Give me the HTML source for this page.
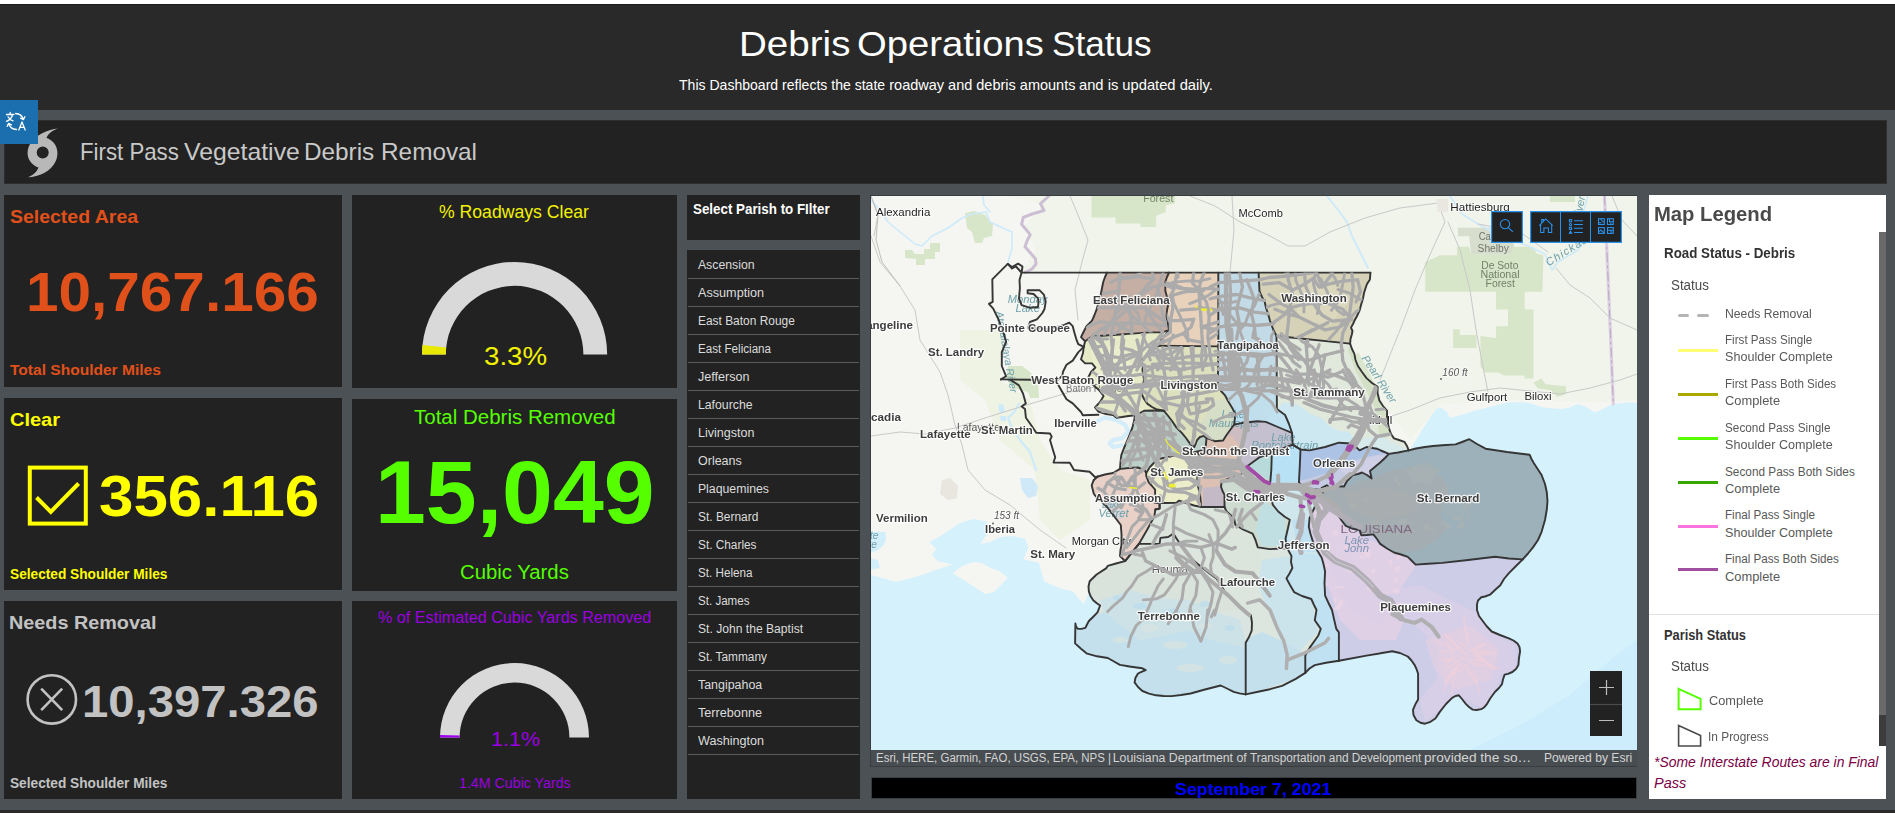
<!DOCTYPE html>
<html lang="en"><head><meta charset="utf-8"><title>Debris Operations Status</title><style>
html,body{margin:0;padding:0}
body{width:1895px;height:813px;overflow:hidden;background:#4c5156;position:relative;font-family:"Liberation Sans",sans-serif}
.b{position:absolute;display:block;box-sizing:border-box}
.t{position:absolute;white-space:nowrap;line-height:normal;transform-origin:0 0;display:block}
.med{-webkit-text-stroke:0}
</style></head><body>
<div class="b" style="left:0px;top:0px;width:1895px;height:4px;background:#ffffff;"></div>
<div class="b" style="left:0px;top:4px;width:1895px;height:106px;background:#292929;"></div>
<div class="b" style="left:0px;top:4px;width:1895px;height:1px;background:#1c1c1c;"></div>
<div class="b" style="left:0px;top:810px;width:1895px;height:3px;background:#2a2a2a;"></div>
<span class="t " style="left:738.72px;top:24.40px;font-size:35px;color:#ffffff;transform:scaleX(1.1017);">Debris</span>
<span class="t " style="left:857.38px;top:24.40px;font-size:35px;color:#ffffff;transform:scaleX(1.0918);">Operations</span>
<span class="t " style="left:1051.72px;top:24.40px;font-size:35px;color:#ffffff;transform:scaleX(1.0049);">Status</span>
<span class="t " style="left:679.42px;top:76.50px;font-size:14.5px;color:#ffffff;transform:scaleX(0.9688);">This Dashboard reflects the state</span>
<span class="t " style="left:889.26px;top:76.50px;font-size:14.5px;color:#ffffff;">roadway and debris amounts</span>
<span class="t " style="left:1079.01px;top:76.50px;font-size:14.5px;color:#ffffff;transform:scaleX(1.0149);">and is updated daily.</span>
<div class="b" style="left:4px;top:120px;width:1883px;height:64px;background:#222222;box-shadow:inset 0 0 0 1px #2e2e2e;"></div>
<span class="t " style="left:79.92px;top:138.40px;font-size:24px;color:#c9c9c9;transform:scaleX(0.9267);">First Pass</span>
<span class="t " style="left:184.38px;top:138.40px;font-size:24px;color:#c9c9c9;transform:scaleX(1.0333);">Vegetative</span>
<span class="t " style="left:303.85px;top:138.40px;font-size:24px;color:#c9c9c9;transform:scaleX(1.0134);">Debris Removal</span>
<svg class="b" style="left:24px;top:126px" width="40" height="54" viewBox="24 126 40 54"><path d="M58.2 128.6 C48 129.5 35 135 29.5 145 C26.5 151 27 158 31.5 163 C34 165.8 36.5 167 38.5 167.6 C37 172 33 175.5 27.8 177.2 C39 177 51 171.5 55.8 161 C58.5 155 58 147.5 53.5 142.5 C51 139.8 48.5 138.5 46.5 138 C48 134 52 130.5 58.2 128.6 Z M42.7 146.5 A6 6 0 1 0 42.7 158.5 A6 6 0 1 0 42.7 146.5 Z" fill="#b8b8b8" fill-rule="evenodd"/></svg>
<div class="b" style="left:0px;top:100px;width:38px;height:44px;background:#1b6fae;"></div>
<svg class="b" style="left:4px;top:109px" width="24" height="24" viewBox="0 0 24 24" fill="none" stroke="#ffffff" stroke-width="1.3" stroke-linecap="round" stroke-linejoin="round"><path d="M2.5 5.5h7.5M6.2 3.5v2M8.6 5.5C8 8.5 5.5 11 2.5 12.3M4 7.8c1 1.8 3 3.3 5 4"/><path d="M11.5 4.5c4 .2 6.8 2.2 7.8 6M20.8 7.7l-1.4 2.9-2.8-1.5"/><path d="M12.5 20.5c-4-.2-6.8-2.2-7.8-6M3.2 17.3l1.4-2.9 2.8 1.5"/><path d="M14.8 21l3.2-8 3.2 8M16 18.3h4"/></svg>
<div class="b" style="left:4px;top:195px;width:338px;height:192px;background:#222222;"></div>
<div class="b" style="left:4px;top:398px;width:338px;height:192px;background:#222222;"></div>
<div class="b" style="left:4px;top:601px;width:338px;height:198px;background:#222222;"></div>
<span class="t " style="left:10.22px;top:206.10px;font-size:19px;color:#e0501a;font-weight:bold;transform:scaleX(1.0245);">Selected Area</span>
<span class="t med" style="left:26.49px;top:260.40px;font-size:55px;color:#e0501a;font-weight:bold;transform:scaleX(1.0635);">10,767.166</span>
<span class="t " style="left:10.44px;top:362.40px;font-size:14.5px;color:#e0501a;font-weight:bold;transform:scaleX(1.0722);">Total Shoulder Miles</span>
<span class="t " style="left:9.80px;top:409.00px;font-size:19px;color:#ffff00;font-weight:bold;transform:scaleX(1.0526);">Clear</span>
<svg class="b" style="left:26px;top:464px" width="64" height="64" viewBox="26 464 64 64" fill="none" stroke="#ffff00" stroke-width="4"><rect x="29.8" y="467.6" width="56" height="56"/><path d="M36.5 497.5L50.8 511.8L78.6 483.5"/></svg>
<span class="t med" style="left:98.66px;top:463.80px;font-size:56.5px;color:#ffff00;font-weight:bold;transform:scaleX(1.0948);">356.116</span>
<span class="t " style="left:10.19px;top:566.30px;font-size:14.5px;color:#ffff00;font-weight:bold;transform:scaleX(0.9439);">Selected Shoulder Miles</span>
<span class="t " style="left:9.31px;top:611.90px;font-size:19px;color:#c2c2c2;font-weight:bold;transform:scaleX(1.0418);">Needs Removal</span>
<svg class="b" style="left:24px;top:672px" width="56" height="56" viewBox="24 672 56 56" fill="none" stroke="#c2c2c2" stroke-width="2.6"><circle cx="51.8" cy="699.4" r="24.2"/><path d="M41.2 688.6L62.2 710.2M62.2 688.6L41.2 710.2"/></svg>
<span class="t med" style="left:82.26px;top:676.90px;font-size:44px;color:#c2c2c2;font-weight:bold;transform:scaleX(1.0743);">10,397.326</span>
<span class="t " style="left:10.19px;top:775.30px;font-size:14.5px;color:#c2c2c2;font-weight:bold;transform:scaleX(0.9433);">Selected Shoulder Miles</span>
<div class="b" style="left:352px;top:195px;width:325px;height:193px;background:#222222;"></div>
<div class="b" style="left:352px;top:399px;width:325px;height:192px;background:#222222;"></div>
<div class="b" style="left:352px;top:601px;width:325px;height:198px;background:#222222;"></div>
<span class="t " style="left:439.38px;top:201.70px;font-size:17.5px;color:#f2f200;transform:scaleX(1.0070);">% Roadways Clear</span>
<svg class="b" style="left:419.9px;top:260.0px" width="189.2" height="96.6" viewBox="419.9 260.0 189.2 96.6"><path d="M421.90 354.60A92.6 92.6 0 0 1 607.10 354.60L583.30 354.60A68.8 68.8 0 0 0 445.70 354.60Z" fill="#d9d9d9"/><path d="M421.90 354.60A92.6 92.6 0 0 1 422.40 345.02L446.07 347.48A68.8 68.8 0 0 0 445.70 354.60Z" fill="#e8e800"/></svg>
<span class="t " style="left:483.93px;top:341.20px;font-size:26.5px;color:#f2f200;transform:scaleX(1.0450);">3.3%</span>
<span class="t " style="left:413.89px;top:405.80px;font-size:20px;color:#55ff00;transform:scaleX(1.0246);">Total Debris Removed</span>
<span class="t med" style="left:374.72px;top:441.80px;font-size:88.5px;color:#55ff00;font-weight:bold;transform:scaleX(1.0328);">15,049</span>
<span class="t " style="left:459.88px;top:560.80px;font-size:20px;color:#55ff00;transform:scaleX(1.0161);">Cubic Yards</span>
<span class="t " style="left:377.63px;top:608.70px;font-size:16px;color:#9a00e0;transform:scaleX(1.0100);">% of Estimated Cubic Yards Removed</span>
<svg class="b" style="left:438.0px;top:660.9px" width="153.0" height="78.5" viewBox="438.0 660.9 153.0 78.5"><path d="M440.00 737.40A74.5 74.5 0 0 1 589.00 737.40L569.40 737.40A54.9 54.9 0 0 0 459.60 737.40Z" fill="#d9d9d9"/><path d="M440.00 737.40A74.5 74.5 0 0 1 440.04 734.83L459.63 735.50A54.9 54.9 0 0 0 459.60 737.40Z" fill="#a000f0"/></svg>
<span class="t " style="left:490.79px;top:726.50px;font-size:21px;color:#9a00e0;transform:scaleX(1.0248);">1.1%</span>
<span class="t " style="left:458.63px;top:774.60px;font-size:14px;color:#9a00e0;transform:scaleX(1.0154);">1.4M Cubic Yards</span>
<div class="b" style="left:687px;top:195px;width:173px;height:45px;background:#222222;"></div>
<span class="t " style="left:692.60px;top:201.00px;font-size:14px;color:#ffffff;font-weight:bold;transform:scaleX(0.9543);">Select Parish to FIlter</span>
<div class="b" style="left:687px;top:250px;width:173px;height:549px;background:#222222;"></div>
<span class="t " style="left:697.90px;top:258.00px;font-size:12.3px;color:#dcdcdc;">Ascension</span>
<div class="b" style="left:688px;top:278px;width:171px;height:1px;background:#5c5c5c;"></div>
<span class="t " style="left:697.90px;top:286.00px;font-size:12.3px;color:#dcdcdc;transform:scaleX(1.0279);">Assumption</span>
<div class="b" style="left:688px;top:306px;width:171px;height:1px;background:#5c5c5c;"></div>
<span class="t " style="left:697.90px;top:314.00px;font-size:12.3px;color:#dcdcdc;transform:scaleX(0.9696);">East Baton Rouge</span>
<div class="b" style="left:688px;top:334px;width:171px;height:1px;background:#5c5c5c;"></div>
<span class="t " style="left:697.90px;top:342.00px;font-size:12.3px;color:#dcdcdc;transform:scaleX(0.9456);">East Feliciana</span>
<div class="b" style="left:688px;top:362px;width:171px;height:1px;background:#5c5c5c;"></div>
<span class="t " style="left:697.90px;top:370.00px;font-size:12.3px;color:#dcdcdc;transform:scaleX(1.0215);">Jefferson</span>
<div class="b" style="left:688px;top:390px;width:171px;height:1px;background:#5c5c5c;"></div>
<span class="t " style="left:697.90px;top:398.00px;font-size:12.3px;color:#dcdcdc;">Lafourche</span>
<div class="b" style="left:688px;top:418px;width:171px;height:1px;background:#5c5c5c;"></div>
<span class="t " style="left:697.90px;top:426.00px;font-size:12.3px;color:#dcdcdc;transform:scaleX(1.0199);">Livingston</span>
<div class="b" style="left:688px;top:446px;width:171px;height:1px;background:#5c5c5c;"></div>
<span class="t " style="left:697.90px;top:454.00px;font-size:12.3px;color:#dcdcdc;transform:scaleX(1.0160);">Orleans</span>
<div class="b" style="left:688px;top:474px;width:171px;height:1px;background:#5c5c5c;"></div>
<span class="t " style="left:697.90px;top:482.00px;font-size:12.3px;color:#dcdcdc;">Plaquemines</span>
<div class="b" style="left:688px;top:502px;width:171px;height:1px;background:#5c5c5c;"></div>
<span class="t " style="left:697.90px;top:510.00px;font-size:12.3px;color:#dcdcdc;transform:scaleX(0.9701);">St. Bernard</span>
<div class="b" style="left:688px;top:530px;width:171px;height:1px;background:#5c5c5c;"></div>
<span class="t " style="left:697.90px;top:538.00px;font-size:12.3px;color:#dcdcdc;transform:scaleX(0.9620);">St. Charles</span>
<div class="b" style="left:688px;top:558px;width:171px;height:1px;background:#5c5c5c;"></div>
<span class="t " style="left:697.90px;top:566.00px;font-size:12.3px;color:#dcdcdc;transform:scaleX(0.9495);">St. Helena</span>
<div class="b" style="left:688px;top:586px;width:171px;height:1px;background:#5c5c5c;"></div>
<span class="t " style="left:697.90px;top:594.00px;font-size:12.3px;color:#dcdcdc;transform:scaleX(0.9421);">St. James</span>
<div class="b" style="left:688px;top:614px;width:171px;height:1px;background:#5c5c5c;"></div>
<span class="t " style="left:697.90px;top:622.00px;font-size:12.3px;color:#dcdcdc;transform:scaleX(0.9852);">St. John the Baptist</span>
<div class="b" style="left:688px;top:642px;width:171px;height:1px;background:#5c5c5c;"></div>
<span class="t " style="left:697.90px;top:650.00px;font-size:12.3px;color:#dcdcdc;transform:scaleX(0.9633);">St. Tammany</span>
<div class="b" style="left:688px;top:670px;width:171px;height:1px;background:#5c5c5c;"></div>
<span class="t " style="left:697.90px;top:678.00px;font-size:12.3px;color:#dcdcdc;transform:scaleX(1.0102);">Tangipahoa</span>
<div class="b" style="left:688px;top:698px;width:171px;height:1px;background:#5c5c5c;"></div>
<span class="t " style="left:697.90px;top:706.00px;font-size:12.3px;color:#dcdcdc;transform:scaleX(1.0284);">Terrebonne</span>
<div class="b" style="left:688px;top:726px;width:171px;height:1px;background:#5c5c5c;"></div>
<span class="t " style="left:697.90px;top:734.00px;font-size:12.3px;color:#dcdcdc;transform:scaleX(1.0255);">Washington</span>
<div class="b" style="left:688px;top:754px;width:171px;height:1px;background:#5c5c5c;"></div>
<div class="b" style="left:870px;top:195px;width:767px;height:572px;background:#3a3d40;"></div>
<div class="b" style="left:871px;top:196px;width:766px;height:554px;background:#d5f1fc;overflow:hidden"><svg width="766" height="554" viewBox="871 196 766 554" style="display:block;will-change:transform;transform:rotate(0.003deg);font-family:'Liberation Sans',sans-serif"><polygon points="871.0,196.0 1637.0,196.0 1637.0,403.0 1629.5,402.2 1612.3,403.9 1603.0,409.0 1595.0,412.5 1586.0,407.0 1577.8,403.9 1568.0,408.0 1560.6,409.1 1543.4,407.4 1526.1,402.2 1508.9,402.2 1490.0,407.0 1474.5,410.8 1461.0,415.0 1450.3,417.7 1446.0,411.0 1440.0,407.4 1435.4,409.1 1430.0,418.0 1422.0,430.0 1413.0,445.0 1409.0,451.0 1300.0,560.0 1200.0,600.0 1089.0,592.0 1084.0,604.0 1080.0,600.0 1073.4,591.7 1059.6,588.2 1044.1,581.3 1041.0,570.0 1038.9,562.4 1023.3,559.4 1028.5,547.4 1025.0,538.7 1012.0,536.0 1000.9,537.0 990.0,542.0 980.2,543.9 985.0,537.0 988.9,531.8 987.1,521.5 973.4,518.9 959.6,523.2 948.0,531.0 938.9,537.0 929.4,542.2 936.3,549.1 932.0,554.2 937.2,561.1 952.7,564.6 938.9,568.9 921.7,574.9 908.0,579.0 895.8,581.8 882.0,578.0 871.0,575.0" fill="#f5f6f2" stroke="none" stroke-width="0" stroke-linejoin="round" />
<polygon points="1010.0,196.0 1637.0,196.0 1637.0,400.0 1600.0,402.0 1500.0,400.0 1440.0,405.0 1410.0,440.0 1380.0,400.0 1350.0,340.0 1370.0,272.0 1022.0,272.0 1035.0,250.0 1025.0,225.0 1045.0,205.0" fill="#f0f4ea" stroke="none" stroke-width="0" stroke-linejoin="round" />
<polygon points="960.0,330.0 1005.0,330.0 1000.0,380.0 1030.0,400.0 1040.0,440.0 1060.0,470.0 1090.0,480.0 1090.0,520.0 1060.0,540.0 1040.0,520.0 1035.0,470.0 1000.0,440.0 985.0,400.0 960.0,380.0" fill="#eef3e4" stroke="none" stroke-width="0" stroke-linejoin="round" />
<polygon points="1637.0,640.0 1637.0,750.0 1470.0,750.0 1520.0,725.0 1570.0,695.0 1610.0,660.0" fill="#cdedfc" stroke="none" stroke-width="0" stroke-linejoin="round" />
<polygon points="952.7,573.2 962.0,566.0 973.4,562.0 982.0,563.0 990.6,568.0 999.0,571.0 1007.8,577.5 1001.0,585.0 994.0,592.1 985.4,593.9 976.0,588.0 966.5,581.8" fill="#f5f6f2" stroke="none" stroke-width="0" stroke-linejoin="round" />
<polygon points="870.0,531.8 885.5,531.8 886.0,540.0 883.0,546.0 876.9,550.8 870.0,552.5" fill="#d3eefb" stroke="none" stroke-width="0" stroke-linejoin="round" />
<polygon points="870.0,558.0 878.0,560.0 880.0,568.0 870.0,570.0" fill="#d3eefb" stroke="none" stroke-width="0" stroke-linejoin="round" />
<polygon points="1091.5,196.0 1175.0,196.0 1175.0,203.6 1165.6,205.3 1165.6,212.2 1156.1,215.7 1156.1,226.9 1140.6,226.9 1140.6,223.4 1115.6,223.4 1115.6,217.4 1091.5,217.4" fill="#d7e5c8" stroke="none" stroke-width="0" stroke-linejoin="round" />
<polygon points="1425.3,262.0 1440.0,255.3 1457.0,255.3 1457.0,246.7 1469.0,246.7 1471.0,254.4 1510.6,254.4 1510.6,246.7 1533.0,246.7 1536.5,253.6 1543.4,255.3 1542.4,291.8 1524.7,291.8 1524.7,309.5 1533.5,309.5 1533.5,378.4 1524.7,378.4 1524.7,375.5 1504.0,375.5 1498.1,372.5 1485.3,372.5 1480.4,366.6 1480.4,336.1 1496.1,338.1 1496.1,326.3 1508.0,326.3 1508.0,309.5 1496.1,309.5 1496.1,291.8 1425.3,291.8" fill="#d7e5c8" stroke="none" stroke-width="0" stroke-linejoin="round" />
<polygon points="1458.0,227.7 1512.0,227.7 1514.0,246.7 1510.6,254.4 1471.0,254.4 1469.3,236.3 1458.0,236.3" fill="#d7decd" stroke="none" stroke-width="0" stroke-linejoin="round" />
<polygon points="1453.2,329.2 1459.7,329.2 1459.7,335.1 1476.5,335.1 1476.5,347.9 1453.2,347.9" fill="#d7e5c8" stroke="none" stroke-width="0" stroke-linejoin="round" />
<polygon points="1533.5,382.4 1541.4,378.4 1545.4,384.3 1566.0,386.3 1566.0,394.2 1557.2,397.1 1551.3,390.2 1537.5,388.3" fill="#d7e5c8" stroke="none" stroke-width="0" stroke-linejoin="round" />
<polygon points="1550.0,196.0 1575.0,196.0 1575.0,202.0 1550.0,202.0" fill="#d7e5c8" stroke="none" stroke-width="0" stroke-linejoin="round" />
<polygon points="965.0,213.0 974.0,211.0 985.0,215.0 993.0,224.0 992.0,236.0 984.0,238.0 982.0,243.0 975.0,243.0 972.0,232.0 967.0,228.0" fill="#d7e5c8" stroke="none" stroke-width="0" stroke-linejoin="round" />
<polygon points="905.0,250.0 912.0,250.0 915.0,254.0 924.0,254.0 924.0,249.0 930.0,249.0 930.0,243.0 940.0,243.0 940.0,252.0 935.0,252.0 935.0,259.0 925.0,259.0 925.0,265.0 916.0,265.0 916.0,259.0 905.0,258.0" fill="#d7e5c8" stroke="none" stroke-width="0" stroke-linejoin="round" />
<polygon points="1008.0,366.0 1022.0,366.0 1030.0,372.0 1038.0,382.0 1039.0,398.0 1030.0,398.0 1028.0,392.0 1012.0,388.0 1006.0,378.0" fill="#d7e5c8" stroke="none" stroke-width="0" stroke-linejoin="round" />
<polygon points="1358.0,352.0 1366.0,366.0 1376.0,386.0 1380.0,406.0 1372.0,404.0 1362.0,386.0 1352.0,362.0" fill="#dbe6cf" stroke="none" stroke-width="0" stroke-linejoin="round" />
<polyline points="871.0,200.0 880.0,210.0 888.0,222.0 900.0,232.0 915.0,244.0 922.0,246.0 932.0,236.0 948.0,228.0 962.0,218.0 972.0,214.0 986.0,212.0 990.0,222.0 1003.0,228.0 1012.0,232.0 1012.0,248.0 1008.0,262.0" fill="none" stroke="#cdeafa" stroke-width="1.6" stroke-linejoin="round" stroke-linecap="round" />
<polyline points="983.0,196.0 984.0,205.0 990.0,212.0" fill="none" stroke="#cdeafa" stroke-width="1.6" stroke-linejoin="round" stroke-linecap="round" />
<polyline points="1327.0,196.0 1338.0,210.0 1347.0,222.0 1352.0,236.0 1360.0,252.0 1368.0,268.0" fill="none" stroke="#cdeafa" stroke-width="1.8" stroke-linejoin="round" stroke-linecap="round" />
<polyline points="1450.0,196.0 1462.0,214.0 1478.0,224.0 1500.0,236.0 1528.0,246.0 1545.0,254.0 1552.0,270.0 1558.0,262.0 1578.0,250.0 1586.0,236.0 1582.0,216.0 1588.0,196.0" fill="none" stroke="#cdeafa" stroke-width="1.6" stroke-linejoin="round" stroke-linecap="round" />
<polyline points="1097.6,421.1 1104.5,417.7 1114.8,419.4 1125.1,424.6 1128.6,431.5 1121.7,438.4 1113.1,440.1 1109.6,443.5 1113.1,447.0 1121.7,445.2" fill="none" stroke="#d4edfa" stroke-width="4.2" stroke-linejoin="round" stroke-linecap="round" />
<polyline points="1019.0,404.0 1014.0,412.0 1008.0,418.0 1012.0,428.0 1020.0,440.0 1030.0,452.0 1036.0,470.0" fill="none" stroke="#cdeafa" stroke-width="2.2" stroke-linejoin="round" stroke-linecap="round" />
<polygon points="998.0,405.0 1003.0,404.0 1005.0,412.0 1000.0,414.0" fill="#cdeafa" stroke="none" stroke-width="0" stroke-linejoin="round" />
<polygon points="1000.0,416.0 1006.0,416.0 1006.0,421.0 1001.0,421.0" fill="#cdeafa" stroke="none" stroke-width="0" stroke-linejoin="round" />
<polygon points="1020.0,478.0 1032.0,478.0 1038.0,486.0 1036.0,496.0 1028.0,498.0 1022.0,490.0" fill="#cfe9f8" stroke="none" stroke-width="0" stroke-linejoin="round" />
<polyline points="1049.0,196.0 1040.5,203.6 1044.0,210.5 1032.0,214.0 1023.3,217.4 1021.6,224.3 1030.2,234.6 1027.0,241.0 1025.0,246.7 1035.4,258.7 1036.0,264.0 1032.0,269.0 1025.0,272.5" fill="none" stroke="#cdbfd3" stroke-width="3" stroke-linejoin="round" stroke-linecap="round" />
<polyline points="1604.5,196.0 1610.5,334.5 1613.3,404.0" fill="none" stroke="#ddd0e3" stroke-width="3.2" stroke-linejoin="round" stroke-linecap="round" />
<polyline points="1604.5,196.0 1610.5,334.5 1613.3,404.0" fill="none" stroke="#b3a0bc" stroke-width="0.9" stroke-linejoin="round" stroke-linecap="round" stroke-dasharray="9 4 2 4"/>
<polyline points="871.0,236.0 880.0,262.0 900.0,286.0 915.0,310.0 920.0,340.0 940.0,372.0 948.0,395.0 955.0,425.0 962.0,445.0 968.0,470.0 985.0,490.0 1010.0,505.0 1040.0,530.0 1066.0,548.0" fill="none" stroke="#c9c9c9" stroke-width="1" stroke-linejoin="round" stroke-linecap="round" />
<polyline points="871.0,436.0 900.0,432.0 925.0,434.0 955.0,428.0 985.0,418.0 1020.0,407.0 1070.0,392.0 1100.0,386.0" fill="none" stroke="#c9c9c9" stroke-width="1" stroke-linejoin="round" stroke-linecap="round" />
<polyline points="871.0,196.0 878.0,215.0 874.0,236.0" fill="none" stroke="#c9c9c9" stroke-width="1" stroke-linejoin="round" stroke-linecap="round" />
<polyline points="1070.0,196.0 1078.0,215.0 1088.0,240.0 1082.0,262.0 1075.0,290.0 1078.0,320.0" fill="none" stroke="#c9c9c9" stroke-width="1" stroke-linejoin="round" stroke-linecap="round" />
<polyline points="1232.0,196.0 1234.0,230.0 1230.0,272.0" fill="none" stroke="#c9c9c9" stroke-width="1" stroke-linejoin="round" stroke-linecap="round" />
<polyline points="1190.0,196.0 1215.0,206.0 1240.0,222.0 1270.0,236.0" fill="none" stroke="#c9c9c9" stroke-width="1" stroke-linejoin="round" stroke-linecap="round" />
<polyline points="1270.0,236.0 1288.0,246.0 1305.0,246.0 1330.0,232.0 1365.0,218.0 1400.0,208.0 1438.0,203.0" fill="none" stroke="#c9c9c9" stroke-width="1" stroke-linejoin="round" stroke-linecap="round" />
<polyline points="1438.0,203.0 1445.0,222.0 1432.0,250.0 1415.0,290.0 1402.0,325.0 1392.0,350.0 1380.0,380.0" fill="none" stroke="#c9c9c9" stroke-width="1" stroke-linejoin="round" stroke-linecap="round" />
<polyline points="1448.0,222.0 1460.0,250.0 1470.0,290.0 1476.0,330.0 1484.0,372.0 1488.0,392.0" fill="none" stroke="#c9c9c9" stroke-width="1" stroke-linejoin="round" stroke-linecap="round" />
<polyline points="1380.0,420.0 1410.0,410.0 1440.0,398.0 1470.0,392.0 1500.0,388.0 1520.0,390.0 1560.0,394.0 1590.0,388.0 1620.0,380.0 1637.0,374.0" fill="none" stroke="#c9c9c9" stroke-width="1" stroke-linejoin="round" stroke-linecap="round" />
<polyline points="1556.0,268.0 1570.0,285.0 1590.0,298.0 1610.0,318.0 1637.0,330.0" fill="none" stroke="#c9c9c9" stroke-width="1" stroke-linejoin="round" stroke-linecap="round" />
<polyline points="1612.0,196.0 1622.0,220.0 1637.0,236.0" fill="none" stroke="#c9c9c9" stroke-width="1" stroke-linejoin="round" stroke-linecap="round" />
<polyline points="1478.0,224.0 1520.0,232.0 1548.0,252.0" fill="none" stroke="#c9c9c9" stroke-width="1" stroke-linejoin="round" stroke-linecap="round" />
<polyline points="871.0,196.0 878.0,215.0 876.0,240.0 882.0,262.0 900.0,286.0" fill="none" stroke="#bdbdbd" stroke-width="1" stroke-linejoin="round" stroke-linecap="round" />
<polygon points="942.0,480.0 950.0,478.0 958.0,486.0 957.0,498.0 948.0,500.0 940.0,494.0" fill="#e8e6df" stroke="none" stroke-width="0" stroke-linejoin="round" />
<polygon points="1436.0,199.0 1448.0,199.0 1448.0,212.0 1438.0,212.0" fill="#e9e7df" stroke="none" stroke-width="0" stroke-linejoin="round" />
<polygon points="1107.0,272.6 1169.0,272.6 1167.0,277.0 1165.3,281.8 1165.3,290.8 1167.0,297.0 1168.5,303.8 1167.0,310.0 1166.6,316.7 1168.0,324.0 1169.1,330.2 1162.7,332.2 1149.9,332.4 1120.0,334.5 1092.0,336.5 1085.1,341.3 1081.0,337.2 1083.5,332.0 1086.5,326.2 1092.0,320.7 1094.5,315.0 1096.8,308.9 1098.5,302.0 1100.7,294.7 1102.0,288.0 1103.3,281.8 1105.0,277.0 1107.0,272.6" fill="#c5aea4" stroke="#c5aea4" stroke-width="0.6" stroke-linejoin="round" />
<polygon points="1169.0,272.6 1218.3,272.6 1218.3,346.4 1158.8,345.7 1160.0,342.0 1162.7,337.4 1166.0,334.0 1169.1,330.2 1168.0,324.0 1166.6,316.7 1167.0,310.0 1168.5,303.8 1167.0,297.0 1165.3,290.8 1165.3,281.8 1167.0,277.0 1169.0,272.6" fill="#e9d2bc" stroke="#e9d2bc" stroke-width="0.6" stroke-linejoin="round" />
<polygon points="1218.3,272.6 1258.6,272.6 1259.5,291.5 1262.0,297.0 1264.7,301.8 1266.0,308.0 1268.1,313.9 1270.0,320.8 1273.4,330.0 1276.5,336.0 1276.9,409.1 1285.1,415.0 1289.0,424.0 1292.0,432.9 1279.0,427.5 1265.8,421.9 1257.5,421.2 1245.0,422.5 1234.1,424.6 1235.4,414.2 1231.9,407.4 1228.0,401.0 1225.0,395.3 1221.0,391.0 1217.8,386.7 1218.3,346.4 1218.3,272.6" fill="#c3dbe7" stroke="#c3dbe7" stroke-width="0.6" stroke-linejoin="round" />
<polygon points="1258.6,272.6 1370.4,272.6 1369.9,279.4 1367.0,284.0 1365.6,288.0 1364.0,293.0 1363.0,298.4 1361.0,305.0 1359.6,310.4 1357.0,316.0 1354.4,320.8 1353.0,324.0 1351.0,327.6 1352.5,331.0 1351.8,334.5 1350.5,339.0 1350.1,343.6 1276.5,336.0 1273.4,330.0 1270.0,320.8 1268.1,313.9 1266.0,308.0 1264.7,301.8 1262.0,297.0 1259.5,291.5 1258.6,272.6" fill="#d6d2b7" stroke="#d6d2b7" stroke-width="0.6" stroke-linejoin="round" />
<polygon points="1276.5,336.0 1350.1,343.6 1352.0,349.0 1354.4,353.9 1355.5,360.0 1357.9,366.0 1362.0,372.0 1366.5,378.1 1372.0,383.0 1377.7,386.7 1377.5,393.0 1379.4,400.5 1383.0,406.0 1387.1,410.8 1387.0,419.0 1388.9,428.0 1391.0,434.0 1394.0,438.4 1399.0,440.0 1404.4,441.8 1407.0,446.0 1408.7,450.4 1398.0,452.5 1388.9,453.9 1382.0,451.0 1376.8,448.7 1366.5,447.0 1359.6,450.4 1355.0,446.0 1351.0,443.5 1338.9,442.7 1325.1,447.0 1309.6,450.4 1300.5,449.5 1292.7,444.6 1292.0,432.9 1289.0,424.0 1285.1,415.0 1276.9,409.1 1276.5,336.0" fill="#e1e8dc" stroke="#e1e8dc" stroke-width="0.6" stroke-linejoin="round" />
<polygon points="1083.7,346.9 1085.1,341.3 1092.0,336.5 1120.0,334.5 1149.9,332.4 1162.7,332.2 1169.1,330.2 1166.0,334.0 1162.7,337.4 1160.0,342.0 1158.8,345.7 1154.0,349.0 1147.2,355.4 1143.0,358.5 1140.7,360.6 1143.3,365.8 1142.4,369.5 1144.1,379.8 1142.5,387.0 1141.5,393.6 1144.0,399.0 1147.5,403.9 1152.0,407.0 1156.1,409.1 1163.9,410.8 1154.0,410.5 1144.1,410.8 1140.0,413.0 1135.1,415.2 1128.6,416.0 1122.0,417.0 1116.5,417.7 1113.1,415.1 1106.0,414.0 1098.4,411.7 1095.0,407.4 1100.1,402.0 1103.6,396.0 1099.0,390.0 1092.0,384.0 1088.0,378.0 1091.0,372.0 1095.4,367.5 1092.0,363.4 1085.1,363.4 1081.0,359.3 1083.0,353.0 1083.7,346.9" fill="#e6eac6" stroke="#e6eac6" stroke-width="0.6" stroke-linejoin="round" />
<polygon points="1158.8,345.7 1218.3,346.4 1217.8,386.7 1221.0,391.0 1225.0,395.3 1228.0,401.0 1231.9,407.4 1235.4,414.2 1234.1,424.6 1230.0,430.2 1226.5,435.0 1223.1,440.5 1214.8,441.2 1207.9,438.4 1204.0,435.8 1200.0,437.0 1197.1,440.0 1196.0,443.0 1194.4,446.9 1190.3,444.1 1186.0,438.0 1182.0,433.1 1176.5,427.6 1172.0,421.0 1168.2,416.0 1163.9,410.8 1156.1,409.1 1152.0,407.0 1147.5,403.9 1144.0,399.0 1141.5,393.6 1142.5,387.0 1144.1,379.8 1142.4,369.5 1143.3,365.8 1140.7,360.6 1143.0,358.5 1147.2,355.4 1154.0,349.0 1158.8,345.7" fill="#dde1be" stroke="#dde1be" stroke-width="0.6" stroke-linejoin="round" />
<polygon points="1135.1,415.2 1140.0,413.0 1144.1,410.8 1154.0,410.5 1163.9,410.8 1168.2,416.0 1172.0,421.0 1176.5,427.6 1182.0,433.1 1186.0,438.0 1190.3,444.1 1194.4,446.9 1196.0,443.0 1197.1,440.0 1200.0,437.0 1204.0,435.8 1206.5,438.4 1206.0,444.0 1205.2,449.5 1197.1,451.7 1187.0,453.5 1176.5,455.1 1166.0,457.5 1157.2,459.3 1150.0,467.0 1146.2,473.0 1144.8,470.3 1137.9,467.5 1129.0,468.0 1120.0,468.9 1120.5,462.0 1121.3,455.1 1124.0,448.0 1126.9,441.3 1129.5,435.0 1132.4,427.6 1134.0,421.0 1135.1,415.2" fill="#bdd0c8" stroke="#bdd0c8" stroke-width="0.6" stroke-linejoin="round" />
<polygon points="1146.2,473.0 1150.0,467.0 1157.2,459.3 1166.0,457.5 1176.5,455.1 1187.0,453.5 1197.1,451.7 1202.7,460.6 1198.5,466.2 1197.5,474.0 1197.1,482.7 1199.9,493.7 1201.3,507.0 1194.0,505.5 1187.5,503.4 1183.0,502.0 1179.2,500.6 1176.5,502.7 1166.0,503.0 1155.1,502.7 1155.1,489.6 1152.0,486.0 1148.9,482.7 1146.2,475.8 1146.2,473.0" fill="#eceec9" stroke="#eceec9" stroke-width="0.6" stroke-linejoin="round" />
<polygon points="1093.8,479.9 1097.9,476.5 1105.0,474.5 1113.1,473.0 1120.0,468.9 1129.0,468.0 1137.9,467.5 1144.8,470.3 1146.2,473.0 1146.2,475.8 1148.9,482.7 1152.0,486.0 1155.1,489.6 1155.1,502.7 1159.6,503.4 1159.6,508.6 1155.3,509.5 1154.4,516.3 1147.0,530.0 1138.9,543.9 1132.0,552.5 1125.1,561.1 1120.0,556.0 1120.5,550.0 1121.7,543.9 1121.5,534.0 1120.8,525.0 1117.0,520.0 1113.0,514.6 1107.0,507.0 1101.0,501.0 1097.0,498.0 1093.8,493.7 1091.7,485.4 1093.8,479.9" fill="#e9d1c7" stroke="#e9d1c7" stroke-width="0.6" stroke-linejoin="round" />
<polygon points="1204.0,435.8 1207.9,438.4 1214.8,441.2 1223.1,440.5 1226.5,435.0 1230.0,430.2 1234.1,424.6 1245.0,422.5 1257.5,421.2 1265.8,421.9 1279.0,427.5 1292.0,432.9 1292.7,444.6 1276.0,451.0 1258.9,457.7 1246.5,466.7 1241.7,473.6 1231.3,477.7 1221.7,481.2 1221.0,486.7 1222.5,491.0 1224.5,494.9 1224.5,507.0 1201.3,507.0 1199.9,493.7 1197.1,482.7 1197.5,474.0 1198.5,466.2 1202.7,460.6 1197.1,451.7 1205.2,449.5 1206.0,444.0 1206.5,438.4 1204.0,435.8" fill="#cdbdc2" stroke="#cdbdc2" stroke-width="0.6" stroke-linejoin="round" />
<polygon points="1276.0,451.0 1271.8,453.2 1271.3,470.0 1269.9,486.7 1271.0,496.0 1272.7,504.6 1278.2,511.5 1285.1,517.0 1289.8,519.8 1288.0,528.0 1285.5,538.7 1287.2,548.2 1269.8,549.1 1257.8,547.4 1255.5,540.0 1252.6,533.6 1243.0,529.5 1235.4,525.0 1234.1,518.4 1230.5,515.0 1226.5,511.5 1224.5,507.0 1224.5,494.9 1222.5,491.0 1221.0,486.7 1221.7,481.2 1231.3,477.7 1241.7,473.6 1246.5,466.7 1258.9,457.7" fill="#c9d9d0" stroke="#c9d9d0" stroke-width="0.6" stroke-linejoin="round" />
<polygon points="1276.0,451.0 1292.7,444.6 1300.5,449.5 1299.8,466.0 1298.9,482.5 1302.0,486.0 1310.0,489.0 1321.7,490.0 1318.0,500.0 1309.6,518.1 1308.8,526.7 1310.5,534.0 1313.1,542.2 1317.0,550.0 1321.7,557.7 1305.0,556.0 1287.2,548.2 1285.5,538.7 1288.0,528.0 1289.8,519.8 1285.1,517.0 1278.2,511.5 1272.7,504.6 1271.0,496.0 1269.9,486.7 1271.3,470.0 1271.8,453.2" fill="#c0e3f5" stroke="#c0e3f5" stroke-width="0.6" stroke-linejoin="round" />
<polygon points="1287.2,548.2 1305.0,556.0 1321.7,557.7 1323.5,564.0 1325.1,571.5 1324.5,583.0 1325.1,595.6 1328.5,603.0 1332.0,610.0 1334.0,619.0 1336.3,628.9 1338.9,632.4 1338.9,660.8 1326.0,662.8 1314.8,665.1 1309.5,668.5 1305.3,672.9 1305.3,655.6 1309.6,647.9 1318.2,635.8 1320.8,628.9 1314.8,620.3 1316.5,610.0 1314.0,605.0 1311.3,599.0 1302.0,596.0 1294.1,592.1 1290.0,585.0 1286.4,578.4 1289.5,573.5 1292.4,568.0 1291.0,562.0 1291.5,556.0 1287.2,548.2" fill="#bfe1f2" stroke="#bfe1f2" stroke-width="0.6" stroke-linejoin="round" />
<polygon points="1300.5,449.5 1309.6,450.4 1325.1,447.0 1338.9,442.7 1351.0,443.5 1355.0,446.0 1359.6,450.4 1366.5,447.0 1376.8,448.7 1382.0,451.0 1388.9,453.9 1385.0,458.0 1380.2,462.5 1370.0,471.0 1371.6,478.4 1367.0,475.0 1362.0,472.5 1358.0,474.0 1352.7,475.0 1347.0,481.0 1344.0,486.5 1337.2,486.2 1331.0,488.5 1326.8,485.3 1321.7,487.9 1321.7,490.0 1310.0,489.0 1302.0,486.0 1298.9,482.5 1299.8,466.0 1300.5,449.5" fill="#b9c6e6" stroke="#b9c6e6" stroke-width="0.6" stroke-linejoin="round" />
<polygon points="1408.7,450.4 1416.0,448.5 1425.0,447.0 1433.0,446.0 1442.3,445.2 1455.5,444.4 1462.0,442.0 1469.3,439.2 1477.0,444.0 1485.6,448.7 1507.0,452.0 1529.6,454.7 1531.5,459.0 1533.9,463.3 1541.6,475.0 1545.0,484.0 1546.8,492.2 1547.5,501.0 1546.8,509.5 1545.0,520.0 1541.6,531.8 1538.0,540.0 1533.0,547.4 1528.0,553.5 1522.7,559.4 1508.9,558.5 1495.1,556.8 1468.0,560.0 1442.3,562.9 1428.0,563.7 1415.6,564.6 1411.5,560.5 1407.8,556.8 1401.0,554.5 1394.0,552.5 1387.0,548.5 1380.2,543.9 1377.0,539.0 1373.4,534.4 1367.0,535.0 1361.3,535.3 1359.6,530.1 1352.0,528.5 1345.8,525.8 1342.0,521.0 1338.9,516.3 1336.0,512.0 1333.7,507.7 1326.8,505.1 1324.0,498.0 1321.7,490.0 1321.7,487.9 1326.8,485.3 1331.0,488.5 1337.2,486.2 1344.0,486.5 1347.0,481.0 1352.7,475.0 1358.0,474.0 1362.0,472.5 1367.0,475.0 1371.6,478.4 1370.0,471.0 1380.2,462.5 1385.0,458.0 1388.9,453.9 1398.0,452.5" fill="#9db1bb" stroke="#9db1bb" stroke-width="0.6" stroke-linejoin="round" />
<polygon points="1321.7,490.0 1324.0,498.0 1326.8,505.1 1333.7,507.7 1336.0,512.0 1338.9,516.3 1342.0,521.0 1345.8,525.8 1352.0,528.5 1359.6,530.1 1361.3,535.3 1367.0,535.0 1373.4,534.4 1377.0,539.0 1380.2,543.9 1387.0,548.5 1394.0,552.5 1401.0,554.5 1407.8,556.8 1411.5,560.5 1415.6,564.6 1428.0,563.7 1442.3,562.9 1468.0,560.0 1495.1,556.8 1508.9,558.5 1522.7,559.4 1516.0,566.0 1508.9,573.2 1504.0,579.0 1500.3,585.2 1495.0,590.0 1490.0,594.7 1485.0,596.5 1481.3,597.3 1478.0,600.5 1477.0,604.2 1477.0,610.0 1479.0,616.0 1482.2,620.3 1486.5,626.0 1491.7,631.5 1500.0,635.0 1508.9,638.4 1513.5,640.5 1517.5,643.6 1519.5,647.0 1520.1,651.3 1519.0,658.0 1518.4,665.1 1516.0,669.0 1512.4,672.0 1508.0,673.8 1504.6,674.6 1503.0,679.5 1502.0,684.1 1499.0,688.0 1495.1,691.8 1490.5,698.0 1486.5,704.7 1484.0,707.5 1481.3,709.1 1476.5,710.0 1472.7,709.6 1469.0,707.0 1465.8,703.9 1462.0,699.0 1458.9,695.3 1455.5,696.0 1452.1,697.9 1446.0,704.0 1440.0,711.6 1435.4,718.5 1430.5,721.8 1425.0,723.7 1420.5,722.8 1416.4,720.2 1413.5,715.0 1413.0,709.9 1415.5,704.0 1418.1,699.6 1418.1,673.7 1416.5,669.0 1414.7,665.1 1411.5,660.5 1407.8,656.5 1400.0,653.0 1392.3,651.3 1366.5,655.6 1338.9,660.8 1338.9,632.4 1336.3,628.9 1334.0,619.0 1332.0,610.0 1328.5,603.0 1325.1,595.6 1324.5,583.0 1325.1,571.5 1323.5,564.0 1321.7,557.7 1317.0,550.0 1313.1,542.2 1310.5,534.0 1308.8,526.7 1309.6,518.1 1318.0,500.0" fill="#cdcde8" stroke="#cdcde8" stroke-width="0.6" stroke-linejoin="round" />
<polygon points="1155.3,509.5 1159.6,508.6 1159.6,503.4 1155.1,502.7 1166.0,503.0 1176.5,502.7 1179.2,500.6 1183.0,502.0 1187.5,503.4 1194.0,505.5 1201.3,507.0 1224.5,507.0 1226.5,511.5 1230.5,515.0 1234.1,518.4 1235.4,525.0 1243.0,529.5 1252.6,533.6 1255.5,540.0 1257.8,547.4 1269.8,549.1 1287.2,548.2 1291.5,556.0 1291.0,562.0 1292.4,568.0 1289.5,573.5 1286.4,578.4 1290.0,585.0 1294.1,592.1 1302.0,596.0 1311.3,599.0 1314.0,605.0 1316.5,610.0 1314.8,620.3 1320.8,628.9 1318.2,635.8 1309.6,647.9 1305.3,655.6 1305.3,672.9 1295.8,678.9 1282.1,685.8 1270.0,689.2 1258.0,691.8 1245.7,694.4 1245.7,642.7 1249.0,637.0 1251.7,630.7 1252.0,623.0 1250.9,615.2 1243.1,610.0 1233.5,601.0 1225.0,592.1 1221.0,585.0 1216.4,578.4 1209.0,573.0 1202.6,568.0 1196.5,563.0 1190.6,557.7 1185.0,551.0 1180.2,543.9 1176.5,538.5 1173.4,533.6 1168.2,537.0 1160.4,537.9 1159.6,543.9 1138.9,543.9 1154.4,516.3" fill="#dde6de" stroke="#dde6de" stroke-width="0.6" stroke-linejoin="round" />
<polygon points="1125.1,561.1 1138.9,543.9 1159.6,543.9 1160.4,537.9 1168.2,537.0 1173.4,533.6 1176.5,538.5 1180.2,543.9 1185.0,551.0 1190.6,557.7 1196.5,563.0 1202.6,568.0 1209.0,573.0 1216.4,578.4 1221.0,585.0 1225.0,592.1 1233.5,601.0 1243.1,610.0 1250.9,615.2 1252.0,623.0 1251.7,630.7 1249.0,637.0 1245.7,642.7 1245.7,694.4 1239.5,693.4 1233.7,691.8 1227.0,688.5 1220.7,685.5 1205.0,689.5 1190.6,693.5 1181.0,695.0 1171.6,696.1 1163.5,696.0 1156.1,695.3 1149.0,693.6 1142.4,691.0 1138.0,687.0 1134.6,682.4 1135.4,678.0 1138.0,673.5 1141.5,671.8 1145.7,670.1 1142.3,668.3 1131.0,666.7 1119.9,664.9 1114.0,661.5 1107.8,658.0 1097.0,656.3 1087.1,653.7 1081.0,648.8 1075.1,643.4 1075.4,623.5 1076.0,626.5 1077.7,628.7 1081.5,628.9 1085.4,627.9 1087.0,624.5 1088.9,621.0 1093.0,617.0 1097.5,612.4 1098.8,609.0 1100.1,605.5 1096.5,603.0 1093.2,600.3 1090.5,596.0 1088.9,591.7 1088.5,586.5 1089.7,581.3 1096.6,574.5 1106.1,568.4 1107.8,565.8 1116.0,563.5 1125.1,561.1" fill="#dae4e0" stroke="#dae4e0" stroke-width="0.6" stroke-linejoin="round" />
<defs><clipPath id="cp_EF"><polygon points="1107.0,272.6 1169.0,272.6 1167.0,277.0 1165.3,281.8 1165.3,290.8 1167.0,297.0 1168.5,303.8 1167.0,310.0 1166.6,316.7 1168.0,324.0 1169.1,330.2 1162.7,332.2 1149.9,332.4 1120.0,334.5 1092.0,336.5 1085.1,341.3 1081.0,337.2 1083.5,332.0 1086.5,326.2 1092.0,320.7 1094.5,315.0 1096.8,308.9 1098.5,302.0 1100.7,294.7 1102.0,288.0 1103.3,281.8 1105.0,277.0 1107.0,272.6"/></clipPath><clipPath id="cp_SH"><polygon points="1169.0,272.6 1218.3,272.6 1218.3,346.4 1158.8,345.7 1160.0,342.0 1162.7,337.4 1166.0,334.0 1169.1,330.2 1168.0,324.0 1166.6,316.7 1167.0,310.0 1168.5,303.8 1167.0,297.0 1165.3,290.8 1165.3,281.8 1167.0,277.0 1169.0,272.6"/></clipPath><clipPath id="cp_TA"><polygon points="1218.3,272.6 1258.6,272.6 1259.5,291.5 1262.0,297.0 1264.7,301.8 1266.0,308.0 1268.1,313.9 1270.0,320.8 1273.4,330.0 1276.5,336.0 1276.9,409.1 1285.1,415.0 1289.0,424.0 1292.0,432.9 1279.0,427.5 1265.8,421.9 1257.5,421.2 1245.0,422.5 1234.1,424.6 1235.4,414.2 1231.9,407.4 1228.0,401.0 1225.0,395.3 1221.0,391.0 1217.8,386.7 1218.3,346.4 1218.3,272.6"/></clipPath><clipPath id="cp_WA"><polygon points="1258.6,272.6 1370.4,272.6 1369.9,279.4 1367.0,284.0 1365.6,288.0 1364.0,293.0 1363.0,298.4 1361.0,305.0 1359.6,310.4 1357.0,316.0 1354.4,320.8 1353.0,324.0 1351.0,327.6 1352.5,331.0 1351.8,334.5 1350.5,339.0 1350.1,343.6 1276.5,336.0 1273.4,330.0 1270.0,320.8 1268.1,313.9 1266.0,308.0 1264.7,301.8 1262.0,297.0 1259.5,291.5 1258.6,272.6"/></clipPath><clipPath id="cp_ST"><polygon points="1276.5,336.0 1350.1,343.6 1352.0,349.0 1354.4,353.9 1355.5,360.0 1357.9,366.0 1362.0,372.0 1366.5,378.1 1372.0,383.0 1377.7,386.7 1377.5,393.0 1379.4,400.5 1383.0,406.0 1387.1,410.8 1387.0,419.0 1388.9,428.0 1391.0,434.0 1394.0,438.4 1399.0,440.0 1404.4,441.8 1407.0,446.0 1408.7,450.4 1398.0,452.5 1388.9,453.9 1382.0,451.0 1376.8,448.7 1366.5,447.0 1359.6,450.4 1355.0,446.0 1351.0,443.5 1338.9,442.7 1325.1,447.0 1309.6,450.4 1300.5,449.5 1292.7,444.6 1292.0,432.9 1289.0,424.0 1285.1,415.0 1276.9,409.1 1276.5,336.0"/></clipPath><clipPath id="cp_EBR"><polygon points="1083.7,346.9 1085.1,341.3 1092.0,336.5 1120.0,334.5 1149.9,332.4 1162.7,332.2 1169.1,330.2 1166.0,334.0 1162.7,337.4 1160.0,342.0 1158.8,345.7 1154.0,349.0 1147.2,355.4 1143.0,358.5 1140.7,360.6 1143.3,365.8 1142.4,369.5 1144.1,379.8 1142.5,387.0 1141.5,393.6 1144.0,399.0 1147.5,403.9 1152.0,407.0 1156.1,409.1 1163.9,410.8 1154.0,410.5 1144.1,410.8 1140.0,413.0 1135.1,415.2 1128.6,416.0 1122.0,417.0 1116.5,417.7 1113.1,415.1 1106.0,414.0 1098.4,411.7 1095.0,407.4 1100.1,402.0 1103.6,396.0 1099.0,390.0 1092.0,384.0 1088.0,378.0 1091.0,372.0 1095.4,367.5 1092.0,363.4 1085.1,363.4 1081.0,359.3 1083.0,353.0 1083.7,346.9"/></clipPath><clipPath id="cp_LIV"><polygon points="1158.8,345.7 1218.3,346.4 1217.8,386.7 1221.0,391.0 1225.0,395.3 1228.0,401.0 1231.9,407.4 1235.4,414.2 1234.1,424.6 1230.0,430.2 1226.5,435.0 1223.1,440.5 1214.8,441.2 1207.9,438.4 1204.0,435.8 1200.0,437.0 1197.1,440.0 1196.0,443.0 1194.4,446.9 1190.3,444.1 1186.0,438.0 1182.0,433.1 1176.5,427.6 1172.0,421.0 1168.2,416.0 1163.9,410.8 1156.1,409.1 1152.0,407.0 1147.5,403.9 1144.0,399.0 1141.5,393.6 1142.5,387.0 1144.1,379.8 1142.4,369.5 1143.3,365.8 1140.7,360.6 1143.0,358.5 1147.2,355.4 1154.0,349.0 1158.8,345.7"/></clipPath><clipPath id="cp_ASC"><polygon points="1135.1,415.2 1140.0,413.0 1144.1,410.8 1154.0,410.5 1163.9,410.8 1168.2,416.0 1172.0,421.0 1176.5,427.6 1182.0,433.1 1186.0,438.0 1190.3,444.1 1194.4,446.9 1196.0,443.0 1197.1,440.0 1200.0,437.0 1204.0,435.8 1206.5,438.4 1206.0,444.0 1205.2,449.5 1197.1,451.7 1187.0,453.5 1176.5,455.1 1166.0,457.5 1157.2,459.3 1150.0,467.0 1146.2,473.0 1144.8,470.3 1137.9,467.5 1129.0,468.0 1120.0,468.9 1120.5,462.0 1121.3,455.1 1124.0,448.0 1126.9,441.3 1129.5,435.0 1132.4,427.6 1134.0,421.0 1135.1,415.2"/></clipPath><clipPath id="cp_SJM"><polygon points="1146.2,473.0 1150.0,467.0 1157.2,459.3 1166.0,457.5 1176.5,455.1 1187.0,453.5 1197.1,451.7 1202.7,460.6 1198.5,466.2 1197.5,474.0 1197.1,482.7 1199.9,493.7 1201.3,507.0 1194.0,505.5 1187.5,503.4 1183.0,502.0 1179.2,500.6 1176.5,502.7 1166.0,503.0 1155.1,502.7 1155.1,489.6 1152.0,486.0 1148.9,482.7 1146.2,475.8 1146.2,473.0"/></clipPath><clipPath id="cp_ASM"><polygon points="1093.8,479.9 1097.9,476.5 1105.0,474.5 1113.1,473.0 1120.0,468.9 1129.0,468.0 1137.9,467.5 1144.8,470.3 1146.2,473.0 1146.2,475.8 1148.9,482.7 1152.0,486.0 1155.1,489.6 1155.1,502.7 1159.6,503.4 1159.6,508.6 1155.3,509.5 1154.4,516.3 1147.0,530.0 1138.9,543.9 1132.0,552.5 1125.1,561.1 1120.0,556.0 1120.5,550.0 1121.7,543.9 1121.5,534.0 1120.8,525.0 1117.0,520.0 1113.0,514.6 1107.0,507.0 1101.0,501.0 1097.0,498.0 1093.8,493.7 1091.7,485.4 1093.8,479.9"/></clipPath><clipPath id="cp_SJ"><polygon points="1204.0,435.8 1207.9,438.4 1214.8,441.2 1223.1,440.5 1226.5,435.0 1230.0,430.2 1234.1,424.6 1245.0,422.5 1257.5,421.2 1265.8,421.9 1279.0,427.5 1292.0,432.9 1292.7,444.6 1276.0,451.0 1258.9,457.7 1246.5,466.7 1241.7,473.6 1231.3,477.7 1221.7,481.2 1221.0,486.7 1222.5,491.0 1224.5,494.9 1224.5,507.0 1201.3,507.0 1199.9,493.7 1197.1,482.7 1197.5,474.0 1198.5,466.2 1202.7,460.6 1197.1,451.7 1205.2,449.5 1206.0,444.0 1206.5,438.4 1204.0,435.8"/></clipPath><clipPath id="cp_SC"><polygon points="1276.0,451.0 1271.8,453.2 1271.3,470.0 1269.9,486.7 1271.0,496.0 1272.7,504.6 1278.2,511.5 1285.1,517.0 1289.8,519.8 1288.0,528.0 1285.5,538.7 1287.2,548.2 1269.8,549.1 1257.8,547.4 1255.5,540.0 1252.6,533.6 1243.0,529.5 1235.4,525.0 1234.1,518.4 1230.5,515.0 1226.5,511.5 1224.5,507.0 1224.5,494.9 1222.5,491.0 1221.0,486.7 1221.7,481.2 1231.3,477.7 1241.7,473.6 1246.5,466.7 1258.9,457.7"/></clipPath><clipPath id="cp_JEFu"><polygon points="1276.0,451.0 1292.7,444.6 1300.5,449.5 1299.8,466.0 1298.9,482.5 1302.0,486.0 1310.0,489.0 1321.7,490.0 1318.0,500.0 1309.6,518.1 1308.8,526.7 1310.5,534.0 1313.1,542.2 1317.0,550.0 1321.7,557.7 1305.0,556.0 1287.2,548.2 1285.5,538.7 1288.0,528.0 1289.8,519.8 1285.1,517.0 1278.2,511.5 1272.7,504.6 1271.0,496.0 1269.9,486.7 1271.3,470.0 1271.8,453.2"/></clipPath><clipPath id="cp_JEFl"><polygon points="1287.2,548.2 1305.0,556.0 1321.7,557.7 1323.5,564.0 1325.1,571.5 1324.5,583.0 1325.1,595.6 1328.5,603.0 1332.0,610.0 1334.0,619.0 1336.3,628.9 1338.9,632.4 1338.9,660.8 1326.0,662.8 1314.8,665.1 1309.5,668.5 1305.3,672.9 1305.3,655.6 1309.6,647.9 1318.2,635.8 1320.8,628.9 1314.8,620.3 1316.5,610.0 1314.0,605.0 1311.3,599.0 1302.0,596.0 1294.1,592.1 1290.0,585.0 1286.4,578.4 1289.5,573.5 1292.4,568.0 1291.0,562.0 1291.5,556.0 1287.2,548.2"/></clipPath><clipPath id="cp_ORL"><polygon points="1300.5,449.5 1309.6,450.4 1325.1,447.0 1338.9,442.7 1351.0,443.5 1355.0,446.0 1359.6,450.4 1366.5,447.0 1376.8,448.7 1382.0,451.0 1388.9,453.9 1385.0,458.0 1380.2,462.5 1370.0,471.0 1371.6,478.4 1367.0,475.0 1362.0,472.5 1358.0,474.0 1352.7,475.0 1347.0,481.0 1344.0,486.5 1337.2,486.2 1331.0,488.5 1326.8,485.3 1321.7,487.9 1321.7,490.0 1310.0,489.0 1302.0,486.0 1298.9,482.5 1299.8,466.0 1300.5,449.5"/></clipPath><clipPath id="cp_SB"><polygon points="1408.7,450.4 1416.0,448.5 1425.0,447.0 1433.0,446.0 1442.3,445.2 1455.5,444.4 1462.0,442.0 1469.3,439.2 1477.0,444.0 1485.6,448.7 1507.0,452.0 1529.6,454.7 1531.5,459.0 1533.9,463.3 1541.6,475.0 1545.0,484.0 1546.8,492.2 1547.5,501.0 1546.8,509.5 1545.0,520.0 1541.6,531.8 1538.0,540.0 1533.0,547.4 1528.0,553.5 1522.7,559.4 1508.9,558.5 1495.1,556.8 1468.0,560.0 1442.3,562.9 1428.0,563.7 1415.6,564.6 1411.5,560.5 1407.8,556.8 1401.0,554.5 1394.0,552.5 1387.0,548.5 1380.2,543.9 1377.0,539.0 1373.4,534.4 1367.0,535.0 1361.3,535.3 1359.6,530.1 1352.0,528.5 1345.8,525.8 1342.0,521.0 1338.9,516.3 1336.0,512.0 1333.7,507.7 1326.8,505.1 1324.0,498.0 1321.7,490.0 1321.7,487.9 1326.8,485.3 1331.0,488.5 1337.2,486.2 1344.0,486.5 1347.0,481.0 1352.7,475.0 1358.0,474.0 1362.0,472.5 1367.0,475.0 1371.6,478.4 1370.0,471.0 1380.2,462.5 1385.0,458.0 1388.9,453.9 1398.0,452.5"/></clipPath><clipPath id="cp_PL"><polygon points="1321.7,490.0 1324.0,498.0 1326.8,505.1 1333.7,507.7 1336.0,512.0 1338.9,516.3 1342.0,521.0 1345.8,525.8 1352.0,528.5 1359.6,530.1 1361.3,535.3 1367.0,535.0 1373.4,534.4 1377.0,539.0 1380.2,543.9 1387.0,548.5 1394.0,552.5 1401.0,554.5 1407.8,556.8 1411.5,560.5 1415.6,564.6 1428.0,563.7 1442.3,562.9 1468.0,560.0 1495.1,556.8 1508.9,558.5 1522.7,559.4 1516.0,566.0 1508.9,573.2 1504.0,579.0 1500.3,585.2 1495.0,590.0 1490.0,594.7 1485.0,596.5 1481.3,597.3 1478.0,600.5 1477.0,604.2 1477.0,610.0 1479.0,616.0 1482.2,620.3 1486.5,626.0 1491.7,631.5 1500.0,635.0 1508.9,638.4 1513.5,640.5 1517.5,643.6 1519.5,647.0 1520.1,651.3 1519.0,658.0 1518.4,665.1 1516.0,669.0 1512.4,672.0 1508.0,673.8 1504.6,674.6 1503.0,679.5 1502.0,684.1 1499.0,688.0 1495.1,691.8 1490.5,698.0 1486.5,704.7 1484.0,707.5 1481.3,709.1 1476.5,710.0 1472.7,709.6 1469.0,707.0 1465.8,703.9 1462.0,699.0 1458.9,695.3 1455.5,696.0 1452.1,697.9 1446.0,704.0 1440.0,711.6 1435.4,718.5 1430.5,721.8 1425.0,723.7 1420.5,722.8 1416.4,720.2 1413.5,715.0 1413.0,709.9 1415.5,704.0 1418.1,699.6 1418.1,673.7 1416.5,669.0 1414.7,665.1 1411.5,660.5 1407.8,656.5 1400.0,653.0 1392.3,651.3 1366.5,655.6 1338.9,660.8 1338.9,632.4 1336.3,628.9 1334.0,619.0 1332.0,610.0 1328.5,603.0 1325.1,595.6 1324.5,583.0 1325.1,571.5 1323.5,564.0 1321.7,557.7 1317.0,550.0 1313.1,542.2 1310.5,534.0 1308.8,526.7 1309.6,518.1 1318.0,500.0"/></clipPath><clipPath id="cp_LAF"><polygon points="1155.3,509.5 1159.6,508.6 1159.6,503.4 1155.1,502.7 1166.0,503.0 1176.5,502.7 1179.2,500.6 1183.0,502.0 1187.5,503.4 1194.0,505.5 1201.3,507.0 1224.5,507.0 1226.5,511.5 1230.5,515.0 1234.1,518.4 1235.4,525.0 1243.0,529.5 1252.6,533.6 1255.5,540.0 1257.8,547.4 1269.8,549.1 1287.2,548.2 1291.5,556.0 1291.0,562.0 1292.4,568.0 1289.5,573.5 1286.4,578.4 1290.0,585.0 1294.1,592.1 1302.0,596.0 1311.3,599.0 1314.0,605.0 1316.5,610.0 1314.8,620.3 1320.8,628.9 1318.2,635.8 1309.6,647.9 1305.3,655.6 1305.3,672.9 1295.8,678.9 1282.1,685.8 1270.0,689.2 1258.0,691.8 1245.7,694.4 1245.7,642.7 1249.0,637.0 1251.7,630.7 1252.0,623.0 1250.9,615.2 1243.1,610.0 1233.5,601.0 1225.0,592.1 1221.0,585.0 1216.4,578.4 1209.0,573.0 1202.6,568.0 1196.5,563.0 1190.6,557.7 1185.0,551.0 1180.2,543.9 1176.5,538.5 1173.4,533.6 1168.2,537.0 1160.4,537.9 1159.6,543.9 1138.9,543.9 1154.4,516.3"/></clipPath><clipPath id="cp_TER"><polygon points="1125.1,561.1 1138.9,543.9 1159.6,543.9 1160.4,537.9 1168.2,537.0 1173.4,533.6 1176.5,538.5 1180.2,543.9 1185.0,551.0 1190.6,557.7 1196.5,563.0 1202.6,568.0 1209.0,573.0 1216.4,578.4 1221.0,585.0 1225.0,592.1 1233.5,601.0 1243.1,610.0 1250.9,615.2 1252.0,623.0 1251.7,630.7 1249.0,637.0 1245.7,642.7 1245.7,694.4 1239.5,693.4 1233.7,691.8 1227.0,688.5 1220.7,685.5 1205.0,689.5 1190.6,693.5 1181.0,695.0 1171.6,696.1 1163.5,696.0 1156.1,695.3 1149.0,693.6 1142.4,691.0 1138.0,687.0 1134.6,682.4 1135.4,678.0 1138.0,673.5 1141.5,671.8 1145.7,670.1 1142.3,668.3 1131.0,666.7 1119.9,664.9 1114.0,661.5 1107.8,658.0 1097.0,656.3 1087.1,653.7 1081.0,648.8 1075.1,643.4 1075.4,623.5 1076.0,626.5 1077.7,628.7 1081.5,628.9 1085.4,627.9 1087.0,624.5 1088.9,621.0 1093.0,617.0 1097.5,612.4 1098.8,609.0 1100.1,605.5 1096.5,603.0 1093.2,600.3 1090.5,596.0 1088.9,591.7 1088.5,586.5 1089.7,581.3 1096.6,574.5 1106.1,568.4 1107.8,565.8 1116.0,563.5 1125.1,561.1"/></clipPath></defs>
<polygon clip-path="url(#cp_ST)" points="1277.8,407.8 1283.0,402.6 1296.1,403.9 1303.0,408.0 1309.1,413.0 1316.0,416.0 1322.2,418.3 1327.4,424.8 1334.0,428.5 1340.4,431.3 1348.3,431.3 1353.5,437.8 1361.3,444.3 1372.0,448.5 1382.0,452.0 1376.0,455.0 1362.0,458.0 1349.9,461.9 1341.6,467.4 1327.8,472.9 1314.0,477.0 1300.0,481.0 1285.0,483.0 1271.0,481.0 1262.0,476.0 1254.0,470.0 1246.0,466.0 1239.0,461.0 1240.0,450.0 1242.0,442.6 1245.0,435.0 1248.0,428.8 1256.0,421.5 1266.0,422.0 1270.0,415.0" fill="#cde8f0" fill-opacity="1"/>
<polygon clip-path="url(#cp_TA)" points="1277.8,407.8 1283.0,402.6 1296.1,403.9 1303.0,408.0 1309.1,413.0 1316.0,416.0 1322.2,418.3 1327.4,424.8 1334.0,428.5 1340.4,431.3 1348.3,431.3 1353.5,437.8 1361.3,444.3 1372.0,448.5 1382.0,452.0 1376.0,455.0 1362.0,458.0 1349.9,461.9 1341.6,467.4 1327.8,472.9 1314.0,477.0 1300.0,481.0 1285.0,483.0 1271.0,481.0 1262.0,476.0 1254.0,470.0 1246.0,466.0 1239.0,461.0 1240.0,450.0 1242.0,442.6 1245.0,435.0 1248.0,428.8 1256.0,421.5 1266.0,422.0 1270.0,415.0" fill="#bfe3f6" fill-opacity="1"/>
<polygon clip-path="url(#cp_SJ)" points="1277.8,407.8 1283.0,402.6 1296.1,403.9 1303.0,408.0 1309.1,413.0 1316.0,416.0 1322.2,418.3 1327.4,424.8 1334.0,428.5 1340.4,431.3 1348.3,431.3 1353.5,437.8 1361.3,444.3 1372.0,448.5 1382.0,452.0 1376.0,455.0 1362.0,458.0 1349.9,461.9 1341.6,467.4 1327.8,472.9 1314.0,477.0 1300.0,481.0 1285.0,483.0 1271.0,481.0 1262.0,476.0 1254.0,470.0 1246.0,466.0 1239.0,461.0 1240.0,450.0 1242.0,442.6 1245.0,435.0 1248.0,428.8 1256.0,421.5 1266.0,422.0 1270.0,415.0" fill="#c4c0cf" fill-opacity="1"/>
<polygon clip-path="url(#cp_SC)" points="1277.8,407.8 1283.0,402.6 1296.1,403.9 1303.0,408.0 1309.1,413.0 1316.0,416.0 1322.2,418.3 1327.4,424.8 1334.0,428.5 1340.4,431.3 1348.3,431.3 1353.5,437.8 1361.3,444.3 1372.0,448.5 1382.0,452.0 1376.0,455.0 1362.0,458.0 1349.9,461.9 1341.6,467.4 1327.8,472.9 1314.0,477.0 1300.0,481.0 1285.0,483.0 1271.0,481.0 1262.0,476.0 1254.0,470.0 1246.0,466.0 1239.0,461.0 1240.0,450.0 1242.0,442.6 1245.0,435.0 1248.0,428.8 1256.0,421.5 1266.0,422.0 1270.0,415.0" fill="#b9dadb" fill-opacity="1"/>
<polygon clip-path="url(#cp_ORL)" points="1277.8,407.8 1283.0,402.6 1296.1,403.9 1303.0,408.0 1309.1,413.0 1316.0,416.0 1322.2,418.3 1327.4,424.8 1334.0,428.5 1340.4,431.3 1348.3,431.3 1353.5,437.8 1361.3,444.3 1372.0,448.5 1382.0,452.0 1376.0,455.0 1362.0,458.0 1349.9,461.9 1341.6,467.4 1327.8,472.9 1314.0,477.0 1300.0,481.0 1285.0,483.0 1271.0,481.0 1262.0,476.0 1254.0,470.0 1246.0,466.0 1239.0,461.0 1240.0,450.0 1242.0,442.6 1245.0,435.0 1248.0,428.8 1256.0,421.5 1266.0,422.0 1270.0,415.0" fill="#adc3e6" fill-opacity="1"/>
<polygon clip-path="url(#cp_JEFu)" points="1277.8,407.8 1283.0,402.6 1296.1,403.9 1303.0,408.0 1309.1,413.0 1316.0,416.0 1322.2,418.3 1327.4,424.8 1334.0,428.5 1340.4,431.3 1348.3,431.3 1353.5,437.8 1361.3,444.3 1372.0,448.5 1382.0,452.0 1376.0,455.0 1362.0,458.0 1349.9,461.9 1341.6,467.4 1327.8,472.9 1314.0,477.0 1300.0,481.0 1285.0,483.0 1271.0,481.0 1262.0,476.0 1254.0,470.0 1246.0,466.0 1239.0,461.0 1240.0,450.0 1242.0,442.6 1245.0,435.0 1248.0,428.8 1256.0,421.5 1266.0,422.0 1270.0,415.0" fill="#b9e1f6" fill-opacity="1"/>
<polygon clip-path="url(#cp_SJ)" points="1195.0,436.0 1232.0,436.0 1240.0,446.0 1239.0,461.0 1246.0,466.0 1236.0,480.0 1226.0,508.0 1198.0,508.0 1194.0,470.0" fill="#dcc0b3" fill-opacity="1"/>
<polygon clip-path="url(#cp_SJ)" points="1203.0,488.0 1222.0,486.0 1224.0,507.0 1203.0,507.0" fill="#c4b9c6" fill-opacity="1"/>
<polygon clip-path="url(#cp_LIV)" points="1233.0,408.0 1240.0,405.0 1248.0,407.0 1252.0,414.0 1250.0,422.0 1243.0,425.5 1235.0,425.0 1231.0,417.0" fill="#c4e0e6" fill-opacity="1"/>
<polygon clip-path="url(#cp_TA)" points="1233.0,408.0 1240.0,405.0 1248.0,407.0 1252.0,414.0 1250.0,422.0 1243.0,425.5 1235.0,425.0 1231.0,417.0" fill="#b4dcf3" fill-opacity="1"/>
<polygon clip-path="url(#cp_SJ)" points="1233.0,408.0 1240.0,405.0 1248.0,407.0 1252.0,414.0 1250.0,422.0 1243.0,425.5 1235.0,425.0 1231.0,417.0" fill="#b9d3e6" fill-opacity="1"/>
<polygon clip-path="url(#cp_LIV)" points="1215.0,400.0 1232.0,398.0 1238.0,410.0 1232.0,428.0 1222.0,442.0 1205.0,438.0 1200.0,425.0" fill="#d4ddc9" fill-opacity="0.8"/>
<polygon clip-path="url(#cp_TA)" points="1236.0,395.0 1277.0,395.0 1292.0,433.0 1236.0,426.0" fill="#c0e0ee" fill-opacity="0.7"/>
<polygon clip-path="url(#cp_ST)" points="1350.0,344.0 1360.0,356.0 1370.0,376.0 1380.0,392.0 1388.0,412.0 1390.0,436.0 1380.0,440.0 1376.0,410.0 1366.0,390.0 1356.0,372.0 1348.0,350.0" fill="#d3e0c6" fill-opacity="1"/>
<polygon clip-path="url(#cp_ST)" points="1352.0,440.0 1380.0,436.0 1408.0,450.0 1388.0,454.0 1366.0,447.0 1358.0,450.0" fill="#d6eaec" fill-opacity="1"/>
<polygon clip-path="url(#cp_ORL)" points="1300.0,481.0 1314.0,477.0 1327.8,472.9 1341.6,467.4 1349.9,461.9 1362.0,458.0 1376.0,455.0 1390.0,453.0 1372.0,480.0 1320.0,492.0 1298.0,484.0" fill="#c6cbe4" fill-opacity="1"/>
<polygon clip-path="url(#cp_ORL)" points="1340.0,470.0 1365.0,458.0 1385.0,455.0 1372.0,478.0 1350.0,478.0" fill="#cfd0e6" fill-opacity="1"/>
<polygon clip-path="url(#cp_JEFu)" points="1268.0,484.0 1300.0,482.0 1322.0,490.0 1312.0,520.0 1322.0,556.0 1290.0,552.0 1288.0,520.0 1272.0,505.0" fill="#cfe6ec" fill-opacity="1"/>
<polygon clip-path="url(#cp_JEFu)" points="1292.0,520.0 1310.0,520.0 1318.0,552.0 1298.0,552.0" fill="#bfe0f1" fill-opacity="1"/>
<polygon clip-path="url(#cp_JEFl)" points="1287.0,548.0 1322.0,556.0 1326.0,600.0 1312.0,600.0 1292.0,590.0" fill="#c6e4ef" fill-opacity="1"/>
<polygon clip-path="url(#cp_SC)" points="1224.0,480.0 1248.0,470.0 1270.0,486.0 1273.0,505.0 1289.0,520.0 1286.0,548.0 1256.0,548.0 1252.0,533.0 1234.0,520.0 1224.0,507.0" fill="#cddbd0" fill-opacity="1"/>
<polygon clip-path="url(#cp_SC)" points="1262.0,500.0 1284.0,516.0 1286.0,546.0 1262.0,546.0 1256.0,530.0" fill="#c0dfe3" fill-opacity="1"/>
<polygon clip-path="url(#cp_LAF)" points="1244.0,640.0 1262.0,632.0 1280.0,640.0 1300.0,650.0 1310.0,660.0 1306.0,675.0 1245.0,696.0" fill="#c4e0ec" fill-opacity="1"/>
<polygon clip-path="url(#cp_LAF)" points="1262.0,560.0 1290.0,556.0 1292.0,590.0 1312.0,600.0 1318.0,632.0 1300.0,650.0 1280.0,640.0 1268.0,610.0 1258.0,585.0" fill="#cbe3ea" fill-opacity="1"/>
<polygon clip-path="url(#cp_LAF)" points="1160.0,505.0 1224.0,507.0 1236.0,525.0 1256.0,535.0 1258.0,548.0 1262.0,560.0 1258.0,585.0 1240.0,580.0 1220.0,560.0 1190.0,540.0 1162.0,535.0" fill="#dbe5dc" fill-opacity="1"/>
<polygon clip-path="url(#cp_TER)" points="1073.0,628.0 1090.0,618.0 1104.0,612.0 1122.0,626.0 1140.0,640.0 1162.0,636.0 1188.0,630.0 1212.0,640.0 1247.0,648.0 1247.0,700.0 1070.0,700.0" fill="#c3e0ec" fill-opacity="1"/>
<polygon clip-path="url(#cp_TER)" points="1100.0,600.0 1130.0,590.0 1160.0,598.0 1190.0,600.0 1215.0,612.0 1240.0,620.0 1247.0,648.0 1212.0,640.0 1188.0,630.0 1162.0,636.0 1140.0,640.0 1122.0,626.0 1104.0,612.0" fill="#cde2e6" fill-opacity="1"/>
<polygon clip-path="url(#cp_TER)" points="1096.0,574.0 1125.0,561.0 1139.0,544.0 1180.0,544.0 1215.0,578.0 1240.0,610.0 1215.0,612.0 1190.0,600.0 1160.0,598.0 1130.0,590.0 1100.0,600.0 1089.0,590.0" fill="#d9e3dc" fill-opacity="1"/>
<ellipse clip-path="url(#cp_TER)" cx="1150" cy="628" rx="9" ry="4" fill="#d7e4e2" fill-opacity="0.8"/>
<ellipse clip-path="url(#cp_TER)" cx="1175" cy="645" rx="12" ry="4" fill="#d7e4e2" fill-opacity="0.8"/>
<ellipse clip-path="url(#cp_TER)" cx="1205" cy="626" rx="8" ry="3" fill="#d7e4e2" fill-opacity="0.8"/>
<ellipse clip-path="url(#cp_TER)" cx="1120" cy="640" rx="8" ry="3" fill="#d7e4e2" fill-opacity="0.8"/>
<ellipse clip-path="url(#cp_TER)" cx="1228" cy="660" rx="9" ry="4" fill="#d7e4e2" fill-opacity="0.8"/>
<ellipse clip-path="url(#cp_TER)" cx="1190" cy="668" rx="14" ry="4" fill="#d7e4e2" fill-opacity="0.8"/>
<ellipse clip-path="url(#cp_TER)" cx="1140" cy="606" rx="7" ry="3" fill="#bcdcec" fill-opacity="0.8"/>
<ellipse clip-path="url(#cp_TER)" cx="1172" cy="612" rx="9" ry="3.5" fill="#bcdcec" fill-opacity="0.8"/>
<ellipse clip-path="url(#cp_TER)" cx="1205" cy="604" rx="6" ry="3" fill="#bcdcec" fill-opacity="0.8"/>
<ellipse clip-path="url(#cp_TER)" cx="1118" cy="598" rx="5" ry="2.5" fill="#bcdcec" fill-opacity="0.8"/>
<ellipse clip-path="url(#cp_TER)" cx="1230" cy="628" rx="5" ry="3" fill="#bcdcec" fill-opacity="0.8"/>
<polygon clip-path="url(#cp_ASM)" points="1098.0,500.0 1112.0,498.0 1122.0,506.0 1124.0,518.0 1114.0,520.0 1104.0,512.0" fill="#d6d3d6" fill-opacity="1"/>
<polygon clip-path="url(#cp_PL)" points="1310.0,500.0 1330.0,508.0 1346.0,526.0 1362.0,536.0 1380.0,544.0 1408.0,557.0 1416.0,565.0 1400.0,590.0 1380.0,600.0 1404.0,620.0 1396.0,640.0 1360.0,640.0 1340.0,620.0 1326.0,580.0 1316.0,545.0 1308.0,520.0" fill="#e0d0e6" fill-opacity="1"/>
<polygon clip-path="url(#cp_PL)" points="1390.0,590.0 1420.0,585.0 1450.0,600.0 1476.0,612.0 1490.0,632.0 1516.0,645.0 1516.0,668.0 1500.0,676.0 1496.0,690.0 1482.0,708.0 1466.0,700.0 1458.0,694.0 1440.0,710.0 1425.0,722.0 1420.0,700.0 1436.0,680.0 1440.0,650.0 1420.0,630.0 1400.0,615.0" fill="#e0d0e6" fill-opacity="0.55"/>
<polygon clip-path="url(#cp_PL)" points="1425.0,640.0 1470.0,625.0 1500.0,650.0 1490.0,680.0 1455.0,690.0 1435.0,670.0" fill="#e6d0e0" fill-opacity="0.6"/>
<polygon clip-path="url(#cp_PL)" points="1330.0,560.0 1350.0,560.0 1370.0,585.0 1392.0,610.0 1380.0,625.0 1350.0,610.0 1335.0,585.0" fill="#dccfe6" fill-opacity="0.8"/>
<polygon clip-path="url(#cp_SB)" points="1322.0,490.0 1345.0,487.0 1372.0,478.0 1392.0,470.0 1415.0,466.0 1430.0,470.0 1445.0,480.0 1450.0,498.0 1440.0,515.0 1448.0,528.0 1436.0,540.0 1420.0,550.0 1400.0,553.0 1380.0,542.0 1362.0,532.0 1346.0,524.0 1334.0,506.0" fill="#a4adb0" fill-opacity="0.85"/>
<polygon clip-path="url(#cp_SB)" points="1340.0,492.0 1370.0,488.0 1400.0,490.0 1420.0,500.0 1410.0,515.0 1380.0,520.0 1356.0,512.0" fill="#a9aeae" fill-opacity="0.9"/>
<polygon clip-path="url(#cp_SB)" points="1405.0,470.0 1425.0,462.0 1440.0,470.0 1430.0,485.0 1412.0,482.0" fill="#a8b0b2" fill-opacity="0.8"/>
<polygon clip-path="url(#cp_SB)" points="1440.0,500.0 1462.0,492.0 1475.0,505.0 1462.0,520.0 1446.0,518.0" fill="#a3b0b6" fill-opacity="0.7"/>
<polygon clip-path="url(#cp_WA)" points="1290.0,285.0 1330.0,280.0 1350.0,300.0 1330.0,325.0 1300.0,320.0" fill="#dddabf" fill-opacity="0.7"/>
<polygon clip-path="url(#cp_EBR)" points="1090.0,350.0 1120.0,345.0 1135.0,370.0 1120.0,400.0 1100.0,395.0" fill="#eef0d0" fill-opacity="0.6"/>
<line clip-path="url(#cp_PL)" x1="1464.2" y1="653.1" x2="1445.7" y2="635.0" stroke="#ecd0dc" stroke-width="2.5" stroke-opacity="0.8" stroke-linecap="round"/>
<line clip-path="url(#cp_PL)" x1="1471.5" y1="662.5" x2="1499.9" y2="667.8" stroke="#ecd0dc" stroke-width="1.4" stroke-opacity="0.8" stroke-linecap="round"/>
<line clip-path="url(#cp_PL)" x1="1459.5" y1="648.1" x2="1439.1" y2="652.2" stroke="#ecd0dc" stroke-width="1.5" stroke-opacity="0.8" stroke-linecap="round"/>
<line clip-path="url(#cp_PL)" x1="1455.8" y1="669.0" x2="1451.2" y2="693.9" stroke="#ecd0dc" stroke-width="1.4" stroke-opacity="0.8" stroke-linecap="round"/>
<line clip-path="url(#cp_PL)" x1="1466.1" y1="647.7" x2="1458.6" y2="641.0" stroke="#ecd0dc" stroke-width="1.5" stroke-opacity="0.8" stroke-linecap="round"/>
<line clip-path="url(#cp_PL)" x1="1479.4" y1="654.6" x2="1495.1" y2="652.9" stroke="#ecd0dc" stroke-width="2.1" stroke-opacity="0.8" stroke-linecap="round"/>
<line clip-path="url(#cp_PL)" x1="1473.2" y1="670.5" x2="1479.8" y2="693.4" stroke="#ecd0dc" stroke-width="1.6" stroke-opacity="0.8" stroke-linecap="round"/>
<line clip-path="url(#cp_PL)" x1="1453.4" y1="655.0" x2="1445.1" y2="664.9" stroke="#ecd0dc" stroke-width="2.0" stroke-opacity="0.8" stroke-linecap="round"/>
<line clip-path="url(#cp_PL)" x1="1467.7" y1="660.3" x2="1484.5" y2="660.6" stroke="#ecd0dc" stroke-width="1.9" stroke-opacity="0.8" stroke-linecap="round"/>
<line clip-path="url(#cp_PL)" x1="1453.4" y1="668.4" x2="1443.7" y2="690.5" stroke="#ecd0dc" stroke-width="1.2" stroke-opacity="0.8" stroke-linecap="round"/>
<line clip-path="url(#cp_PL)" x1="1467.6" y1="643.9" x2="1467.6" y2="633.6" stroke="#ecd0dc" stroke-width="2.0" stroke-opacity="0.8" stroke-linecap="round"/>
<line clip-path="url(#cp_PL)" x1="1473.6" y1="650.3" x2="1487.2" y2="651.1" stroke="#ecd0dc" stroke-width="2.3" stroke-opacity="0.8" stroke-linecap="round"/>
<line clip-path="url(#cp_PL)" x1="1469.3" y1="651.3" x2="1484.6" y2="644.1" stroke="#ecd0dc" stroke-width="2.3" stroke-opacity="0.8" stroke-linecap="round"/>
<line clip-path="url(#cp_PL)" x1="1475.2" y1="652.8" x2="1495.4" y2="669.1" stroke="#ecd0dc" stroke-width="2.5" stroke-opacity="0.8" stroke-linecap="round"/>
<line clip-path="url(#cp_PL)" x1="1474.2" y1="655.4" x2="1492.9" y2="667.4" stroke="#ecd0dc" stroke-width="2.5" stroke-opacity="0.8" stroke-linecap="round"/>
<line clip-path="url(#cp_PL)" x1="1452.9" y1="646.8" x2="1437.2" y2="642.2" stroke="#ecd0dc" stroke-width="1.4" stroke-opacity="0.8" stroke-linecap="round"/>
<line clip-path="url(#cp_PL)" x1="1452.1" y1="653.5" x2="1447.1" y2="641.3" stroke="#ecd0dc" stroke-width="1.9" stroke-opacity="0.8" stroke-linecap="round"/>
<line clip-path="url(#cp_PL)" x1="1464.4" y1="656.9" x2="1446.2" y2="669.1" stroke="#ecd0dc" stroke-width="1.8" stroke-opacity="0.8" stroke-linecap="round"/>
<line clip-path="url(#cp_PL)" x1="1471.7" y1="663.6" x2="1481.7" y2="667.3" stroke="#ecd0dc" stroke-width="1.4" stroke-opacity="0.8" stroke-linecap="round"/>
<line clip-path="url(#cp_PL)" x1="1466.5" y1="639.1" x2="1463.9" y2="616.7" stroke="#ecd0dc" stroke-width="1.8" stroke-opacity="0.8" stroke-linecap="round"/>
<line clip-path="url(#cp_PL)" x1="1467.5" y1="670.2" x2="1476.9" y2="683.0" stroke="#ecd0dc" stroke-width="2.4" stroke-opacity="0.8" stroke-linecap="round"/>
<line clip-path="url(#cp_PL)" x1="1472.8" y1="653.7" x2="1492.3" y2="650.8" stroke="#ecd0dc" stroke-width="1.6" stroke-opacity="0.8" stroke-linecap="round"/>
<line clip-path="url(#cp_PL)" x1="1467.5" y1="664.6" x2="1453.1" y2="674.6" stroke="#ecd0dc" stroke-width="2.1" stroke-opacity="0.8" stroke-linecap="round"/>
<line clip-path="url(#cp_PL)" x1="1454.0" y1="659.5" x2="1442.2" y2="659.6" stroke="#ecd0dc" stroke-width="2.4" stroke-opacity="0.8" stroke-linecap="round"/>
<line clip-path="url(#cp_PL)" x1="1460.6" y1="664.1" x2="1444.2" y2="683.6" stroke="#ecd0dc" stroke-width="2.3" stroke-opacity="0.8" stroke-linecap="round"/>
<line clip-path="url(#cp_PL)" x1="1457.6" y1="665.3" x2="1447.4" y2="677.1" stroke="#ecd0dc" stroke-width="2.2" stroke-opacity="0.8" stroke-linecap="round"/>
<ellipse clip-path="url(#cp_PL)" cx="1340.0" cy="604.3" rx="4.6" ry="2.2" fill="#ecd6e4" fill-opacity="0.7" transform="rotate(-59 1340.0 604.3)"/>
<ellipse clip-path="url(#cp_PL)" cx="1361.5" cy="531.3" rx="4.7" ry="1.9" fill="#ecd6e4" fill-opacity="0.7" transform="rotate(38 1361.5 531.3)"/>
<ellipse clip-path="url(#cp_PL)" cx="1370.0" cy="588.8" rx="3.4" ry="2.3" fill="#ecd6e4" fill-opacity="0.7" transform="rotate(29 1370.0 588.8)"/>
<ellipse clip-path="url(#cp_PL)" cx="1385.4" cy="541.8" rx="5.4" ry="2.7" fill="#ecd6e4" fill-opacity="0.7" transform="rotate(23 1385.4 541.8)"/>
<ellipse clip-path="url(#cp_PL)" cx="1398.0" cy="605.4" rx="4.1" ry="2.1" fill="#ecd6e4" fill-opacity="0.7" transform="rotate(-40 1398.0 605.4)"/>
<ellipse clip-path="url(#cp_PL)" cx="1386.1" cy="603.4" rx="3.9" ry="2.4" fill="#ecd6e4" fill-opacity="0.7" transform="rotate(26 1386.1 603.4)"/>
<ellipse clip-path="url(#cp_PL)" cx="1377.1" cy="523.0" rx="5.1" ry="2.2" fill="#ecd6e4" fill-opacity="0.7" transform="rotate(20 1377.1 523.0)"/>
<ellipse clip-path="url(#cp_PL)" cx="1350.8" cy="570.5" rx="5.1" ry="2.3" fill="#ecd6e4" fill-opacity="0.7" transform="rotate(26 1350.8 570.5)"/>
<ellipse clip-path="url(#cp_PL)" cx="1317.3" cy="521.8" rx="3.8" ry="2.3" fill="#ecd6e4" fill-opacity="0.7" transform="rotate(-34 1317.3 521.8)"/>
<ellipse clip-path="url(#cp_PL)" cx="1373.3" cy="571.2" rx="2.2" ry="1.9" fill="#ecd6e4" fill-opacity="0.7" transform="rotate(-33 1373.3 571.2)"/>
<ellipse clip-path="url(#cp_PL)" cx="1319.6" cy="519.0" rx="3.3" ry="1.4" fill="#ecd6e4" fill-opacity="0.7" transform="rotate(-37 1319.6 519.0)"/>
<ellipse clip-path="url(#cp_PL)" cx="1318.0" cy="553.9" rx="3.5" ry="2.2" fill="#ecd6e4" fill-opacity="0.7" transform="rotate(11 1318.0 553.9)"/>
<ellipse clip-path="url(#cp_PL)" cx="1335.2" cy="599.8" rx="2.0" ry="1.8" fill="#ecd6e4" fill-opacity="0.7" transform="rotate(-27 1335.2 599.8)"/>
<ellipse clip-path="url(#cp_PL)" cx="1349.9" cy="517.1" rx="5.3" ry="1.7" fill="#ecd6e4" fill-opacity="0.7" transform="rotate(-56 1349.9 517.1)"/>
<ellipse clip-path="url(#cp_PL)" cx="1367.2" cy="515.0" rx="4.2" ry="1.7" fill="#ecd6e4" fill-opacity="0.7" transform="rotate(10 1367.2 515.0)"/>
<ellipse clip-path="url(#cp_PL)" cx="1396.5" cy="590.9" rx="3.7" ry="2.6" fill="#ecd6e4" fill-opacity="0.7" transform="rotate(17 1396.5 590.9)"/>
<ellipse clip-path="url(#cp_PL)" cx="1346.4" cy="519.9" rx="4.4" ry="2.1" fill="#ecd6e4" fill-opacity="0.7" transform="rotate(55 1346.4 519.9)"/>
<ellipse clip-path="url(#cp_PL)" cx="1397.3" cy="568.9" rx="3.4" ry="2.8" fill="#ecd6e4" fill-opacity="0.7" transform="rotate(-60 1397.3 568.9)"/>
<ellipse clip-path="url(#cp_PL)" cx="1324.2" cy="564.4" rx="4.5" ry="1.3" fill="#ecd6e4" fill-opacity="0.7" transform="rotate(16 1324.2 564.4)"/>
<ellipse clip-path="url(#cp_PL)" cx="1390.8" cy="544.5" rx="3.7" ry="1.5" fill="#ecd6e4" fill-opacity="0.7" transform="rotate(-25 1390.8 544.5)"/>
<ellipse clip-path="url(#cp_PL)" cx="1397.7" cy="544.9" rx="5.8" ry="2.8" fill="#ecd6e4" fill-opacity="0.7" transform="rotate(11 1397.7 544.9)"/>
<ellipse clip-path="url(#cp_PL)" cx="1337.1" cy="608.0" rx="4.0" ry="1.8" fill="#ecd6e4" fill-opacity="0.7" transform="rotate(-22 1337.1 608.0)"/>
<ellipse clip-path="url(#cp_PL)" cx="1398.7" cy="556.6" rx="3.1" ry="2.0" fill="#ecd6e4" fill-opacity="0.7" transform="rotate(-45 1398.7 556.6)"/>
<ellipse clip-path="url(#cp_PL)" cx="1367.8" cy="551.6" rx="3.2" ry="2.6" fill="#ecd6e4" fill-opacity="0.7" transform="rotate(39 1367.8 551.6)"/>
<ellipse clip-path="url(#cp_PL)" cx="1316.1" cy="560.9" rx="3.1" ry="2.9" fill="#ecd6e4" fill-opacity="0.7" transform="rotate(34 1316.1 560.9)"/>
<ellipse clip-path="url(#cp_PL)" cx="1335.9" cy="533.1" rx="2.6" ry="3.0" fill="#ecd6e4" fill-opacity="0.7" transform="rotate(-25 1335.9 533.1)"/>
<ellipse clip-path="url(#cp_PL)" cx="1366.7" cy="554.8" rx="4.6" ry="2.2" fill="#ecd6e4" fill-opacity="0.7" transform="rotate(29 1366.7 554.8)"/>
<ellipse clip-path="url(#cp_PL)" cx="1325.0" cy="584.8" rx="3.2" ry="2.1" fill="#ecd6e4" fill-opacity="0.7" transform="rotate(-20 1325.0 584.8)"/>
<ellipse clip-path="url(#cp_PL)" cx="1340.2" cy="560.6" rx="3.9" ry="1.7" fill="#ecd6e4" fill-opacity="0.7" transform="rotate(29 1340.2 560.6)"/>
<ellipse clip-path="url(#cp_PL)" cx="1365.2" cy="508.8" rx="3.0" ry="1.9" fill="#ecd6e4" fill-opacity="0.7" transform="rotate(50 1365.2 508.8)"/>
<ellipse clip-path="url(#cp_PL)" cx="1390.5" cy="562.3" rx="2.1" ry="2.6" fill="#ecd6e4" fill-opacity="0.7" transform="rotate(-9 1390.5 562.3)"/>
<ellipse clip-path="url(#cp_PL)" cx="1363.9" cy="579.4" rx="4.5" ry="2.0" fill="#ecd6e4" fill-opacity="0.7" transform="rotate(49 1363.9 579.4)"/>
<ellipse clip-path="url(#cp_PL)" cx="1347.8" cy="546.1" rx="5.4" ry="1.4" fill="#ecd6e4" fill-opacity="0.7" transform="rotate(-24 1347.8 546.1)"/>
<ellipse clip-path="url(#cp_PL)" cx="1385.6" cy="511.9" rx="5.3" ry="2.4" fill="#ecd6e4" fill-opacity="0.7" transform="rotate(-8 1385.6 511.9)"/>
<ellipse clip-path="url(#cp_PL)" cx="1339.3" cy="587.0" rx="5.6" ry="1.3" fill="#ecd6e4" fill-opacity="0.7" transform="rotate(-3 1339.3 587.0)"/>
<ellipse clip-path="url(#cp_PL)" cx="1361.7" cy="557.3" rx="3.3" ry="1.3" fill="#ecd6e4" fill-opacity="0.7" transform="rotate(10 1361.7 557.3)"/>
<ellipse clip-path="url(#cp_PL)" cx="1384.0" cy="512.2" rx="2.9" ry="2.6" fill="#ecd6e4" fill-opacity="0.7" transform="rotate(35 1384.0 512.2)"/>
<ellipse clip-path="url(#cp_PL)" cx="1371.4" cy="507.7" rx="4.9" ry="3.0" fill="#ecd6e4" fill-opacity="0.7" transform="rotate(60 1371.4 507.7)"/>
<ellipse clip-path="url(#cp_PL)" cx="1374.6" cy="510.1" rx="5.4" ry="1.4" fill="#ecd6e4" fill-opacity="0.7" transform="rotate(17 1374.6 510.1)"/>
<ellipse clip-path="url(#cp_PL)" cx="1395.9" cy="579.8" rx="2.5" ry="1.6" fill="#ecd6e4" fill-opacity="0.7" transform="rotate(50 1395.9 579.8)"/>
<ellipse clip-path="url(#cp_SB)" cx="1351.0" cy="522.7" rx="4.1" ry="1.3" fill="#aeb2b0" fill-opacity="0.6" transform="rotate(15 1351.0 522.7)"/>
<ellipse clip-path="url(#cp_SB)" cx="1336.1" cy="487.6" rx="3.9" ry="1.1" fill="#aeb2b0" fill-opacity="0.6" transform="rotate(-53 1336.1 487.6)"/>
<ellipse clip-path="url(#cp_SB)" cx="1410.5" cy="532.0" rx="6.4" ry="1.3" fill="#aeb2b0" fill-opacity="0.6" transform="rotate(-8 1410.5 532.0)"/>
<ellipse clip-path="url(#cp_SB)" cx="1374.0" cy="522.0" rx="4.4" ry="2.9" fill="#aeb2b0" fill-opacity="0.6" transform="rotate(-15 1374.0 522.0)"/>
<ellipse clip-path="url(#cp_SB)" cx="1337.8" cy="528.8" rx="2.8" ry="2.3" fill="#aeb2b0" fill-opacity="0.6" transform="rotate(1 1337.8 528.8)"/>
<ellipse clip-path="url(#cp_SB)" cx="1457.5" cy="518.8" rx="5.1" ry="1.5" fill="#aeb2b0" fill-opacity="0.6" transform="rotate(6 1457.5 518.8)"/>
<ellipse clip-path="url(#cp_SB)" cx="1365.6" cy="532.5" rx="4.6" ry="1.3" fill="#aeb2b0" fill-opacity="0.6" transform="rotate(-32 1365.6 532.5)"/>
<ellipse clip-path="url(#cp_SB)" cx="1382.0" cy="531.6" rx="2.9" ry="2.4" fill="#aeb2b0" fill-opacity="0.6" transform="rotate(19 1382.0 531.6)"/>
<ellipse clip-path="url(#cp_SB)" cx="1341.9" cy="526.8" rx="2.5" ry="1.2" fill="#aeb2b0" fill-opacity="0.6" transform="rotate(11 1341.9 526.8)"/>
<ellipse clip-path="url(#cp_SB)" cx="1363.4" cy="541.4" rx="4.4" ry="1.6" fill="#aeb2b0" fill-opacity="0.6" transform="rotate(36 1363.4 541.4)"/>
<ellipse clip-path="url(#cp_SB)" cx="1334.1" cy="530.8" rx="2.3" ry="1.3" fill="#aeb2b0" fill-opacity="0.6" transform="rotate(54 1334.1 530.8)"/>
<ellipse clip-path="url(#cp_SB)" cx="1425.4" cy="495.6" rx="2.6" ry="2.9" fill="#aeb2b0" fill-opacity="0.6" transform="rotate(20 1425.4 495.6)"/>
<ellipse clip-path="url(#cp_SB)" cx="1444.9" cy="489.8" rx="5.1" ry="1.7" fill="#aeb2b0" fill-opacity="0.6" transform="rotate(-32 1444.9 489.8)"/>
<ellipse clip-path="url(#cp_SB)" cx="1376.7" cy="523.0" rx="3.7" ry="1.8" fill="#aeb2b0" fill-opacity="0.6" transform="rotate(-44 1376.7 523.0)"/>
<ellipse clip-path="url(#cp_SB)" cx="1446.4" cy="525.4" rx="6.0" ry="1.9" fill="#aeb2b0" fill-opacity="0.6" transform="rotate(42 1446.4 525.4)"/>
<ellipse clip-path="url(#cp_SB)" cx="1402.4" cy="521.5" rx="4.9" ry="2.5" fill="#aeb2b0" fill-opacity="0.6" transform="rotate(-13 1402.4 521.5)"/>
<ellipse clip-path="url(#cp_SB)" cx="1343.6" cy="482.3" rx="3.0" ry="1.1" fill="#aeb2b0" fill-opacity="0.6" transform="rotate(47 1343.6 482.3)"/>
<ellipse clip-path="url(#cp_SB)" cx="1397.3" cy="533.2" rx="2.0" ry="1.9" fill="#aeb2b0" fill-opacity="0.6" transform="rotate(47 1397.3 533.2)"/>
<ellipse clip-path="url(#cp_SB)" cx="1416.7" cy="510.0" rx="4.3" ry="1.2" fill="#aeb2b0" fill-opacity="0.6" transform="rotate(-41 1416.7 510.0)"/>
<ellipse clip-path="url(#cp_SB)" cx="1352.3" cy="506.2" rx="3.9" ry="2.8" fill="#aeb2b0" fill-opacity="0.6" transform="rotate(-42 1352.3 506.2)"/>
<ellipse clip-path="url(#cp_SB)" cx="1365.6" cy="499.4" rx="2.8" ry="1.6" fill="#aeb2b0" fill-opacity="0.6" transform="rotate(-32 1365.6 499.4)"/>
<ellipse clip-path="url(#cp_SB)" cx="1397.5" cy="482.2" rx="6.6" ry="1.7" fill="#aeb2b0" fill-opacity="0.6" transform="rotate(53 1397.5 482.2)"/>
<ellipse clip-path="url(#cp_SB)" cx="1426.3" cy="527.2" rx="4.4" ry="2.9" fill="#aeb2b0" fill-opacity="0.6" transform="rotate(-46 1426.3 527.2)"/>
<ellipse clip-path="url(#cp_SB)" cx="1423.6" cy="500.4" rx="5.4" ry="2.5" fill="#aeb2b0" fill-opacity="0.6" transform="rotate(-40 1423.6 500.4)"/>
<ellipse clip-path="url(#cp_SB)" cx="1358.1" cy="481.7" rx="3.2" ry="1.2" fill="#aeb2b0" fill-opacity="0.6" transform="rotate(-12 1358.1 481.7)"/>
<ellipse clip-path="url(#cp_SB)" cx="1466.3" cy="505.5" rx="3.6" ry="1.9" fill="#aeb2b0" fill-opacity="0.6" transform="rotate(-26 1466.3 505.5)"/>
<ellipse clip-path="url(#cp_SB)" cx="1432.5" cy="530.3" rx="2.8" ry="1.5" fill="#aeb2b0" fill-opacity="0.6" transform="rotate(21 1432.5 530.3)"/>
<ellipse clip-path="url(#cp_SB)" cx="1461.7" cy="525.2" rx="4.2" ry="3.0" fill="#aeb2b0" fill-opacity="0.6" transform="rotate(-59 1461.7 525.2)"/>
<ellipse clip-path="url(#cp_SB)" cx="1338.5" cy="534.5" rx="4.1" ry="1.1" fill="#aeb2b0" fill-opacity="0.6" transform="rotate(6 1338.5 534.5)"/>
<ellipse clip-path="url(#cp_SB)" cx="1468.5" cy="516.3" rx="3.8" ry="1.2" fill="#aeb2b0" fill-opacity="0.6" transform="rotate(-51 1468.5 516.3)"/>
<text x="876.0" y="216.0" font-size="11.8" fill="#1c1c1c" textLength="54.3" lengthAdjust="spacingAndGlyphs" stroke="#ffffff" stroke-opacity="0.85" stroke-width="1.8" stroke-linejoin="round" paint-order="stroke">Alexandria</text>
<text x="1238.5" y="217.4" font-size="11.8" fill="#1c1c1c" textLength="44.4" lengthAdjust="spacingAndGlyphs" stroke="#ffffff" stroke-opacity="0.85" stroke-width="1.8" stroke-linejoin="round" paint-order="stroke">McComb</text>
<text x="1450.3" y="211.4" font-size="11.8" fill="#1c1c1c" textLength="59.5" lengthAdjust="spacingAndGlyphs" stroke="#ffffff" stroke-opacity="0.85" stroke-width="1.8" stroke-linejoin="round" paint-order="stroke">Hattiesburg</text>
<text x="1466.7" y="401.3" font-size="11.8" fill="#1c1c1c" textLength="40.5" lengthAdjust="spacingAndGlyphs" stroke="#ffffff" stroke-opacity="0.85" stroke-width="1.8" stroke-linejoin="round" paint-order="stroke">Gulfport</text>
<text x="1524.4" y="399.6" font-size="11.8" fill="#1c1c1c" textLength="27.2" lengthAdjust="spacingAndGlyphs" stroke="#ffffff" stroke-opacity="0.85" stroke-width="1.8" stroke-linejoin="round" paint-order="stroke">Biloxi</text>
<text x="1071.7" y="544.8" font-size="11.8" fill="#1c1c1c" textLength="59.3" lengthAdjust="spacingAndGlyphs" stroke="#ffffff" stroke-opacity="0.85" stroke-width="1.8" stroke-linejoin="round" paint-order="stroke">Morgan City</text>
<text x="1151.8" y="572.8" font-size="11.5" fill="#555555" textLength="36.2" lengthAdjust="spacingAndGlyphs" stroke="#ffffff" stroke-opacity="0.85" stroke-width="1.5" stroke-linejoin="round" paint-order="stroke">Houma</text>
<text x="1362.0" y="423.7" font-size="11.8" fill="#1c1c1c" textLength="30.3" lengthAdjust="spacingAndGlyphs" stroke="#ffffff" stroke-opacity="0.85" stroke-width="1.8" stroke-linejoin="round" paint-order="stroke">Slidell</text>
<text x="957.0" y="430.5" font-size="11" fill="#555555" textLength="43.0" lengthAdjust="spacingAndGlyphs">Lafayette</text>
<text x="1066.0" y="392.0" font-size="11" fill="#777777" textLength="56.0" lengthAdjust="spacingAndGlyphs">Baton Rouge</text>
<text x="994.0" y="519.4" font-size="10.5" fill="#555555" font-style="italic" textLength="25.0" lengthAdjust="spacingAndGlyphs" stroke="#ffffff" stroke-opacity="0.85" stroke-width="1.5" stroke-linejoin="round" paint-order="stroke">153 ft</text>
<text x="1442.3" y="375.5" font-size="10.5" fill="#555555" font-style="italic" textLength="25.3" lengthAdjust="spacingAndGlyphs" stroke="#ffffff" stroke-opacity="0.85" stroke-width="1.5" stroke-linejoin="round" paint-order="stroke">160 ft</text>
<circle cx="993" cy="523.5" r="0.9" fill="#555"/><circle cx="1441" cy="379" r="0.9" fill="#555"/>
<text x="1143.2" y="201.9" font-size="10" fill="#6f8266" textLength="30.2" lengthAdjust="spacingAndGlyphs">Forest</text>
<text x="1478.8" y="239.8" font-size="10" fill="#70746a" textLength="25.2" lengthAdjust="spacingAndGlyphs">Camp</text>
<text x="1477.6" y="251.8" font-size="10" fill="#70746a" textLength="31.3" lengthAdjust="spacingAndGlyphs">Shelby</text>
<text x="1481.3" y="269.1" font-size="10" fill="#6f8266" textLength="37.1" lengthAdjust="spacingAndGlyphs">De Soto</text>
<text x="1480.5" y="278.0" font-size="10" fill="#6f8266" textLength="39.1" lengthAdjust="spacingAndGlyphs">National</text>
<text x="1485.6" y="286.6" font-size="10" fill="#6f8266" textLength="29.3" lengthAdjust="spacingAndGlyphs">Forest</text>
<text x="1007.8" y="302.7" font-size="11" fill="#6fa0aa" font-style="italic" textLength="39.6" lengthAdjust="spacingAndGlyphs">Monday</text>
<text x="1015.6" y="312.1" font-size="11" fill="#6fa0aa" font-style="italic" textLength="24.4" lengthAdjust="spacingAndGlyphs">Lake</text>
<text x="1221.6" y="417.7" font-size="11" fill="#6fa0aa" font-style="italic" textLength="23.2" lengthAdjust="spacingAndGlyphs">Lake</text>
<text x="1208.7" y="427.2" font-size="11" fill="#6fa0aa" font-style="italic" textLength="49.9" lengthAdjust="spacingAndGlyphs">Maurepas</text>
<text x="1271.3" y="440.5" font-size="11" fill="#6fa0aa" font-style="italic" textLength="24.1" lengthAdjust="spacingAndGlyphs">Lake</text>
<text x="1251.3" y="448.8" font-size="11" fill="#6fa0aa" font-style="italic" textLength="66.9" lengthAdjust="spacingAndGlyphs">Pontchartrain</text>
<text x="1101.9" y="508.0" font-size="11" fill="#6fa0aa" font-style="italic" textLength="19.8" lengthAdjust="spacingAndGlyphs">Lake</text>
<text x="1098.4" y="517.2" font-size="11" fill="#6fa0aa" font-style="italic" textLength="30.2" lengthAdjust="spacingAndGlyphs">Verret</text>
<text x="1344.4" y="543.6" font-size="11" fill="#7f93b4" font-style="italic" textLength="24.6" lengthAdjust="spacingAndGlyphs">Lake</text>
<text x="1344.4" y="552.2" font-size="11" fill="#7f93b4" font-style="italic" textLength="24.6" lengthAdjust="spacingAndGlyphs">John</text>
<text x="852.0" y="538.7" font-size="11" fill="#6fa0aa" font-style="italic" textLength="26.6" lengthAdjust="spacingAndGlyphs">White</text>
<text x="855.0" y="548.2" font-size="11" fill="#6fa0aa" font-style="italic" textLength="22.0" lengthAdjust="spacingAndGlyphs">Lake</text>
<text x="1361.3" y="358.3" font-size="11" fill="#6fa0aa" font-style="italic" transform="rotate(57 1361.3 358.3)">Pearl River</text>
<text x="1548.5" y="266.5" font-size="11" fill="#6fa0aa" font-style="italic" transform="rotate(-32 1548.5 266.5)" letter-spacing="1.2">Chickasawhay</text>
<text x="1580.0" y="222.0" font-size="11" fill="#6fa0aa" font-style="italic" transform="rotate(-78 1580.0 222.0)">River</text>
<text x="996.0" y="312.0" font-size="10.5" fill="#6fa0aa" font-style="italic" transform="rotate(80 996.0 312.0)">Atchafalaya River</text>
<text x="1340.6" y="532.7" font-size="11.5" fill="#80687f" textLength="71.5" lengthAdjust="spacingAndGlyphs">LOUISIANA</text>
<polyline points="1022.5,272.6 1370.4,272.6" fill="none" stroke="#353535" stroke-width="1.9" stroke-linejoin="round" stroke-linecap="round" />
<polyline points="1107.0,272.6 1105.0,277.0 1103.3,281.8 1102.0,288.0 1100.7,294.7 1098.5,302.0 1096.8,308.9 1094.5,315.0 1092.0,320.7 1086.5,326.2 1083.5,332.0 1081.0,337.2 1085.1,341.3 1083.7,346.9" fill="none" stroke="#353535" stroke-width="1.9" stroke-linejoin="round" stroke-linecap="round" />
<polyline points="1085.1,341.3 1092.0,336.5 1120.0,334.5 1149.9,332.4 1162.7,332.2 1169.1,330.2" fill="none" stroke="#353535" stroke-width="1.9" stroke-linejoin="round" stroke-linecap="round" />
<polyline points="1169.0,272.6 1167.0,277.0 1165.3,281.8 1165.3,290.8 1167.0,297.0 1168.5,303.8 1167.0,310.0 1166.6,316.7 1168.0,324.0 1169.1,330.2" fill="none" stroke="#353535" stroke-width="1.9" stroke-linejoin="round" stroke-linecap="round" />
<polyline points="1169.1,330.2 1166.0,334.0 1162.7,337.4 1160.0,342.0 1158.8,345.7" fill="none" stroke="#353535" stroke-width="1.9" stroke-linejoin="round" stroke-linecap="round" />
<polyline points="1158.8,345.7 1218.3,346.4" fill="none" stroke="#353535" stroke-width="1.9" stroke-linejoin="round" stroke-linecap="round" />
<polyline points="1218.3,272.6 1218.3,346.4" fill="none" stroke="#353535" stroke-width="1.9" stroke-linejoin="round" stroke-linecap="round" />
<polyline points="1218.3,346.4 1217.8,386.7 1221.0,391.0 1225.0,395.3 1228.0,401.0 1231.9,407.4 1235.4,414.2" fill="none" stroke="#353535" stroke-width="1.9" stroke-linejoin="round" stroke-linecap="round" />
<polyline points="1258.6,272.6 1259.5,291.5 1262.0,297.0 1264.7,301.8 1266.0,308.0 1268.1,313.9 1270.0,320.8 1273.4,330.0 1276.5,336.0" fill="none" stroke="#353535" stroke-width="1.9" stroke-linejoin="round" stroke-linecap="round" />
<polyline points="1276.5,336.0 1350.1,343.6" fill="none" stroke="#353535" stroke-width="1.9" stroke-linejoin="round" stroke-linecap="round" />
<polyline points="1370.4,272.6 1369.9,279.4 1367.0,284.0 1365.6,288.0 1364.0,293.0 1363.0,298.4 1361.0,305.0 1359.6,310.4 1357.0,316.0 1354.4,320.8 1353.0,324.0 1351.0,327.6 1352.5,331.0 1351.8,334.5 1350.5,339.0 1350.1,343.6" fill="none" stroke="#353535" stroke-width="1.9" stroke-linejoin="round" stroke-linecap="round" />
<polyline points="1350.1,343.6 1352.0,349.0 1354.4,353.9 1355.5,360.0 1357.9,366.0 1362.0,372.0 1366.5,378.1 1372.0,383.0 1377.7,386.7 1377.5,393.0 1379.4,400.5 1383.0,406.0 1387.1,410.8 1387.0,419.0 1388.9,428.0 1391.0,434.0 1394.0,438.4 1399.0,440.0 1404.4,441.8 1407.0,446.0 1408.7,450.4" fill="none" stroke="#353535" stroke-width="1.9" stroke-linejoin="round" stroke-linecap="round" />
<polyline points="1408.7,450.4 1398.0,452.5 1388.9,453.9 1382.0,451.0 1376.8,448.7 1366.5,447.0 1359.6,450.4 1355.0,446.0 1351.0,443.5 1338.9,442.7 1325.1,447.0 1309.6,450.4 1300.5,449.5 1292.7,444.6" fill="none" stroke="#353535" stroke-width="1.9" stroke-linejoin="round" stroke-linecap="round" />
<polyline points="1276.5,336.0 1276.9,409.1 1285.1,415.0 1289.0,424.0 1292.0,432.9 1292.7,444.6" fill="none" stroke="#353535" stroke-width="1.9" stroke-linejoin="round" stroke-linecap="round" />
<polyline points="1204.0,435.8 1207.9,438.4 1214.8,441.2 1223.1,440.5 1226.5,435.0 1230.0,430.2 1234.1,424.6 1245.0,422.5 1257.5,421.2 1265.8,421.9 1279.0,427.5 1292.0,432.9" fill="none" stroke="#353535" stroke-width="1.9" stroke-linejoin="round" stroke-linecap="round" />
<polyline points="1234.1,424.6 1235.4,414.2" fill="none" stroke="#353535" stroke-width="1.9" stroke-linejoin="round" stroke-linecap="round" />
<polyline points="1158.8,345.7 1154.0,349.0 1147.2,355.4 1143.0,358.5 1140.7,360.6 1143.3,365.8 1142.4,369.5 1144.1,379.8 1142.5,387.0 1141.5,393.6 1144.0,399.0 1147.5,403.9 1152.0,407.0 1156.1,409.1 1163.9,410.8" fill="none" stroke="#353535" stroke-width="1.9" stroke-linejoin="round" stroke-linecap="round" />
<polyline points="1163.9,410.8 1168.2,416.0 1172.0,421.0 1176.5,427.6 1182.0,433.1 1186.0,438.0 1190.3,444.1 1194.4,446.9 1196.0,443.0 1197.1,440.0 1200.0,437.0 1204.0,435.8" fill="none" stroke="#353535" stroke-width="1.9" stroke-linejoin="round" stroke-linecap="round" />
<polyline points="1083.7,346.9 1083.0,353.0 1081.0,359.3 1085.1,363.4 1092.0,363.4 1095.4,367.5 1091.0,372.0 1088.0,378.0 1092.0,384.0 1099.0,390.0 1103.6,396.0 1100.1,402.0 1095.0,407.4 1098.4,411.7 1106.0,414.0 1113.1,415.1 1116.5,417.7 1122.0,417.0 1128.6,416.0 1135.1,415.2" fill="none" stroke="#353535" stroke-width="1.9" stroke-linejoin="round" stroke-linecap="round" />
<polyline points="1135.1,415.2 1140.0,413.0 1144.1,410.8 1154.0,410.5 1163.9,410.8" fill="none" stroke="#353535" stroke-width="1.9" stroke-linejoin="round" stroke-linecap="round" />
<polyline points="1135.1,415.2 1134.0,421.0 1132.4,427.6 1129.5,435.0 1126.9,441.3 1124.0,448.0 1121.3,455.1 1120.5,462.0 1120.0,468.9" fill="none" stroke="#353535" stroke-width="1.9" stroke-linejoin="round" stroke-linecap="round" />
<polyline points="1120.0,468.9 1129.0,468.0 1137.9,467.5 1144.8,470.3 1146.2,473.0" fill="none" stroke="#353535" stroke-width="1.9" stroke-linejoin="round" stroke-linecap="round" />
<polyline points="1146.2,473.0 1150.0,467.0 1157.2,459.3 1166.0,457.5 1176.5,455.1 1187.0,453.5 1197.1,451.7" fill="none" stroke="#353535" stroke-width="1.9" stroke-linejoin="round" stroke-linecap="round" />
<polyline points="1204.0,435.8 1206.5,438.4 1206.0,444.0 1205.2,449.5 1197.1,451.7" fill="none" stroke="#353535" stroke-width="1.9" stroke-linejoin="round" stroke-linecap="round" />
<polyline points="1197.1,451.7 1202.7,460.6 1198.5,466.2 1197.5,474.0 1197.1,482.7 1199.9,493.7 1201.3,507.0" fill="none" stroke="#353535" stroke-width="1.9" stroke-linejoin="round" stroke-linecap="round" />
<polyline points="1155.1,502.7 1166.0,503.0 1176.5,502.7 1179.2,500.6 1183.0,502.0 1187.5,503.4 1194.0,505.5 1201.3,507.0" fill="none" stroke="#353535" stroke-width="1.9" stroke-linejoin="round" stroke-linecap="round" />
<polyline points="1146.2,473.0 1146.2,475.8 1148.9,482.7 1152.0,486.0 1155.1,489.6 1155.1,502.7" fill="none" stroke="#353535" stroke-width="1.9" stroke-linejoin="round" stroke-linecap="round" />
<polyline points="1093.8,479.9 1097.9,476.5 1105.0,474.5 1113.1,473.0 1120.0,468.9" fill="none" stroke="#353535" stroke-width="1.9" stroke-linejoin="round" stroke-linecap="round" />
<polyline points="1093.8,479.9 1091.7,485.4 1093.8,493.7 1097.0,498.0 1101.0,501.0 1107.0,507.0 1113.0,514.6 1117.0,520.0 1120.8,525.0 1121.5,534.0 1121.7,543.9 1120.5,550.0 1120.0,556.0 1125.1,561.1" fill="none" stroke="#353535" stroke-width="1.9" stroke-linejoin="round" stroke-linecap="round" />
<polyline points="1155.1,502.7 1159.6,503.4 1159.6,508.6 1155.3,509.5 1154.4,516.3 1147.0,530.0 1138.9,543.9 1132.0,552.5 1125.1,561.1" fill="none" stroke="#353535" stroke-width="1.9" stroke-linejoin="round" stroke-linecap="round" />
<polyline points="1292.7,444.6 1276.0,451.0 1258.9,457.7 1246.5,466.7 1241.7,473.6 1231.3,477.7 1221.7,481.2 1221.0,486.7 1222.5,491.0 1224.5,494.9 1224.5,507.0" fill="none" stroke="#353535" stroke-width="1.9" stroke-linejoin="round" stroke-linecap="round" />
<polyline points="1201.3,507.0 1224.5,507.0" fill="none" stroke="#353535" stroke-width="1.9" stroke-linejoin="round" stroke-linecap="round" />
<polyline points="1271.8,453.2 1271.3,470.0 1269.9,486.7 1271.0,496.0 1272.7,504.6 1278.2,511.5 1285.1,517.0 1289.8,519.8 1288.0,528.0 1285.5,538.7 1287.2,548.2" fill="none" stroke="#353535" stroke-width="1.9" stroke-linejoin="round" stroke-linecap="round" />
<polyline points="1276.0,451.0 1271.8,453.2" fill="none" stroke="#353535" stroke-width="1.9" stroke-linejoin="round" stroke-linecap="round" />
<polyline points="1300.5,449.5 1299.8,466.0 1298.9,482.5 1302.0,486.0 1310.0,489.0 1321.7,490.0" fill="none" stroke="#353535" stroke-width="1.9" stroke-linejoin="round" stroke-linecap="round" />
<polyline points="1321.7,487.9 1326.8,485.3 1331.0,488.5 1337.2,486.2 1344.0,486.5 1347.0,481.0 1352.7,475.0 1358.0,474.0 1362.0,472.5 1367.0,475.0 1371.6,478.4 1370.0,471.0 1380.2,462.5 1385.0,458.0 1388.9,453.9" fill="none" stroke="#353535" stroke-width="1.9" stroke-linejoin="round" stroke-linecap="round" />
<polyline points="1408.7,450.4 1416.0,448.5 1425.0,447.0 1433.0,446.0 1442.3,445.2 1455.5,444.4 1462.0,442.0 1469.3,439.2 1477.0,444.0 1485.6,448.7 1507.0,452.0 1529.6,454.7 1531.5,459.0 1533.9,463.3 1541.6,475.0 1545.0,484.0 1546.8,492.2 1547.5,501.0 1546.8,509.5 1545.0,520.0 1541.6,531.8 1538.0,540.0 1533.0,547.4 1528.0,553.5 1522.7,559.4" fill="none" stroke="#353535" stroke-width="1.9" stroke-linejoin="round" stroke-linecap="round" />
<polyline points="1321.7,490.0 1324.0,498.0 1326.8,505.1 1333.7,507.7 1336.0,512.0 1338.9,516.3 1342.0,521.0 1345.8,525.8 1352.0,528.5 1359.6,530.1 1361.3,535.3 1367.0,535.0 1373.4,534.4 1377.0,539.0 1380.2,543.9 1387.0,548.5 1394.0,552.5 1401.0,554.5 1407.8,556.8 1411.5,560.5 1415.6,564.6 1428.0,563.7 1442.3,562.9 1468.0,560.0 1495.1,556.8 1508.9,558.5 1522.7,559.4" fill="none" stroke="#353535" stroke-width="1.9" stroke-linejoin="round" stroke-linecap="round" />
<polyline points="1522.7,559.4 1516.0,566.0 1508.9,573.2 1504.0,579.0 1500.3,585.2 1495.0,590.0 1490.0,594.7 1485.0,596.5 1481.3,597.3 1478.0,600.5 1477.0,604.2 1477.0,610.0 1479.0,616.0 1482.2,620.3 1486.5,626.0 1491.7,631.5 1500.0,635.0 1508.9,638.4 1513.5,640.5 1517.5,643.6 1519.5,647.0 1520.1,651.3 1519.0,658.0 1518.4,665.1 1516.0,669.0 1512.4,672.0 1508.0,673.8 1504.6,674.6 1503.0,679.5 1502.0,684.1 1499.0,688.0 1495.1,691.8 1490.5,698.0 1486.5,704.7 1484.0,707.5 1481.3,709.1 1476.5,710.0 1472.7,709.6 1469.0,707.0 1465.8,703.9 1462.0,699.0 1458.9,695.3 1455.5,696.0 1452.1,697.9 1446.0,704.0 1440.0,711.6 1435.4,718.5 1430.5,721.8 1425.0,723.7 1420.5,722.8 1416.4,720.2 1413.5,715.0 1413.0,709.9 1415.5,704.0 1418.1,699.6 1418.1,673.7 1416.5,669.0 1414.7,665.1 1411.5,660.5 1407.8,656.5 1400.0,653.0 1392.3,651.3 1366.5,655.6 1338.9,660.8" fill="none" stroke="#353535" stroke-width="1.9" stroke-linejoin="round" stroke-linecap="round" />
<polyline points="1309.6,518.1 1308.8,526.7 1310.5,534.0 1313.1,542.2 1317.0,550.0 1321.7,557.7 1323.5,564.0 1325.1,571.5 1324.5,583.0 1325.1,595.6 1328.5,603.0 1332.0,610.0 1334.0,619.0 1336.3,628.9 1338.9,632.4 1338.9,660.8" fill="none" stroke="#353535" stroke-width="1.9" stroke-linejoin="round" stroke-linecap="round" />
<polyline points="1287.2,548.2 1291.5,556.0 1291.0,562.0 1292.4,568.0 1289.5,573.5 1286.4,578.4 1290.0,585.0 1294.1,592.1 1302.0,596.0 1311.3,599.0 1314.0,605.0 1316.5,610.0 1314.8,620.3 1320.8,628.9 1318.2,635.8 1309.6,647.9 1305.3,655.6 1305.3,672.9" fill="none" stroke="#353535" stroke-width="1.9" stroke-linejoin="round" stroke-linecap="round" />
<polyline points="1305.3,672.9 1309.5,668.5 1314.8,665.1 1326.0,662.8 1338.9,660.8" fill="none" stroke="#353535" stroke-width="1.9" stroke-linejoin="round" stroke-linecap="round" />
<polyline points="1224.5,507.0 1226.5,511.5 1230.5,515.0 1234.1,518.4 1235.4,525.0 1243.0,529.5 1252.6,533.6 1255.5,540.0 1257.8,547.4 1269.8,549.1 1287.2,548.2" fill="none" stroke="#353535" stroke-width="1.9" stroke-linejoin="round" stroke-linecap="round" />
<polyline points="1155.3,509.5 1159.6,508.6 1159.6,503.4" fill="none" stroke="#353535" stroke-width="1.9" stroke-linejoin="round" stroke-linecap="round" />
<polyline points="1138.9,543.9 1159.6,543.9 1160.4,537.9 1168.2,537.0 1173.4,533.6 1176.5,538.5 1180.2,543.9 1185.0,551.0 1190.6,557.7 1196.5,563.0 1202.6,568.0 1209.0,573.0 1216.4,578.4 1221.0,585.0 1225.0,592.1 1233.5,601.0 1243.1,610.0 1250.9,615.2 1252.0,623.0 1251.7,630.7 1249.0,637.0 1245.7,642.7 1245.7,694.4" fill="none" stroke="#353535" stroke-width="1.9" stroke-linejoin="round" stroke-linecap="round" />
<polyline points="1245.7,694.4 1258.0,691.8 1270.0,689.2 1282.1,685.8 1295.8,678.9 1305.3,672.9" fill="none" stroke="#353535" stroke-width="1.9" stroke-linejoin="round" stroke-linecap="round" />
<polyline points="1125.1,561.1 1116.0,563.5 1107.8,565.8 1106.1,568.4 1096.6,574.5 1089.7,581.3 1088.5,586.5 1088.9,591.7 1090.5,596.0 1093.2,600.3 1096.5,603.0 1100.1,605.5 1098.8,609.0 1097.5,612.4 1093.0,617.0 1088.9,621.0 1087.0,624.5 1085.4,627.9 1081.5,628.9 1077.7,628.7 1076.0,626.5 1075.4,623.5 1075.1,643.4 1081.0,648.8 1087.1,653.7 1097.0,656.3 1107.8,658.0 1114.0,661.5 1119.9,664.9 1131.0,666.7 1142.3,668.3 1145.7,670.1 1141.5,671.8 1138.0,673.5 1135.4,678.0 1134.6,682.4 1138.0,687.0 1142.4,691.0 1149.0,693.6 1156.1,695.3 1163.5,696.0 1171.6,696.1 1181.0,695.0 1190.6,693.5 1205.0,689.5 1220.7,685.5 1227.0,688.5 1233.7,691.8 1239.5,693.4 1245.7,694.4" fill="none" stroke="#353535" stroke-width="1.9" stroke-linejoin="round" stroke-linecap="round" />
<polyline points="1125.1,561.1 1138.9,543.9" fill="none" stroke="#353535" stroke-width="1.9" stroke-linejoin="round" stroke-linecap="round" />
<polyline points="1321.7,490.0 1318.0,500.0 1309.6,518.1" fill="none" stroke="#353535" stroke-width="1.9" stroke-linejoin="round" stroke-linecap="round" />
<polyline points="1007.8,263.9 1003.5,268.2 997.5,274.2 992.3,279.4 992.7,301.8 988.9,303.9 993.2,308.7 998.3,319.0 1003.5,332.8 1006.1,341.9 1001.8,352.2 1001.8,366.0 1006.1,376.3 1000.9,379.4" fill="none" stroke="#353535" stroke-width="1.9" stroke-linejoin="round" stroke-linecap="round" />
<polyline points="1000.9,379.4 1030.2,379.8 1056.2,381.3 1062.4,375.8" fill="none" stroke="#353535" stroke-width="1.9" stroke-linejoin="round" stroke-linecap="round" />
<polyline points="1062.4,375.8 1063.0,371.7 1066.5,364.8 1072.7,360.6 1078.2,352.4 1083.7,346.9" fill="none" stroke="#353535" stroke-width="1.9" stroke-linejoin="round" stroke-linecap="round" />
<polyline points="1007.8,263.9 1012.0,267.0 1018.1,263.6 1022.5,266.5 1021.6,272.5 1019.5,280.0 1019.9,288.0 1019.0,298.4 1021.6,305.2 1030.2,307.8 1038.0,307.0 1038.5,302.0 1038.0,298.4 1033.6,294.0 1027.6,293.2 1027.6,290.3 1039.7,290.3 1044.0,294.9 1045.7,301.8 1044.5,309.0 1042.4,313.0 1036.9,319.3 1030.0,322.0 1028.0,328.0 1050.0,329.0 1064.4,324.8 1069.2,322.7 1072.7,326.2 1074.5,333.0 1076.1,338.6 1078.2,344.1 1083.7,346.9" fill="none" stroke="#353535" stroke-width="1.9" stroke-linejoin="round" stroke-linecap="round" />
<polyline points="1007.8,263.9 1012.0,268.5 1016.0,266.5 1021.0,272.0" fill="none" stroke="#353535" stroke-width="1.9" stroke-linejoin="round" stroke-linecap="round" />
<polyline points="1056.2,381.3 1061.7,391.0 1066.5,399.2 1072.7,403.4 1081.0,412.0 1082.8,415.2 1098.4,414.7" fill="none" stroke="#353535" stroke-width="1.9" stroke-linejoin="round" stroke-linecap="round" />
<polyline points="1010.4,379.8 1018.9,385.4 1023.1,393.7 1025.8,403.4 1021.6,406.5 1025.0,409.1 1025.9,417.7 1031.9,426.3 1036.2,432.8 1050.0,433.5 1051.7,436.6 1050.0,440.1 1052.6,448.7 1055.2,457.3 1053.5,462.5 1069.8,462.8 1074.0,470.0 1089.6,471.7 1095.2,477.2 1097.9,476.5" fill="none" stroke="#353535" stroke-width="1.9" stroke-linejoin="round" stroke-linecap="round" />
<polyline points="1292.7,444.6 1300.5,449.5" fill="none" stroke="#353535" stroke-width="1.9" stroke-linejoin="round" stroke-linecap="round" />
<clipPath id="cp_all"><polygon points="1107.0,272.6 1169.0,272.6 1167.0,277.0 1165.3,281.8 1165.3,290.8 1167.0,297.0 1168.5,303.8 1167.0,310.0 1166.6,316.7 1168.0,324.0 1169.1,330.2 1162.7,332.2 1149.9,332.4 1120.0,334.5 1092.0,336.5 1085.1,341.3 1081.0,337.2 1083.5,332.0 1086.5,326.2 1092.0,320.7 1094.5,315.0 1096.8,308.9 1098.5,302.0 1100.7,294.7 1102.0,288.0 1103.3,281.8 1105.0,277.0 1107.0,272.6"/><polygon points="1169.0,272.6 1218.3,272.6 1218.3,346.4 1158.8,345.7 1160.0,342.0 1162.7,337.4 1166.0,334.0 1169.1,330.2 1168.0,324.0 1166.6,316.7 1167.0,310.0 1168.5,303.8 1167.0,297.0 1165.3,290.8 1165.3,281.8 1167.0,277.0 1169.0,272.6"/><polygon points="1218.3,272.6 1258.6,272.6 1259.5,291.5 1262.0,297.0 1264.7,301.8 1266.0,308.0 1268.1,313.9 1270.0,320.8 1273.4,330.0 1276.5,336.0 1276.9,409.1 1285.1,415.0 1289.0,424.0 1292.0,432.9 1279.0,427.5 1265.8,421.9 1257.5,421.2 1245.0,422.5 1234.1,424.6 1235.4,414.2 1231.9,407.4 1228.0,401.0 1225.0,395.3 1221.0,391.0 1217.8,386.7 1218.3,346.4 1218.3,272.6"/><polygon points="1258.6,272.6 1370.4,272.6 1369.9,279.4 1367.0,284.0 1365.6,288.0 1364.0,293.0 1363.0,298.4 1361.0,305.0 1359.6,310.4 1357.0,316.0 1354.4,320.8 1353.0,324.0 1351.0,327.6 1352.5,331.0 1351.8,334.5 1350.5,339.0 1350.1,343.6 1276.5,336.0 1273.4,330.0 1270.0,320.8 1268.1,313.9 1266.0,308.0 1264.7,301.8 1262.0,297.0 1259.5,291.5 1258.6,272.6"/><polygon points="1276.5,336.0 1350.1,343.6 1352.0,349.0 1354.4,353.9 1355.5,360.0 1357.9,366.0 1362.0,372.0 1366.5,378.1 1372.0,383.0 1377.7,386.7 1377.5,393.0 1379.4,400.5 1383.0,406.0 1387.1,410.8 1387.0,419.0 1388.9,428.0 1391.0,434.0 1394.0,438.4 1399.0,440.0 1404.4,441.8 1407.0,446.0 1408.7,450.4 1398.0,452.5 1388.9,453.9 1382.0,451.0 1376.8,448.7 1366.5,447.0 1359.6,450.4 1355.0,446.0 1351.0,443.5 1338.9,442.7 1325.1,447.0 1309.6,450.4 1300.5,449.5 1292.7,444.6 1292.0,432.9 1289.0,424.0 1285.1,415.0 1276.9,409.1 1276.5,336.0"/><polygon points="1083.7,346.9 1085.1,341.3 1092.0,336.5 1120.0,334.5 1149.9,332.4 1162.7,332.2 1169.1,330.2 1166.0,334.0 1162.7,337.4 1160.0,342.0 1158.8,345.7 1154.0,349.0 1147.2,355.4 1143.0,358.5 1140.7,360.6 1143.3,365.8 1142.4,369.5 1144.1,379.8 1142.5,387.0 1141.5,393.6 1144.0,399.0 1147.5,403.9 1152.0,407.0 1156.1,409.1 1163.9,410.8 1154.0,410.5 1144.1,410.8 1140.0,413.0 1135.1,415.2 1128.6,416.0 1122.0,417.0 1116.5,417.7 1113.1,415.1 1106.0,414.0 1098.4,411.7 1095.0,407.4 1100.1,402.0 1103.6,396.0 1099.0,390.0 1092.0,384.0 1088.0,378.0 1091.0,372.0 1095.4,367.5 1092.0,363.4 1085.1,363.4 1081.0,359.3 1083.0,353.0 1083.7,346.9"/><polygon points="1158.8,345.7 1218.3,346.4 1217.8,386.7 1221.0,391.0 1225.0,395.3 1228.0,401.0 1231.9,407.4 1235.4,414.2 1234.1,424.6 1230.0,430.2 1226.5,435.0 1223.1,440.5 1214.8,441.2 1207.9,438.4 1204.0,435.8 1200.0,437.0 1197.1,440.0 1196.0,443.0 1194.4,446.9 1190.3,444.1 1186.0,438.0 1182.0,433.1 1176.5,427.6 1172.0,421.0 1168.2,416.0 1163.9,410.8 1156.1,409.1 1152.0,407.0 1147.5,403.9 1144.0,399.0 1141.5,393.6 1142.5,387.0 1144.1,379.8 1142.4,369.5 1143.3,365.8 1140.7,360.6 1143.0,358.5 1147.2,355.4 1154.0,349.0 1158.8,345.7"/><polygon points="1135.1,415.2 1140.0,413.0 1144.1,410.8 1154.0,410.5 1163.9,410.8 1168.2,416.0 1172.0,421.0 1176.5,427.6 1182.0,433.1 1186.0,438.0 1190.3,444.1 1194.4,446.9 1196.0,443.0 1197.1,440.0 1200.0,437.0 1204.0,435.8 1206.5,438.4 1206.0,444.0 1205.2,449.5 1197.1,451.7 1187.0,453.5 1176.5,455.1 1166.0,457.5 1157.2,459.3 1150.0,467.0 1146.2,473.0 1144.8,470.3 1137.9,467.5 1129.0,468.0 1120.0,468.9 1120.5,462.0 1121.3,455.1 1124.0,448.0 1126.9,441.3 1129.5,435.0 1132.4,427.6 1134.0,421.0 1135.1,415.2"/><polygon points="1146.2,473.0 1150.0,467.0 1157.2,459.3 1166.0,457.5 1176.5,455.1 1187.0,453.5 1197.1,451.7 1202.7,460.6 1198.5,466.2 1197.5,474.0 1197.1,482.7 1199.9,493.7 1201.3,507.0 1194.0,505.5 1187.5,503.4 1183.0,502.0 1179.2,500.6 1176.5,502.7 1166.0,503.0 1155.1,502.7 1155.1,489.6 1152.0,486.0 1148.9,482.7 1146.2,475.8 1146.2,473.0"/><polygon points="1093.8,479.9 1097.9,476.5 1105.0,474.5 1113.1,473.0 1120.0,468.9 1129.0,468.0 1137.9,467.5 1144.8,470.3 1146.2,473.0 1146.2,475.8 1148.9,482.7 1152.0,486.0 1155.1,489.6 1155.1,502.7 1159.6,503.4 1159.6,508.6 1155.3,509.5 1154.4,516.3 1147.0,530.0 1138.9,543.9 1132.0,552.5 1125.1,561.1 1120.0,556.0 1120.5,550.0 1121.7,543.9 1121.5,534.0 1120.8,525.0 1117.0,520.0 1113.0,514.6 1107.0,507.0 1101.0,501.0 1097.0,498.0 1093.8,493.7 1091.7,485.4 1093.8,479.9"/><polygon points="1204.0,435.8 1207.9,438.4 1214.8,441.2 1223.1,440.5 1226.5,435.0 1230.0,430.2 1234.1,424.6 1245.0,422.5 1257.5,421.2 1265.8,421.9 1279.0,427.5 1292.0,432.9 1292.7,444.6 1276.0,451.0 1258.9,457.7 1246.5,466.7 1241.7,473.6 1231.3,477.7 1221.7,481.2 1221.0,486.7 1222.5,491.0 1224.5,494.9 1224.5,507.0 1201.3,507.0 1199.9,493.7 1197.1,482.7 1197.5,474.0 1198.5,466.2 1202.7,460.6 1197.1,451.7 1205.2,449.5 1206.0,444.0 1206.5,438.4 1204.0,435.8"/><polygon points="1276.0,451.0 1271.8,453.2 1271.3,470.0 1269.9,486.7 1271.0,496.0 1272.7,504.6 1278.2,511.5 1285.1,517.0 1289.8,519.8 1288.0,528.0 1285.5,538.7 1287.2,548.2 1269.8,549.1 1257.8,547.4 1255.5,540.0 1252.6,533.6 1243.0,529.5 1235.4,525.0 1234.1,518.4 1230.5,515.0 1226.5,511.5 1224.5,507.0 1224.5,494.9 1222.5,491.0 1221.0,486.7 1221.7,481.2 1231.3,477.7 1241.7,473.6 1246.5,466.7 1258.9,457.7"/><polygon points="1276.0,451.0 1292.7,444.6 1300.5,449.5 1299.8,466.0 1298.9,482.5 1302.0,486.0 1310.0,489.0 1321.7,490.0 1318.0,500.0 1309.6,518.1 1308.8,526.7 1310.5,534.0 1313.1,542.2 1317.0,550.0 1321.7,557.7 1305.0,556.0 1287.2,548.2 1285.5,538.7 1288.0,528.0 1289.8,519.8 1285.1,517.0 1278.2,511.5 1272.7,504.6 1271.0,496.0 1269.9,486.7 1271.3,470.0 1271.8,453.2"/><polygon points="1287.2,548.2 1305.0,556.0 1321.7,557.7 1323.5,564.0 1325.1,571.5 1324.5,583.0 1325.1,595.6 1328.5,603.0 1332.0,610.0 1334.0,619.0 1336.3,628.9 1338.9,632.4 1338.9,660.8 1326.0,662.8 1314.8,665.1 1309.5,668.5 1305.3,672.9 1305.3,655.6 1309.6,647.9 1318.2,635.8 1320.8,628.9 1314.8,620.3 1316.5,610.0 1314.0,605.0 1311.3,599.0 1302.0,596.0 1294.1,592.1 1290.0,585.0 1286.4,578.4 1289.5,573.5 1292.4,568.0 1291.0,562.0 1291.5,556.0 1287.2,548.2"/><polygon points="1300.5,449.5 1309.6,450.4 1325.1,447.0 1338.9,442.7 1351.0,443.5 1355.0,446.0 1359.6,450.4 1366.5,447.0 1376.8,448.7 1382.0,451.0 1388.9,453.9 1385.0,458.0 1380.2,462.5 1370.0,471.0 1371.6,478.4 1367.0,475.0 1362.0,472.5 1358.0,474.0 1352.7,475.0 1347.0,481.0 1344.0,486.5 1337.2,486.2 1331.0,488.5 1326.8,485.3 1321.7,487.9 1321.7,490.0 1310.0,489.0 1302.0,486.0 1298.9,482.5 1299.8,466.0 1300.5,449.5"/><polygon points="1408.7,450.4 1416.0,448.5 1425.0,447.0 1433.0,446.0 1442.3,445.2 1455.5,444.4 1462.0,442.0 1469.3,439.2 1477.0,444.0 1485.6,448.7 1507.0,452.0 1529.6,454.7 1531.5,459.0 1533.9,463.3 1541.6,475.0 1545.0,484.0 1546.8,492.2 1547.5,501.0 1546.8,509.5 1545.0,520.0 1541.6,531.8 1538.0,540.0 1533.0,547.4 1528.0,553.5 1522.7,559.4 1508.9,558.5 1495.1,556.8 1468.0,560.0 1442.3,562.9 1428.0,563.7 1415.6,564.6 1411.5,560.5 1407.8,556.8 1401.0,554.5 1394.0,552.5 1387.0,548.5 1380.2,543.9 1377.0,539.0 1373.4,534.4 1367.0,535.0 1361.3,535.3 1359.6,530.1 1352.0,528.5 1345.8,525.8 1342.0,521.0 1338.9,516.3 1336.0,512.0 1333.7,507.7 1326.8,505.1 1324.0,498.0 1321.7,490.0 1321.7,487.9 1326.8,485.3 1331.0,488.5 1337.2,486.2 1344.0,486.5 1347.0,481.0 1352.7,475.0 1358.0,474.0 1362.0,472.5 1367.0,475.0 1371.6,478.4 1370.0,471.0 1380.2,462.5 1385.0,458.0 1388.9,453.9 1398.0,452.5"/><polygon points="1321.7,490.0 1324.0,498.0 1326.8,505.1 1333.7,507.7 1336.0,512.0 1338.9,516.3 1342.0,521.0 1345.8,525.8 1352.0,528.5 1359.6,530.1 1361.3,535.3 1367.0,535.0 1373.4,534.4 1377.0,539.0 1380.2,543.9 1387.0,548.5 1394.0,552.5 1401.0,554.5 1407.8,556.8 1411.5,560.5 1415.6,564.6 1428.0,563.7 1442.3,562.9 1468.0,560.0 1495.1,556.8 1508.9,558.5 1522.7,559.4 1516.0,566.0 1508.9,573.2 1504.0,579.0 1500.3,585.2 1495.0,590.0 1490.0,594.7 1485.0,596.5 1481.3,597.3 1478.0,600.5 1477.0,604.2 1477.0,610.0 1479.0,616.0 1482.2,620.3 1486.5,626.0 1491.7,631.5 1500.0,635.0 1508.9,638.4 1513.5,640.5 1517.5,643.6 1519.5,647.0 1520.1,651.3 1519.0,658.0 1518.4,665.1 1516.0,669.0 1512.4,672.0 1508.0,673.8 1504.6,674.6 1503.0,679.5 1502.0,684.1 1499.0,688.0 1495.1,691.8 1490.5,698.0 1486.5,704.7 1484.0,707.5 1481.3,709.1 1476.5,710.0 1472.7,709.6 1469.0,707.0 1465.8,703.9 1462.0,699.0 1458.9,695.3 1455.5,696.0 1452.1,697.9 1446.0,704.0 1440.0,711.6 1435.4,718.5 1430.5,721.8 1425.0,723.7 1420.5,722.8 1416.4,720.2 1413.5,715.0 1413.0,709.9 1415.5,704.0 1418.1,699.6 1418.1,673.7 1416.5,669.0 1414.7,665.1 1411.5,660.5 1407.8,656.5 1400.0,653.0 1392.3,651.3 1366.5,655.6 1338.9,660.8 1338.9,632.4 1336.3,628.9 1334.0,619.0 1332.0,610.0 1328.5,603.0 1325.1,595.6 1324.5,583.0 1325.1,571.5 1323.5,564.0 1321.7,557.7 1317.0,550.0 1313.1,542.2 1310.5,534.0 1308.8,526.7 1309.6,518.1 1318.0,500.0"/><polygon points="1155.3,509.5 1159.6,508.6 1159.6,503.4 1155.1,502.7 1166.0,503.0 1176.5,502.7 1179.2,500.6 1183.0,502.0 1187.5,503.4 1194.0,505.5 1201.3,507.0 1224.5,507.0 1226.5,511.5 1230.5,515.0 1234.1,518.4 1235.4,525.0 1243.0,529.5 1252.6,533.6 1255.5,540.0 1257.8,547.4 1269.8,549.1 1287.2,548.2 1291.5,556.0 1291.0,562.0 1292.4,568.0 1289.5,573.5 1286.4,578.4 1290.0,585.0 1294.1,592.1 1302.0,596.0 1311.3,599.0 1314.0,605.0 1316.5,610.0 1314.8,620.3 1320.8,628.9 1318.2,635.8 1309.6,647.9 1305.3,655.6 1305.3,672.9 1295.8,678.9 1282.1,685.8 1270.0,689.2 1258.0,691.8 1245.7,694.4 1245.7,642.7 1249.0,637.0 1251.7,630.7 1252.0,623.0 1250.9,615.2 1243.1,610.0 1233.5,601.0 1225.0,592.1 1221.0,585.0 1216.4,578.4 1209.0,573.0 1202.6,568.0 1196.5,563.0 1190.6,557.7 1185.0,551.0 1180.2,543.9 1176.5,538.5 1173.4,533.6 1168.2,537.0 1160.4,537.9 1159.6,543.9 1138.9,543.9 1154.4,516.3"/><polygon points="1125.1,561.1 1138.9,543.9 1159.6,543.9 1160.4,537.9 1168.2,537.0 1173.4,533.6 1176.5,538.5 1180.2,543.9 1185.0,551.0 1190.6,557.7 1196.5,563.0 1202.6,568.0 1209.0,573.0 1216.4,578.4 1221.0,585.0 1225.0,592.1 1233.5,601.0 1243.1,610.0 1250.9,615.2 1252.0,623.0 1251.7,630.7 1249.0,637.0 1245.7,642.7 1245.7,694.4 1239.5,693.4 1233.7,691.8 1227.0,688.5 1220.7,685.5 1205.0,689.5 1190.6,693.5 1181.0,695.0 1171.6,696.1 1163.5,696.0 1156.1,695.3 1149.0,693.6 1142.4,691.0 1138.0,687.0 1134.6,682.4 1135.4,678.0 1138.0,673.5 1141.5,671.8 1145.7,670.1 1142.3,668.3 1131.0,666.7 1119.9,664.9 1114.0,661.5 1107.8,658.0 1097.0,656.3 1087.1,653.7 1081.0,648.8 1075.1,643.4 1075.4,623.5 1076.0,626.5 1077.7,628.7 1081.5,628.9 1085.4,627.9 1087.0,624.5 1088.9,621.0 1093.0,617.0 1097.5,612.4 1098.8,609.0 1100.1,605.5 1096.5,603.0 1093.2,600.3 1090.5,596.0 1088.9,591.7 1088.5,586.5 1089.7,581.3 1096.6,574.5 1106.1,568.4 1107.8,565.8 1116.0,563.5 1125.1,561.1"/></clipPath><g clip-path="url(#cp_all)">
<polyline points="1258.7,279.8 1269.0,277.5 1286.7,276.1 1304.5,273.9 1316.3,272.1" fill="none" stroke="#ababab" stroke-width="3.3" stroke-linejoin="round" stroke-linecap="round" />
<polyline points="1263.1,284.2 1279.4,282.7 1292.6,290.1 1304.5,284.2 1313.3,278.3 1319.2,287.1 1328.1,284.2 1342.8,281.2 1357.6,279.8" fill="none" stroke="#ababab" stroke-width="3.3" stroke-linejoin="round" stroke-linecap="round" />
<polyline points="1269.0,294.5 1280.8,303.4 1289.7,307.8 1301.5,304.8 1313.3,303.4 1328.1,303.4 1342.8,309.3 1351.7,319.6" fill="none" stroke="#ababab" stroke-width="3.3" stroke-linejoin="round" stroke-linecap="round" />
<polyline points="1289.7,307.8 1288.2,324.0 1286.7,335.8" fill="none" stroke="#ababab" stroke-width="3.3" stroke-linejoin="round" stroke-linecap="round" />
<polyline points="1289.7,307.8 1298.5,316.7 1313.3,324.0 1325.1,329.9 1339.9,327.0 1348.7,321.1" fill="none" stroke="#ababab" stroke-width="3.3" stroke-linejoin="round" stroke-linecap="round" />
<polyline points="1273.5,322.6 1283.8,315.2 1289.7,307.8" fill="none" stroke="#ababab" stroke-width="3.3" stroke-linejoin="round" stroke-linecap="round" />
<polyline points="1289.7,307.8 1292.6,294.5 1288.2,279.8 1288.2,272.1" fill="none" stroke="#ababab" stroke-width="3.3" stroke-linejoin="round" stroke-linecap="round" />
<polyline points="1304.5,273.9 1305.9,287.1 1313.3,303.4 1322.2,315.2 1332.5,321.1 1348.7,319.6" fill="none" stroke="#ababab" stroke-width="3.3" stroke-linejoin="round" stroke-linecap="round" />
<polyline points="1351.7,272.1 1353.2,287.1 1350.2,309.3 1348.7,321.1 1342.8,332.9 1341.3,344.7" fill="none" stroke="#ababab" stroke-width="3.3" stroke-linejoin="round" stroke-linecap="round" />
<polyline points="1357.6,279.8 1360.5,291.6 1356.1,301.9" fill="none" stroke="#ababab" stroke-width="3.3" stroke-linejoin="round" stroke-linecap="round" />
<polyline points="1316.3,272.1 1322.2,287.1 1331.0,275.3 1332.5,272.1" fill="none" stroke="#ababab" stroke-width="3.3" stroke-linejoin="round" stroke-linecap="round" />
<polyline points="1298.5,337.3 1310.4,331.4 1319.2,327.0 1328.1,322.6" fill="none" stroke="#ababab" stroke-width="3.3" stroke-linejoin="round" stroke-linecap="round" />
<polyline points="1274.9,309.3 1286.7,313.7 1298.5,316.7" fill="none" stroke="#ababab" stroke-width="3.3" stroke-linejoin="round" stroke-linecap="round" />
<polyline points="1277.9,335.8 1292.6,347.6 1304.5,360.9 1313.3,374.2 1319.2,385.0" fill="none" stroke="#ababab" stroke-width="3.3" stroke-linejoin="round" stroke-linecap="round" />
<polyline points="1319.2,344.7 1313.3,360.9 1307.4,377.2 1304.5,385.0" fill="none" stroke="#ababab" stroke-width="3.3" stroke-linejoin="round" stroke-linecap="round" />
<polyline points="1305.9,341.7 1307.4,360.9 1308.9,385.0" fill="none" stroke="#ababab" stroke-width="3.3" stroke-linejoin="round" stroke-linecap="round" />
<polyline points="1277.9,353.5 1292.6,356.5 1307.4,360.9 1325.1,355.0 1342.8,350.6" fill="none" stroke="#ababab" stroke-width="3.3" stroke-linejoin="round" stroke-linecap="round" />
<polyline points="1341.3,344.7 1342.8,360.9 1348.7,374.2 1354.6,385.0" fill="none" stroke="#ababab" stroke-width="3.3" stroke-linejoin="round" stroke-linecap="round" />
<polyline points="1277.9,368.3 1298.5,374.2 1313.3,374.2 1328.1,377.2 1342.8,371.3" fill="none" stroke="#ababab" stroke-width="3.3" stroke-linejoin="round" stroke-linecap="round" />
<polyline points="1325.1,355.0 1322.2,368.3 1319.2,385.0" fill="none" stroke="#ababab" stroke-width="3.3" stroke-linejoin="round" stroke-linecap="round" />
<polyline points="1286.7,335.8 1289.7,347.6 1298.5,359.5" fill="none" stroke="#ababab" stroke-width="3.3" stroke-linejoin="round" stroke-linecap="round" />
<polyline points="1225.9,272.1 1226.5,324.0 1230.7,353.5 1234.4,385.0" fill="none" stroke="#ababab" stroke-width="4.5" stroke-linejoin="round" stroke-linecap="round" />
<polyline points="1229.2,272.1 1230.7,294.5 1228.9,324.0 1232.1,353.5 1235.8,385.0" fill="none" stroke="#ababab" stroke-width="3.3" stroke-linejoin="round" stroke-linecap="round" />
<polyline points="1218.9,282.7 1239.5,281.2 1258.7,279.8" fill="none" stroke="#ababab" stroke-width="3.3" stroke-linejoin="round" stroke-linecap="round" />
<polyline points="1218.9,296.7 1236.6,294.5 1254.3,298.9 1264.6,300.4" fill="none" stroke="#ababab" stroke-width="3.3" stroke-linejoin="round" stroke-linecap="round" />
<polyline points="1218.9,309.3 1239.5,307.8 1254.3,312.2 1268.3,313.7" fill="none" stroke="#ababab" stroke-width="3.3" stroke-linejoin="round" stroke-linecap="round" />
<polyline points="1218.9,327.0 1239.5,324.0 1254.3,325.5 1273.5,324.0" fill="none" stroke="#ababab" stroke-width="3.3" stroke-linejoin="round" stroke-linecap="round" />
<polyline points="1239.5,272.1 1242.5,287.1 1236.6,309.3 1239.5,324.0 1236.6,338.8" fill="none" stroke="#ababab" stroke-width="3.3" stroke-linejoin="round" stroke-linecap="round" />
<polyline points="1246.9,279.8 1254.3,298.9 1251.3,313.7 1254.3,325.5 1255.7,338.8 1260.2,340.3" fill="none" stroke="#ababab" stroke-width="3.3" stroke-linejoin="round" stroke-linecap="round" />
<polyline points="1210.0,332.9 1218.9,327.0" fill="none" stroke="#ababab" stroke-width="3.3" stroke-linejoin="round" stroke-linecap="round" />
<polyline points="1218.9,355.0 1239.5,353.5 1257.2,356.5 1274.9,353.5" fill="none" stroke="#ababab" stroke-width="3.3" stroke-linejoin="round" stroke-linecap="round" />
<polyline points="1218.9,368.3 1236.6,366.8 1254.3,371.3 1274.9,368.3" fill="none" stroke="#ababab" stroke-width="3.3" stroke-linejoin="round" stroke-linecap="round" />
<polyline points="1239.5,353.5 1238.0,368.3 1239.5,385.0" fill="none" stroke="#ababab" stroke-width="3.3" stroke-linejoin="round" stroke-linecap="round" />
<polyline points="1257.2,356.5 1258.7,371.3 1257.2,385.0" fill="none" stroke="#ababab" stroke-width="3.3" stroke-linejoin="round" stroke-linecap="round" />
<polyline points="1218.9,380.1 1274.9,378.6" fill="none" stroke="#ababab" stroke-width="3.3" stroke-linejoin="round" stroke-linecap="round" />
<polyline points="1210.0,287.1 1218.9,282.7" fill="none" stroke="#ababab" stroke-width="3.3" stroke-linejoin="round" stroke-linecap="round" />
<polyline points="1210.0,298.9 1218.9,296.7" fill="none" stroke="#ababab" stroke-width="3.3" stroke-linejoin="round" stroke-linecap="round" />
<polyline points="1210.0,315.2 1218.9,309.3" fill="none" stroke="#ababab" stroke-width="3.3" stroke-linejoin="round" stroke-linecap="round" />
<polyline points="1120.1,272.8 1118.8,290.8 1116.2,307.6 1113.6,323.1 1111.0,335.4" fill="none" stroke="#ababab" stroke-width="3.3" stroke-linejoin="round" stroke-linecap="round" />
<polyline points="1152.4,272.8 1153.6,279.2 1144.6,288.3 1138.1,296.0 1129.1,307.6 1118.8,316.7 1105.8,327.0 1092.9,334.8" fill="none" stroke="#ababab" stroke-width="3.3" stroke-linejoin="round" stroke-linecap="round" />
<polyline points="1120.1,279.2 1138.1,276.6 1153.6,279.2" fill="none" stroke="#ababab" stroke-width="3.3" stroke-linejoin="round" stroke-linecap="round" />
<polyline points="1103.3,293.4 1118.8,290.8" fill="none" stroke="#ababab" stroke-width="3.3" stroke-linejoin="round" stroke-linecap="round" />
<polyline points="1098.1,307.6 1116.2,307.6 1129.1,307.6 1144.6,307.6 1157.5,316.7 1165.3,321.8" fill="none" stroke="#ababab" stroke-width="3.3" stroke-linejoin="round" stroke-linecap="round" />
<polyline points="1138.1,296.0 1152.4,287.0 1164.0,284.4 1173.0,288.3" fill="none" stroke="#ababab" stroke-width="3.3" stroke-linejoin="round" stroke-linecap="round" />
<polyline points="1113.6,323.1 1099.4,329.6" fill="none" stroke="#ababab" stroke-width="3.3" stroke-linejoin="round" stroke-linecap="round" />
<polyline points="1113.6,323.1 1131.7,332.2" fill="none" stroke="#ababab" stroke-width="3.3" stroke-linejoin="round" stroke-linecap="round" />
<polyline points="1129.1,307.6 1131.7,323.1 1131.7,333.5" fill="none" stroke="#ababab" stroke-width="3.3" stroke-linejoin="round" stroke-linecap="round" />
<polyline points="1144.6,307.6 1152.4,319.3 1162.7,332.2" fill="none" stroke="#ababab" stroke-width="3.3" stroke-linejoin="round" stroke-linecap="round" />
<polyline points="1086.5,327.0 1099.4,321.8 1113.6,323.1 1134.3,323.1 1152.4,324.4 1165.3,325.7" fill="none" stroke="#ababab" stroke-width="3.3" stroke-linejoin="round" stroke-linecap="round" />
<polyline points="1157.5,288.3 1160.1,297.3 1162.7,314.1 1165.3,325.7" fill="none" stroke="#ababab" stroke-width="3.3" stroke-linejoin="round" stroke-linecap="round" />
<polyline points="1176.9,272.8 1174.3,288.3 1170.4,296.0" fill="none" stroke="#ababab" stroke-width="3.3" stroke-linejoin="round" stroke-linecap="round" />
<polyline points="1193.7,272.8 1192.4,283.1 1198.9,289.5 1200.2,307.6 1201.4,327.0 1202.7,346.4" fill="none" stroke="#ababab" stroke-width="3.3" stroke-linejoin="round" stroke-linecap="round" />
<polyline points="1204.0,272.8 1200.2,283.1 1198.9,289.5" fill="none" stroke="#ababab" stroke-width="3.3" stroke-linejoin="round" stroke-linecap="round" />
<polyline points="1169.1,285.7 1180.8,288.3 1198.9,289.5 1209.2,288.3 1218.2,289.5" fill="none" stroke="#ababab" stroke-width="3.3" stroke-linejoin="round" stroke-linecap="round" />
<polyline points="1170.4,296.0 1183.4,292.1 1198.9,289.5" fill="none" stroke="#ababab" stroke-width="3.3" stroke-linejoin="round" stroke-linecap="round" />
<polyline points="1170.4,296.0 1173.0,307.6 1170.4,320.6 1178.2,320.6 1193.7,319.3" fill="none" stroke="#ababab" stroke-width="3.3" stroke-linejoin="round" stroke-linecap="round" />
<polyline points="1180.8,310.2 1196.3,308.9 1200.2,307.6" fill="none" stroke="#ababab" stroke-width="3.3" stroke-linejoin="round" stroke-linecap="round" />
<polyline points="1198.9,289.5 1206.6,302.5 1209.2,316.7 1207.9,337.4 1209.2,346.4" fill="none" stroke="#ababab" stroke-width="3.3" stroke-linejoin="round" stroke-linecap="round" />
<polyline points="1200.2,307.6 1218.2,310.2" fill="none" stroke="#ababab" stroke-width="3.3" stroke-linejoin="round" stroke-linecap="round" />
<polyline points="1193.7,319.3 1191.1,327.0 1183.4,333.5 1173.0,337.4 1162.7,342.5" fill="none" stroke="#ababab" stroke-width="3.3" stroke-linejoin="round" stroke-linecap="round" />
<polyline points="1183.4,333.5 1188.5,339.9 1202.7,342.5" fill="none" stroke="#ababab" stroke-width="3.3" stroke-linejoin="round" stroke-linecap="round" />
<polyline points="1201.4,327.0 1217.0,329.6" fill="none" stroke="#ababab" stroke-width="3.3" stroke-linejoin="round" stroke-linecap="round" />
<polyline points="1201.4,327.0 1218.2,321.8" fill="none" stroke="#ababab" stroke-width="3.3" stroke-linejoin="round" stroke-linecap="round" />
<polyline points="1170.4,320.6 1170.4,332.2 1162.7,337.4" fill="none" stroke="#ababab" stroke-width="3.3" stroke-linejoin="round" stroke-linecap="round" />
<polyline points="1091.6,337.4 1096.8,349.0 1103.3,360.6 1109.7,370.0" fill="none" stroke="#ababab" stroke-width="3.3" stroke-linejoin="round" stroke-linecap="round" />
<polyline points="1098.1,335.4 1105.8,349.0 1109.7,360.6 1113.6,370.0" fill="none" stroke="#ababab" stroke-width="3.3" stroke-linejoin="round" stroke-linecap="round" />
<polyline points="1111.0,335.4 1112.3,349.0 1111.0,360.6 1108.4,370.0" fill="none" stroke="#ababab" stroke-width="3.3" stroke-linejoin="round" stroke-linecap="round" />
<polyline points="1122.6,334.8 1121.3,347.7 1123.9,360.6 1125.2,370.0" fill="none" stroke="#ababab" stroke-width="3.3" stroke-linejoin="round" stroke-linecap="round" />
<polyline points="1144.6,333.5 1142.0,345.1 1140.7,355.4 1138.1,363.2" fill="none" stroke="#ababab" stroke-width="3.3" stroke-linejoin="round" stroke-linecap="round" />
<polyline points="1162.7,332.2 1154.9,342.5 1147.2,354.1 1140.7,363.2 1136.8,370.0" fill="none" stroke="#ababab" stroke-width="3.3" stroke-linejoin="round" stroke-linecap="round" />
<polyline points="1121.3,347.7 1131.7,350.3 1140.7,355.4" fill="none" stroke="#ababab" stroke-width="3.3" stroke-linejoin="round" stroke-linecap="round" />
<polyline points="1092.9,347.7 1100.7,346.4" fill="none" stroke="#ababab" stroke-width="3.3" stroke-linejoin="round" stroke-linecap="round" />
<polyline points="1156.2,347.7 1162.7,355.4 1170.4,360.6 1178.2,370.0" fill="none" stroke="#ababab" stroke-width="3.3" stroke-linejoin="round" stroke-linecap="round" />
<polyline points="1162.7,347.7 1165.3,355.4 1162.7,363.2 1157.5,370.0" fill="none" stroke="#ababab" stroke-width="3.3" stroke-linejoin="round" stroke-linecap="round" />
<polyline points="1180.8,347.7 1175.6,358.0 1170.4,370.0" fill="none" stroke="#ababab" stroke-width="3.3" stroke-linejoin="round" stroke-linecap="round" />
<polyline points="1191.1,347.7 1192.4,360.6 1193.7,370.0" fill="none" stroke="#ababab" stroke-width="3.3" stroke-linejoin="round" stroke-linecap="round" />
<polyline points="1202.7,346.4 1201.4,358.0 1202.7,370.0" fill="none" stroke="#ababab" stroke-width="3.3" stroke-linejoin="round" stroke-linecap="round" />
<polyline points="1209.2,346.4 1210.5,358.0 1213.1,370.0" fill="none" stroke="#ababab" stroke-width="3.3" stroke-linejoin="round" stroke-linecap="round" />
<polyline points="1152.4,364.5 1170.4,363.2 1192.4,363.2 1218.2,364.5" fill="none" stroke="#ababab" stroke-width="3.3" stroke-linejoin="round" stroke-linecap="round" />
<polyline points="1147.2,354.1 1157.5,355.4 1170.4,354.1 1180.8,347.7" fill="none" stroke="#ababab" stroke-width="3.3" stroke-linejoin="round" stroke-linecap="round" />
<polyline points="1089.8,340.0 1097.1,354.8 1104.5,369.5 1107.5,384.3 1113.4,393.1 1123.7,402.0 1134.0,410.8 1139.9,419.7 1144.4,428.5 1148.8,440.4 1151.7,452.2 1154.7,460.0" fill="none" stroke="#ababab" stroke-width="4.2" stroke-linejoin="round" stroke-linecap="round" />
<polyline points="1101.6,340.0 1106.0,354.8 1108.9,369.5 1108.9,384.3" fill="none" stroke="#ababab" stroke-width="3.3" stroke-linejoin="round" stroke-linecap="round" />
<polyline points="1113.4,340.0 1111.9,354.8 1110.4,369.5 1109.7,387.2" fill="none" stroke="#ababab" stroke-width="3.3" stroke-linejoin="round" stroke-linecap="round" />
<polyline points="1123.7,340.0 1122.2,353.3 1116.3,369.5 1111.9,385.7" fill="none" stroke="#ababab" stroke-width="3.3" stroke-linejoin="round" stroke-linecap="round" />
<polyline points="1137.0,340.0 1139.9,351.8 1134.0,365.1 1123.7,378.4 1110.4,388.7" fill="none" stroke="#ababab" stroke-width="3.3" stroke-linejoin="round" stroke-linecap="round" />
<polyline points="1104.5,388.0 1123.7,387.2 1142.9,385.7 1157.6,384.3" fill="none" stroke="#ababab" stroke-width="5.5" stroke-linejoin="round" stroke-linecap="round" />
<polyline points="1104.5,388.7 1097.1,399.0 1094.2,407.9 1101.6,409.4 1114.8,413.8 1117.8,418.2" fill="none" stroke="#ababab" stroke-width="3.3" stroke-linejoin="round" stroke-linecap="round" />
<polyline points="1108.9,390.2 1119.3,402.0 1125.2,410.8" fill="none" stroke="#ababab" stroke-width="3.5" stroke-linejoin="round" stroke-linecap="round" />
<polyline points="1123.7,387.2 1131.1,399.0 1137.0,409.4 1139.9,419.7" fill="none" stroke="#ababab" stroke-width="3.5" stroke-linejoin="round" stroke-linecap="round" />
<polyline points="1142.9,385.7 1139.9,396.1 1137.0,409.4" fill="none" stroke="#ababab" stroke-width="3.3" stroke-linejoin="round" stroke-linecap="round" />
<polyline points="1097.1,354.8 1119.3,357.7 1139.9,351.8" fill="none" stroke="#ababab" stroke-width="3.3" stroke-linejoin="round" stroke-linecap="round" />
<polyline points="1104.5,369.5 1123.7,368.0 1142.9,365.1" fill="none" stroke="#ababab" stroke-width="3.3" stroke-linejoin="round" stroke-linecap="round" />
<polyline points="1110.4,376.9 1134.0,375.4 1144.4,373.9" fill="none" stroke="#ababab" stroke-width="3.3" stroke-linejoin="round" stroke-linecap="round" />
<polyline points="1116.3,396.1 1131.1,393.1 1144.4,391.7 1157.6,402.0 1166.5,409.4" fill="none" stroke="#ababab" stroke-width="3.3" stroke-linejoin="round" stroke-linecap="round" />
<polyline points="1098.6,402.0 1113.4,402.0 1123.7,402.0" fill="none" stroke="#ababab" stroke-width="3.3" stroke-linejoin="round" stroke-linecap="round" />
<polyline points="1144.4,357.7 1157.6,344.4 1163.5,340.0" fill="none" stroke="#ababab" stroke-width="3.3" stroke-linejoin="round" stroke-linecap="round" />
<polyline points="1144.4,365.1 1145.8,385.7" fill="none" stroke="#ababab" stroke-width="3.5" stroke-linejoin="round" stroke-linecap="round" />
<polyline points="1101.6,390.2 1113.4,396.1 1125.2,404.9 1134.0,413.8" fill="none" stroke="#ababab" stroke-width="4" stroke-linejoin="round" stroke-linecap="round" />
<polyline points="1145.8,366.6 1163.5,368.0 1181.3,369.5 1199.0,366.6 1216.7,363.6" fill="none" stroke="#ababab" stroke-width="3.3" stroke-linejoin="round" stroke-linecap="round" />
<polyline points="1157.6,384.3 1178.3,382.8 1193.1,381.3 1216.7,387.2 1222.6,388.7" fill="none" stroke="#ababab" stroke-width="4" stroke-linejoin="round" stroke-linecap="round" />
<polyline points="1145.8,375.4 1157.6,376.9 1169.5,378.4 1187.2,376.9 1216.7,375.4" fill="none" stroke="#ababab" stroke-width="3.3" stroke-linejoin="round" stroke-linecap="round" />
<polyline points="1151.7,347.4 1157.6,357.7 1163.5,368.0 1166.5,384.3 1165.0,399.0 1166.5,409.4" fill="none" stroke="#ababab" stroke-width="3.3" stroke-linejoin="round" stroke-linecap="round" />
<polyline points="1169.5,347.4 1172.4,359.2 1178.3,369.5 1181.3,382.8" fill="none" stroke="#ababab" stroke-width="3.3" stroke-linejoin="round" stroke-linecap="round" />
<polyline points="1181.3,347.4 1182.7,359.2 1184.2,369.5" fill="none" stroke="#ababab" stroke-width="3.3" stroke-linejoin="round" stroke-linecap="round" />
<polyline points="1193.1,347.4 1193.1,366.6 1193.1,381.3" fill="none" stroke="#ababab" stroke-width="3.3" stroke-linejoin="round" stroke-linecap="round" />
<polyline points="1204.9,347.4 1206.3,357.7 1203.4,366.6" fill="none" stroke="#ababab" stroke-width="3.3" stroke-linejoin="round" stroke-linecap="round" />
<polyline points="1157.6,357.7 1172.4,359.2 1193.1,356.2 1216.7,354.8" fill="none" stroke="#ababab" stroke-width="3.3" stroke-linejoin="round" stroke-linecap="round" />
<polyline points="1181.3,382.8 1184.2,396.1 1181.3,406.4 1176.8,413.8 1178.3,422.6 1184.2,428.5" fill="none" stroke="#ababab" stroke-width="3.3" stroke-linejoin="round" stroke-linecap="round" />
<polyline points="1193.1,381.3 1188.6,393.1 1187.2,404.9 1190.1,413.8 1199.0,412.3 1207.8,409.4 1213.7,404.9 1212.2,399.0 1206.3,399.0" fill="none" stroke="#ababab" stroke-width="3.3" stroke-linejoin="round" stroke-linecap="round" />
<polyline points="1166.5,399.0 1184.2,396.1 1201.9,393.1 1216.7,390.2" fill="none" stroke="#ababab" stroke-width="3.3" stroke-linejoin="round" stroke-linecap="round" />
<polyline points="1181.3,406.4 1196.0,403.5 1207.8,402.0" fill="none" stroke="#ababab" stroke-width="3.3" stroke-linejoin="round" stroke-linecap="round" />
<polyline points="1176.8,413.8 1187.2,419.7 1196.0,422.6 1204.9,428.5" fill="none" stroke="#ababab" stroke-width="3.3" stroke-linejoin="round" stroke-linecap="round" />
<polyline points="1157.6,402.0 1169.5,403.5 1181.3,406.4" fill="none" stroke="#ababab" stroke-width="3.3" stroke-linejoin="round" stroke-linecap="round" />
<polyline points="1134.0,410.8 1141.4,422.6 1151.7,428.5 1163.5,431.5 1175.4,434.5" fill="none" stroke="#ababab" stroke-width="3.5" stroke-linejoin="round" stroke-linecap="round" />
<polyline points="1139.9,419.7 1154.7,419.7 1166.5,422.6" fill="none" stroke="#ababab" stroke-width="3.5" stroke-linejoin="round" stroke-linecap="round" />
<polyline points="1144.4,428.5 1131.1,434.5 1125.2,443.3" fill="none" stroke="#ababab" stroke-width="3.3" stroke-linejoin="round" stroke-linecap="round" />
<polyline points="1134.0,434.5 1145.8,443.3 1157.6,449.2 1169.5,452.2" fill="none" stroke="#ababab" stroke-width="3.5" stroke-linejoin="round" stroke-linecap="round" />
<polyline points="1148.8,440.4 1163.5,440.4 1175.4,443.3 1184.2,452.2" fill="none" stroke="#ababab" stroke-width="3.3" stroke-linejoin="round" stroke-linecap="round" />
<polyline points="1137.0,443.3 1139.9,452.2 1142.9,460.0" fill="none" stroke="#ababab" stroke-width="3.3" stroke-linejoin="round" stroke-linecap="round" />
<polyline points="1154.7,413.8 1157.6,428.5 1159.1,443.3 1157.6,460.0" fill="none" stroke="#ababab" stroke-width="3.5" stroke-linejoin="round" stroke-linecap="round" />
<polyline points="1163.5,416.7 1163.5,431.5 1165.0,443.3 1166.5,460.0" fill="none" stroke="#ababab" stroke-width="3.3" stroke-linejoin="round" stroke-linecap="round" />
<polyline points="1126.7,452.2 1141.4,449.2 1157.6,449.2" fill="none" stroke="#ababab" stroke-width="3.3" stroke-linejoin="round" stroke-linecap="round" />
<polyline points="1131.1,422.6 1141.4,422.6" fill="none" stroke="#ababab" stroke-width="3.3" stroke-linejoin="round" stroke-linecap="round" />
<polyline points="1169.5,422.6 1170.9,434.5 1175.4,443.3" fill="none" stroke="#ababab" stroke-width="3.3" stroke-linejoin="round" stroke-linecap="round" />
<polyline points="1138.5,428.5 1151.7,434.5 1160.6,443.3" fill="none" stroke="#ababab" stroke-width="3.3" stroke-linejoin="round" stroke-linecap="round" />
<polyline points="1230.8,330.0 1231.4,354.6 1233.2,379.2 1236.9,387.8 1241.8,396.4 1245.5,410.0 1247.4,430.0" fill="none" stroke="#ababab" stroke-width="5" stroke-linejoin="round" stroke-linecap="round" />
<polyline points="1235.1,352.1 1235.7,381.7" fill="none" stroke="#ababab" stroke-width="4" stroke-linejoin="round" stroke-linecap="round" />
<polyline points="1200.0,377.4 1218.5,377.4 1236.9,377.4 1261.5,378.0 1276.3,378.6 1286.1,380.4 1300.0,382.9" fill="none" stroke="#ababab" stroke-width="4.5" stroke-linejoin="round" stroke-linecap="round" />
<polyline points="1200.0,380.4 1218.5,380.4 1240.6,380.4 1261.5,381.0 1276.3,381.7" fill="none" stroke="#ababab" stroke-width="3.5" stroke-linejoin="round" stroke-linecap="round" />
<polyline points="1218.5,389.0 1236.9,389.7 1251.7,389.0 1264.0,390.9 1276.3,390.3 1300.0,391.5" fill="none" stroke="#ababab" stroke-width="3.3" stroke-linejoin="round" stroke-linecap="round" />
<polyline points="1218.5,369.4 1230.8,369.4 1244.3,370.6 1259.0,369.4 1276.3,370.6" fill="none" stroke="#ababab" stroke-width="3.3" stroke-linejoin="round" stroke-linecap="round" />
<polyline points="1218.5,359.5 1230.8,360.8 1240.6,359.5" fill="none" stroke="#ababab" stroke-width="3.3" stroke-linejoin="round" stroke-linecap="round" />
<polyline points="1218.5,352.1 1228.3,353.4 1236.9,354.6 1249.2,353.4 1264.0,354.6 1276.3,353.4" fill="none" stroke="#ababab" stroke-width="3.3" stroke-linejoin="round" stroke-linecap="round" />
<polyline points="1240.6,359.5 1244.3,370.6 1245.5,380.4" fill="none" stroke="#ababab" stroke-width="3.3" stroke-linejoin="round" stroke-linecap="round" />
<polyline points="1249.2,353.4 1246.7,362.0 1240.6,370.6 1236.9,378.0" fill="none" stroke="#ababab" stroke-width="3.3" stroke-linejoin="round" stroke-linecap="round" />
<polyline points="1264.0,354.6 1259.0,362.0 1257.8,370.6 1259.0,378.0 1264.0,389.0" fill="none" stroke="#ababab" stroke-width="3.3" stroke-linejoin="round" stroke-linecap="round" />
<polyline points="1254.1,330.0 1252.9,337.4 1257.8,338.6 1259.0,342.3" fill="none" stroke="#ababab" stroke-width="3.3" stroke-linejoin="round" stroke-linecap="round" />
<polyline points="1222.1,354.6 1224.6,366.9 1225.8,379.2" fill="none" stroke="#ababab" stroke-width="3.3" stroke-linejoin="round" stroke-linecap="round" />
<polyline points="1228.3,353.4 1229.5,377.4" fill="none" stroke="#ababab" stroke-width="3.2" stroke-linejoin="round" stroke-linecap="round" />
<polyline points="1278.7,342.3 1286.1,352.1 1293.5,362.0 1300.0,366.9" fill="none" stroke="#ababab" stroke-width="3.3" stroke-linejoin="round" stroke-linecap="round" />
<polyline points="1278.7,354.6 1288.6,366.9 1295.9,376.7 1300.0,379.2" fill="none" stroke="#ababab" stroke-width="3.3" stroke-linejoin="round" stroke-linecap="round" />
<polyline points="1281.2,333.7 1288.6,342.3 1300.0,349.7" fill="none" stroke="#ababab" stroke-width="3.3" stroke-linejoin="round" stroke-linecap="round" />
<polyline points="1286.1,380.4 1291.0,391.5 1292.3,403.8" fill="none" stroke="#ababab" stroke-width="3.3" stroke-linejoin="round" stroke-linecap="round" />
<polyline points="1377.0,385.7 1371.7,398.7 1366.5,409.1 1365.2,419.6 1361.3,428.7 1356.1,437.8 1350.9,444.3 1345.6,453.5 1337.8,463.9 1327.4,476.0" fill="none" stroke="#ababab" stroke-width="5" stroke-linejoin="round" stroke-linecap="round" />
<polyline points="1366.5,419.6 1363.9,430.0 1358.7,440.4 1353.5,448.3" fill="none" stroke="#ababab" stroke-width="4" stroke-linejoin="round" stroke-linecap="round" />
<polyline points="1366.5,419.6 1374.3,420.2 1387.4,420.2" fill="none" stroke="#ababab" stroke-width="5" stroke-linejoin="round" stroke-linecap="round" />
<polyline points="1365.2,419.6 1369.1,430.0 1377.0,436.5 1391.3,433.9" fill="none" stroke="#ababab" stroke-width="3.5" stroke-linejoin="round" stroke-linecap="round" />
<polyline points="1377.0,436.5 1371.7,444.3 1366.5,453.5 1361.3,463.9 1353.5,473.0 1348.3,476.0" fill="none" stroke="#ababab" stroke-width="3.5" stroke-linejoin="round" stroke-linecap="round" />
<polyline points="1366.5,409.1 1353.5,407.8 1337.8,409.1 1322.2,405.2 1309.1,400.0 1296.1,393.5 1283.0,387.0 1270.0,383.0" fill="none" stroke="#ababab" stroke-width="4" stroke-linejoin="round" stroke-linecap="round" />
<polyline points="1365.2,419.6 1350.9,417.0 1335.2,413.0 1319.6,409.1 1303.9,402.6" fill="none" stroke="#ababab" stroke-width="3.2" stroke-linejoin="round" stroke-linecap="round" />
<polyline points="1365.2,422.2 1353.5,422.2 1343.0,418.3 1330.0,419.6 1330.0,422.2" fill="none" stroke="#ababab" stroke-width="3.2" stroke-linejoin="round" stroke-linecap="round" />
<polyline points="1361.3,428.7 1350.9,424.8 1348.3,427.4" fill="none" stroke="#ababab" stroke-width="3.3" stroke-linejoin="round" stroke-linecap="round" />
<polyline points="1337.8,409.1 1332.6,417.0 1330.0,422.2" fill="none" stroke="#ababab" stroke-width="3.3" stroke-linejoin="round" stroke-linecap="round" />
<polyline points="1270.0,377.8 1285.7,379.1 1303.9,381.7 1314.3,377.8 1324.8,372.6 1330.0,370.0" fill="none" stroke="#ababab" stroke-width="3.2" stroke-linejoin="round" stroke-linecap="round" />
<polyline points="1303.9,381.7 1306.5,393.5 1309.1,400.0" fill="none" stroke="#ababab" stroke-width="3.3" stroke-linejoin="round" stroke-linecap="round" />
<polyline points="1296.1,370.0 1303.9,381.7" fill="none" stroke="#ababab" stroke-width="3.3" stroke-linejoin="round" stroke-linecap="round" />
<polyline points="1314.3,370.0 1314.3,377.8 1313.0,387.0 1309.1,400.0" fill="none" stroke="#ababab" stroke-width="3.3" stroke-linejoin="round" stroke-linecap="round" />
<polyline points="1270.0,390.9 1283.0,396.1 1292.2,400.0 1292.2,405.2" fill="none" stroke="#ababab" stroke-width="3.3" stroke-linejoin="round" stroke-linecap="round" />
<polyline points="1343.0,370.0 1348.3,380.4 1353.5,387.0 1356.1,383.0 1353.5,377.8 1348.3,370.0" fill="none" stroke="#ababab" stroke-width="3.3" stroke-linejoin="round" stroke-linecap="round" />
<polyline points="1324.8,372.6 1335.2,375.2 1348.3,380.4" fill="none" stroke="#ababab" stroke-width="3.3" stroke-linejoin="round" stroke-linecap="round" />
<polyline points="1366.5,409.1 1363.9,398.7 1361.3,389.6 1354.8,383.0" fill="none" stroke="#ababab" stroke-width="3.3" stroke-linejoin="round" stroke-linecap="round" />
<polyline points="1337.8,409.1 1343.0,398.7 1348.3,396.1 1353.5,387.0" fill="none" stroke="#ababab" stroke-width="3.3" stroke-linejoin="round" stroke-linecap="round" />
<polyline points="1280.4,370.0 1283.0,387.0" fill="none" stroke="#ababab" stroke-width="3.3" stroke-linejoin="round" stroke-linecap="round" />
<polyline points="1361.3,413.0 1369.1,414.3 1366.5,424.8 1360.0,422.2" fill="none" stroke="#ababab" stroke-width="6" stroke-linejoin="round" stroke-linecap="round" />
<polyline points="1135.1,415.2 1140.6,427.6 1146.2,441.3 1148.9,455.1 1146.2,466.2 1140.6,471.7 1132.4,477.2 1126.9,485.4" fill="none" stroke="#ababab" stroke-width="4" stroke-linejoin="round" stroke-linecap="round" />
<polyline points="1143.4,413.8 1151.7,427.6 1157.2,441.3 1159.9,455.1 1157.2,460.6" fill="none" stroke="#ababab" stroke-width="3.5" stroke-linejoin="round" stroke-linecap="round" />
<polyline points="1154.4,413.8 1159.9,427.6 1162.7,441.3 1165.4,452.4 1176.5,455.1 1184.7,457.9 1198.5,457.9 1217.8,460.6 1239.9,462.0" fill="none" stroke="#ababab" stroke-width="4.5" stroke-linejoin="round" stroke-linecap="round" />
<polyline points="1129.6,433.1 1146.2,431.7 1162.7,433.1 1171.0,435.8" fill="none" stroke="#ababab" stroke-width="3.5" stroke-linejoin="round" stroke-linecap="round" />
<polyline points="1126.9,441.3 1143.4,440.0 1162.7,441.3" fill="none" stroke="#ababab" stroke-width="3.5" stroke-linejoin="round" stroke-linecap="round" />
<polyline points="1125.5,452.4 1140.6,449.6 1157.2,448.2 1165.4,452.4" fill="none" stroke="#ababab" stroke-width="3.5" stroke-linejoin="round" stroke-linecap="round" />
<polyline points="1121.3,460.6 1137.9,459.3 1148.9,455.1" fill="none" stroke="#ababab" stroke-width="3.5" stroke-linejoin="round" stroke-linecap="round" />
<polyline points="1137.9,417.9 1162.7,419.3 1168.2,424.8" fill="none" stroke="#ababab" stroke-width="3.5" stroke-linejoin="round" stroke-linecap="round" />
<polyline points="1165.4,441.3 1176.5,448.2 1184.7,457.9" fill="none" stroke="#ababab" stroke-width="3.3" stroke-linejoin="round" stroke-linecap="round" />
<polyline points="1140.6,427.6 1135.1,441.3 1129.6,455.1 1122.7,464.8" fill="none" stroke="#ababab" stroke-width="3.5" stroke-linejoin="round" stroke-linecap="round" />
<polyline points="1137.9,424.8 1151.7,435.8 1157.2,449.6" fill="none" stroke="#ababab" stroke-width="3.5" stroke-linejoin="round" stroke-linecap="round" />
<polyline points="1157.2,460.6 1162.7,468.9 1165.4,477.2 1168.2,485.4 1176.5,489.6 1190.3,488.2 1198.5,482.7 1199.9,471.7 1198.5,464.8" fill="none" stroke="#ababab" stroke-width="3.3" stroke-linejoin="round" stroke-linecap="round" />
<polyline points="1148.9,477.2 1157.2,485.4 1168.2,491.0 1184.7,492.3 1195.8,496.5 1199.9,504.7" fill="none" stroke="#ababab" stroke-width="3.3" stroke-linejoin="round" stroke-linecap="round" />
<polyline points="1184.7,457.9 1190.3,466.2 1198.5,464.8" fill="none" stroke="#ababab" stroke-width="3.3" stroke-linejoin="round" stroke-linecap="round" />
<polyline points="1168.2,485.4 1176.5,479.9 1190.3,478.6 1198.5,482.7" fill="none" stroke="#ababab" stroke-width="3.3" stroke-linejoin="round" stroke-linecap="round" />
<polyline points="1187.5,503.4 1190.3,496.5 1195.8,496.5" fill="none" stroke="#ababab" stroke-width="3.3" stroke-linejoin="round" stroke-linecap="round" />
<polyline points="1126.9,485.4 1121.3,477.2 1114.5,477.2 1107.6,482.7 1103.4,491.0 1107.6,496.5" fill="none" stroke="#ababab" stroke-width="3.3" stroke-linejoin="round" stroke-linecap="round" />
<polyline points="1132.4,477.2 1135.1,485.4 1132.4,493.7 1125.5,499.2 1121.3,507.5" fill="none" stroke="#ababab" stroke-width="3.3" stroke-linejoin="round" stroke-linecap="round" />
<polyline points="1114.5,477.2 1121.3,485.4 1126.9,485.4 1137.9,488.2 1144.8,482.7" fill="none" stroke="#ababab" stroke-width="3.3" stroke-linejoin="round" stroke-linecap="round" />
<polyline points="1107.6,482.7 1115.8,488.2 1125.5,489.6" fill="none" stroke="#ababab" stroke-width="3.3" stroke-linejoin="round" stroke-linecap="round" />
<polyline points="1097.9,488.2 1103.4,491.0" fill="none" stroke="#ababab" stroke-width="3.3" stroke-linejoin="round" stroke-linecap="round" />
<polyline points="1125.5,499.2 1135.1,502.0 1142.0,510.3" fill="none" stroke="#ababab" stroke-width="3.3" stroke-linejoin="round" stroke-linecap="round" />
<polyline points="1198.5,457.9 1204.0,466.2 1217.8,468.9 1239.9,467.5" fill="none" stroke="#ababab" stroke-width="5" stroke-linejoin="round" stroke-linecap="round" />
<polyline points="1204.0,477.2 1217.8,477.2 1231.6,474.4 1239.9,474.4" fill="none" stroke="#ababab" stroke-width="3.5" stroke-linejoin="round" stroke-linecap="round" />
<polyline points="1199.9,471.7 1210.9,471.7 1223.3,468.9" fill="none" stroke="#ababab" stroke-width="3.5" stroke-linejoin="round" stroke-linecap="round" />
<polyline points="1190.0,460.5 1214.8,461.2 1238.2,463.2 1252.0,479.8 1267.2,486.7 1297.5,486.7 1314.0,492.2 1322.3,497.7" fill="none" stroke="#adadad" stroke-width="8" stroke-linejoin="round" stroke-linecap="round" />
<polyline points="1190.0,467.4 1217.6,470.1 1235.5,474.3 1249.3,483.9 1267.2,490.1 1286.5,489.4" fill="none" stroke="#adadad" stroke-width="5" stroke-linejoin="round" stroke-linecap="round" />
<polyline points="1221.7,481.2 1235.5,479.8 1250.6,486.7" fill="none" stroke="#adadad" stroke-width="4" stroke-linejoin="round" stroke-linecap="round" />
<polyline points="1231.3,477.7 1247.9,489.4 1267.2,492.2 1286.5,493.6 1300.3,497.7" fill="none" stroke="#adadad" stroke-width="4.5" stroke-linejoin="round" stroke-linecap="round" />
<polyline points="1278.2,475.6 1278.2,486.7" fill="none" stroke="#adadad" stroke-width="4" stroke-linejoin="round" stroke-linecap="round" />
<polyline points="1297.5,486.7 1308.5,483.9 1319.5,479.8 1330.6,474.3 1341.6,463.2 1349.9,449.5" fill="none" stroke="#adadad" stroke-width="4" stroke-linejoin="round" stroke-linecap="round" />
<polyline points="1314.0,492.2 1325.1,489.4 1336.1,486.7 1349.9,474.3" fill="none" stroke="#adadad" stroke-width="4.5" stroke-linejoin="round" stroke-linecap="round" />
<polyline points="1303.0,492.2 1314.0,500.4 1319.5,511.5 1318.2,522.5" fill="none" stroke="#adadad" stroke-width="5" stroke-linejoin="round" stroke-linecap="round" />
<polyline points="1322.3,497.7 1333.3,503.2 1338.8,511.5" fill="none" stroke="#adadad" stroke-width="5" stroke-linejoin="round" stroke-linecap="round" />
<polyline points="1267.2,492.2 1261.7,503.2 1250.6,511.5 1242.4,519.7 1236.9,527.0" fill="none" stroke="#adadad" stroke-width="3.5" stroke-linejoin="round" stroke-linecap="round" />
<polyline points="1250.6,511.5 1256.2,519.7" fill="none" stroke="#adadad" stroke-width="3" stroke-linejoin="round" stroke-linecap="round" />
<polyline points="1300.3,497.7 1301.6,511.5 1297.5,527.0" fill="none" stroke="#adadad" stroke-width="4" stroke-linejoin="round" stroke-linecap="round" />
<polyline points="1308.5,503.2 1311.3,514.2 1314.0,527.0" fill="none" stroke="#adadad" stroke-width="3.5" stroke-linejoin="round" stroke-linecap="round" />
<polyline points="1190.0,479.8 1201.0,486.7 1198.3,497.7 1190.0,500.4" fill="none" stroke="#adadad" stroke-width="3" stroke-linejoin="round" stroke-linecap="round" />
<polyline points="1247.2,409.5 1246.5,415.0 1244.4,435.7 1241.0,449.5 1238.2,461.9" fill="none" stroke="#ababab" stroke-width="4.5" stroke-linejoin="round" stroke-linecap="round" />
<polyline points="1125.1,554.2 1135.5,550.8 1152.7,547.4 1166.5,543.9 1180.2,543.9 1200.9,547.4 1214.7,543.9 1225.0,533.6 1231.9,523.2 1235.4,509.5" fill="none" stroke="#ababab" stroke-width="3.5" stroke-linejoin="round" stroke-linecap="round" />
<polyline points="1126.8,547.4 1138.9,531.8 1149.2,519.8 1159.6,514.6 1173.4,506.0 1187.1,500.8" fill="none" stroke="#ababab" stroke-width="3" stroke-linejoin="round" stroke-linecap="round" />
<polyline points="1121.7,556.0 1126.8,540.5 1132.0,526.7 1138.9,519.8 1149.2,519.8" fill="none" stroke="#ababab" stroke-width="3" stroke-linejoin="round" stroke-linecap="round" />
<polyline points="1142.4,552.5 1145.8,561.1 1159.6,568.0 1173.4,574.9 1187.1,573.2" fill="none" stroke="#ababab" stroke-width="3.4" stroke-linejoin="round" stroke-linecap="round" />
<polyline points="1166.5,514.6 1163.0,526.7 1156.1,537.0 1152.7,543.9" fill="none" stroke="#ababab" stroke-width="3.4" stroke-linejoin="round" stroke-linecap="round" />
<polyline points="1175.1,507.7 1173.4,523.2 1173.4,533.6 1173.4,547.4 1176.8,557.7 1187.1,568.0 1192.3,573.2" fill="none" stroke="#ababab" stroke-width="3" stroke-linejoin="round" stroke-linecap="round" />
<polyline points="1187.1,500.8 1190.6,509.5 1204.4,514.6 1213.0,519.8 1218.1,530.1 1218.1,540.5 1216.4,550.8" fill="none" stroke="#ababab" stroke-width="3" stroke-linejoin="round" stroke-linecap="round" />
<polyline points="1173.4,526.7 1187.1,533.6 1200.9,538.7 1214.7,543.9" fill="none" stroke="#ababab" stroke-width="3" stroke-linejoin="round" stroke-linecap="round" />
<polyline points="1180.2,543.9 1190.6,557.7 1197.5,568.0 1207.8,578.4 1218.1,587.0 1228.5,595.6 1238.8,605.9 1249.2,615.1" fill="none" stroke="#ababab" stroke-width="4" stroke-linejoin="round" stroke-linecap="round" />
<polyline points="1192.3,573.2 1197.5,581.8 1195.8,595.6 1190.6,605.9 1188.9,615.1" fill="none" stroke="#ababab" stroke-width="3" stroke-linejoin="round" stroke-linecap="round" />
<polyline points="1190.6,573.2 1183.7,585.2 1182.0,599.0 1176.8,609.4 1173.4,615.1" fill="none" stroke="#ababab" stroke-width="3" stroke-linejoin="round" stroke-linecap="round" />
<polyline points="1200.9,571.5 1207.8,581.8 1213.0,592.1 1211.3,602.5 1207.8,615.1" fill="none" stroke="#ababab" stroke-width="3" stroke-linejoin="round" stroke-linecap="round" />
<polyline points="1204.4,568.0 1218.1,578.4 1221.6,592.1 1218.1,602.5 1214.7,615.1" fill="none" stroke="#ababab" stroke-width="3" stroke-linejoin="round" stroke-linecap="round" />
<polyline points="1216.4,550.8 1225.0,564.6 1235.4,571.5 1252.6,573.2 1259.5,581.8 1269.8,595.6" fill="none" stroke="#ababab" stroke-width="4" stroke-linejoin="round" stroke-linecap="round" />
<polyline points="1218.1,543.9 1231.9,549.1 1235.4,547.4" fill="none" stroke="#ababab" stroke-width="3.4" stroke-linejoin="round" stroke-linecap="round" />
<polyline points="1200.9,547.4 1204.4,557.7 1200.9,568.0" fill="none" stroke="#ababab" stroke-width="3" stroke-linejoin="round" stroke-linecap="round" />
<polyline points="1242.3,509.5 1238.8,519.8 1242.3,526.7" fill="none" stroke="#ababab" stroke-width="3.4" stroke-linejoin="round" stroke-linecap="round" />
<polyline points="1169.9,550.8 1183.7,557.7 1194.0,564.6" fill="none" stroke="#ababab" stroke-width="3" stroke-linejoin="round" stroke-linecap="round" />
<polyline points="1135.5,509.5 1142.4,512.9 1138.9,518.1" fill="none" stroke="#ababab" stroke-width="3.4" stroke-linejoin="round" stroke-linecap="round" />
<polyline points="1130.3,504.3 1138.9,506.0 1145.8,509.5 1151.0,518.1" fill="none" stroke="#ababab" stroke-width="3.4" stroke-linejoin="round" stroke-linecap="round" />
<polyline points="1176.8,557.7 1183.7,564.6 1194.0,571.5 1200.9,571.5" fill="none" stroke="#ababab" stroke-width="5" stroke-linejoin="round" stroke-linecap="round" />
<polyline points="1176.8,610.0 1168.2,623.8" fill="none" stroke="#ababab" stroke-width="3" stroke-linejoin="round" stroke-linecap="round" />
<polyline points="1190.6,610.0 1194.0,627.2 1200.9,641.0" fill="none" stroke="#ababab" stroke-width="3" stroke-linejoin="round" stroke-linecap="round" />
<polyline points="1207.8,610.0 1206.1,627.2 1200.9,641.0" fill="none" stroke="#ababab" stroke-width="3" stroke-linejoin="round" stroke-linecap="round" />
<polyline points="1214.7,610.0 1211.3,616.9" fill="none" stroke="#ababab" stroke-width="3" stroke-linejoin="round" stroke-linecap="round" />
<polyline points="1247.6,603.1 1259.7,599.7 1270.0,610.0 1276.9,627.2 1283.8,641.0 1287.2,654.8 1286.4,668.6" fill="none" stroke="#b0b0b0" stroke-width="3.5" stroke-linejoin="round" stroke-linecap="round" />
<polyline points="1287.2,660.0 1304.5,653.1 1314.8,647.9 1325.1,642.7 1328.6,638.4" fill="none" stroke="#b0b0b0" stroke-width="3.5" stroke-linejoin="round" stroke-linecap="round" />
<polyline points="1392.3,614.3 1404.4,620.3 1414.7,622.9 1421.6,619.5 1431.9,627.2 1438.8,636.7" fill="none" stroke="#b0b0b0" stroke-width="4" stroke-linejoin="round" stroke-linecap="round" />
<polyline points="1326.8,509.5 1318.2,519.8 1315.7,531.8 1325.1,552.5 1335.5,561.1 1352.7,568.0 1366.5,580.1 1380.2,595.6 1390.6,600.8 1397.5,612.8 1400.9,618.0" fill="none" stroke="#b1aeb6" stroke-width="6.5" stroke-linejoin="round" stroke-linecap="round" />
<polyline points="1302.7,514.6 1301.0,531.8 1297.6,540.5 1301.0,552.5" fill="none" stroke="#b1aeb6" stroke-width="5" stroke-linejoin="round" stroke-linecap="round" />
<polyline points="1304.5,497.4 1321.7,500.8 1332.0,509.5 1342.4,516.3 1359.6,526.7" fill="none" stroke="#b1aeb6" stroke-width="6" stroke-linejoin="round" stroke-linecap="round" />
<polyline points="1321.7,500.8 1326.8,509.5" fill="none" stroke="#b1aeb6" stroke-width="5" stroke-linejoin="round" stroke-linecap="round" />
<polyline points="1326.8,552.5 1335.5,561.1 1352.7,568.0 1366.5,580.1 1373.4,587.0" fill="none" stroke="#c9c4cc" stroke-width="1.2" stroke-linejoin="round" stroke-linecap="round" />
<polyline clip-path="url(#cp_TA)" points="1244.7,343.7 1240.5,332.6 1236.6,322.7 1230.3,315.2 1221.4,310.2 1214.8,301.7 1209.7,293.8 1203.1,284.4 1198.3,274.8" fill="none" stroke="#ababab" stroke-width="2.9" stroke-linejoin="round" stroke-linecap="round"/>
<polyline clip-path="url(#cp_TA)" points="1220.1,384.6 1231.9,387.2 1242.4,389.8 1253.1,392.3 1261.6,394.0 1271.6,402.3 1277.3,412.0" fill="none" stroke="#ababab" stroke-width="2.9" stroke-linejoin="round" stroke-linecap="round"/>
<polyline clip-path="url(#cp_TA)" points="1236.6,301.4 1227.4,303.3 1218.2,302.0 1208.2,295.1 1200.0,294.3 1191.4,289.5 1186.3,281.7 1177.2,275.9 1171.5,269.4" fill="none" stroke="#ababab" stroke-width="2.9" stroke-linejoin="round" stroke-linecap="round"/>
<polyline clip-path="url(#cp_TA)" points="1223.1,314.6 1221.9,303.4 1216.4,295.3 1210.1,286.2 1202.1,280.1" fill="none" stroke="#ababab" stroke-width="2.9" stroke-linejoin="round" stroke-linecap="round"/>
<polyline clip-path="url(#cp_TA)" points="1276.1,370.5 1276.6,357.6 1271.2,346.7 1271.4,336.1 1274.8,329.9" fill="none" stroke="#ababab" stroke-width="2.9" stroke-linejoin="round" stroke-linecap="round"/>
<polyline clip-path="url(#cp_TA)" points="1229.1,399.5 1235.3,393.7 1243.3,389.6 1249.1,384.9 1254.0,375.7 1256.4,365.3" fill="none" stroke="#ababab" stroke-width="2.9" stroke-linejoin="round" stroke-linecap="round"/>
<polyline clip-path="url(#cp_TA)" points="1239.9,330.0 1245.1,323.8 1249.4,312.1 1254.7,305.5 1258.8,294.8 1264.6,289.1" fill="none" stroke="#ababab" stroke-width="2.9" stroke-linejoin="round" stroke-linecap="round"/>
<polyline clip-path="url(#cp_TA)" points="1274.1,384.9 1283.0,380.4 1291.7,372.9 1298.2,365.9 1307.3,361.9" fill="none" stroke="#ababab" stroke-width="2.9" stroke-linejoin="round" stroke-linecap="round"/>
<polyline clip-path="url(#cp_TA)" points="1248.7,390.9 1260.2,387.2 1268.7,385.5 1276.7,387.2 1285.1,385.0 1292.0,382.7 1299.4,377.1 1306.0,372.9" fill="none" stroke="#ababab" stroke-width="2.9" stroke-linejoin="round" stroke-linecap="round"/>
<polyline clip-path="url(#cp_TA)" points="1239.4,386.0 1231.8,384.2 1224.8,385.7 1213.8,383.7 1208.1,379.4 1201.1,372.4 1196.4,364.8 1196.0,357.3 1195.9,345.9" fill="none" stroke="#ababab" stroke-width="2.9" stroke-linejoin="round" stroke-linecap="round"/>
<polyline clip-path="url(#cp_TA)" points="1271.1,366.3 1269.5,377.3 1263.2,387.8 1257.9,398.3 1250.2,405.4 1242.7,410.8 1233.5,416.2" fill="none" stroke="#ababab" stroke-width="2.9" stroke-linejoin="round" stroke-linecap="round"/>
<polyline clip-path="url(#cp_TA)" points="1222.7,353.8 1211.7,350.8 1202.7,347.5 1196.9,342.8 1192.6,337.0 1187.6,328.5 1179.6,320.7" fill="none" stroke="#ababab" stroke-width="2.9" stroke-linejoin="round" stroke-linecap="round"/>
<polyline clip-path="url(#cp_LIV)" points="1186.8,397.6 1183.9,390.3 1181.2,380.5 1181.1,371.5 1185.2,362.4" fill="none" stroke="#ababab" stroke-width="2.9" stroke-linejoin="round" stroke-linecap="round"/>
<polyline clip-path="url(#cp_LIV)" points="1163.7,380.0 1152.2,380.0 1144.3,382.4 1133.8,389.2 1128.7,395.2 1122.2,405.7 1121.5,413.1 1115.1,423.1" fill="none" stroke="#ababab" stroke-width="2.9" stroke-linejoin="round" stroke-linecap="round"/>
<polyline clip-path="url(#cp_LIV)" points="1152.2,385.6 1147.8,394.5 1144.5,406.1 1137.9,413.2 1135.6,420.0 1130.9,425.6 1122.6,431.9 1114.9,440.8" fill="none" stroke="#ababab" stroke-width="2.9" stroke-linejoin="round" stroke-linecap="round"/>
<polyline clip-path="url(#cp_LIV)" points="1182.9,348.1 1170.0,347.6 1162.8,350.3 1152.5,353.6 1145.8,356.8 1137.1,365.0" fill="none" stroke="#ababab" stroke-width="2.9" stroke-linejoin="round" stroke-linecap="round"/>
<polyline clip-path="url(#cp_LIV)" points="1165.0,406.0 1162.6,397.7 1157.8,387.6 1153.5,377.8 1152.0,368.6" fill="none" stroke="#ababab" stroke-width="2.9" stroke-linejoin="round" stroke-linecap="round"/>
<polyline clip-path="url(#cp_LIV)" points="1213.3,422.1 1222.0,417.8 1233.8,413.7 1243.1,409.1 1254.8,408.2 1264.0,411.7 1271.1,415.8 1279.9,423.8" fill="none" stroke="#ababab" stroke-width="2.9" stroke-linejoin="round" stroke-linecap="round"/>
<polyline clip-path="url(#cp_LIV)" points="1199.7,406.3 1196.9,418.8 1193.9,430.2 1192.9,442.6 1189.1,450.8 1188.9,460.5 1188.1,472.1 1187.7,479.2" fill="none" stroke="#ababab" stroke-width="2.9" stroke-linejoin="round" stroke-linecap="round"/>
<polyline clip-path="url(#cp_LIV)" points="1214.8,351.4 1227.2,349.6 1240.0,347.4 1249.8,349.7 1258.7,353.6 1266.1,361.0 1272.5,370.6" fill="none" stroke="#ababab" stroke-width="2.9" stroke-linejoin="round" stroke-linecap="round"/>
<polyline clip-path="url(#cp_LIV)" points="1181.5,392.9 1184.0,403.7 1181.1,415.6 1178.2,423.9 1178.3,434.2 1180.7,443.9 1183.2,451.1 1190.0,457.4 1195.2,462.5" fill="none" stroke="#ababab" stroke-width="2.9" stroke-linejoin="round" stroke-linecap="round"/>
<polyline clip-path="url(#cp_LIV)" points="1150.4,360.0 1147.3,350.7 1141.2,343.3 1136.7,331.7 1133.2,323.5 1126.3,315.4 1124.1,307.9 1124.1,300.7" fill="none" stroke="#ababab" stroke-width="2.9" stroke-linejoin="round" stroke-linecap="round"/>
<polyline clip-path="url(#cp_LIV)" points="1159.5,365.1 1150.4,369.3 1140.9,373.7 1130.2,374.6 1119.1,373.1 1112.9,369.5 1103.3,362.3" fill="none" stroke="#ababab" stroke-width="2.9" stroke-linejoin="round" stroke-linecap="round"/>
<polyline clip-path="url(#cp_LIV)" points="1197.4,391.2 1195.7,403.2 1197.1,414.6 1194.9,426.8 1194.9,435.7 1191.5,443.3 1181.6,450.7 1177.2,457.9 1171.2,463.9" fill="none" stroke="#ababab" stroke-width="2.9" stroke-linejoin="round" stroke-linecap="round"/>
<polyline clip-path="url(#cp_LIV)" points="1179.9,412.4 1186.7,420.3 1195.6,428.2 1205.0,434.4 1211.8,440.4" fill="none" stroke="#ababab" stroke-width="2.9" stroke-linejoin="round" stroke-linecap="round"/>
<polyline clip-path="url(#cp_LIV)" points="1231.9,416.0 1241.0,411.2 1250.3,406.5 1255.9,400.6 1261.2,389.8" fill="none" stroke="#ababab" stroke-width="2.9" stroke-linejoin="round" stroke-linecap="round"/>
<polyline clip-path="url(#cp_EBR)" points="1122.1,375.3 1114.3,367.3 1110.9,360.0 1105.6,349.8 1101.2,342.9 1093.3,336.7 1081.1,334.5" fill="none" stroke="#ababab" stroke-width="2.9" stroke-linejoin="round" stroke-linecap="round"/>
<polyline clip-path="url(#cp_EBR)" points="1116.6,382.7 1109.0,382.0 1101.4,379.5 1095.8,374.1 1087.3,368.4 1078.7,364.1 1070.5,362.9" fill="none" stroke="#ababab" stroke-width="2.9" stroke-linejoin="round" stroke-linecap="round"/>
<polyline clip-path="url(#cp_EBR)" points="1107.6,339.0 1098.9,338.7 1091.2,334.5 1082.0,332.4 1074.6,333.2 1064.7,334.0 1057.5,336.8 1048.2,341.6 1043.2,347.4" fill="none" stroke="#ababab" stroke-width="2.9" stroke-linejoin="round" stroke-linecap="round"/>
<polyline clip-path="url(#cp_EBR)" points="1101.9,369.0 1110.2,367.1 1118.3,363.1 1127.0,359.3 1138.2,354.7 1145.0,347.9 1153.2,341.7 1164.5,335.8" fill="none" stroke="#ababab" stroke-width="2.9" stroke-linejoin="round" stroke-linecap="round"/>
<polyline clip-path="url(#cp_EBR)" points="1115.0,412.3 1118.3,402.6 1122.3,393.9 1125.8,385.9 1128.6,377.5 1132.0,368.2" fill="none" stroke="#ababab" stroke-width="2.9" stroke-linejoin="round" stroke-linecap="round"/>
<polyline clip-path="url(#cp_EBR)" points="1104.8,411.5 1094.8,415.6 1084.9,420.7 1079.6,427.8 1074.1,436.8 1068.0,443.2" fill="none" stroke="#ababab" stroke-width="2.9" stroke-linejoin="round" stroke-linecap="round"/>
<polyline clip-path="url(#cp_EBR)" points="1151.3,349.8 1146.4,344.0 1141.6,332.5 1132.9,323.1 1123.4,317.1 1114.0,316.0" fill="none" stroke="#ababab" stroke-width="2.9" stroke-linejoin="round" stroke-linecap="round"/>
<polyline clip-path="url(#cp_ST)" points="1308.3,346.8 1307.2,336.1 1305.2,327.8 1304.6,317.4 1304.9,306.6 1307.2,298.8 1307.7,285.9" fill="none" stroke="#ababab" stroke-width="2.9" stroke-linejoin="round" stroke-linecap="round"/>
<polyline clip-path="url(#cp_ST)" points="1375.9,409.8 1385.4,408.9 1393.0,409.0 1400.4,409.5 1410.8,405.7" fill="none" stroke="#ababab" stroke-width="2.9" stroke-linejoin="round" stroke-linecap="round"/>
<polyline clip-path="url(#cp_ST)" points="1336.5,389.0 1327.8,391.7 1315.8,392.5 1309.0,396.1 1298.4,398.0 1290.2,397.2 1281.6,397.1" fill="none" stroke="#ababab" stroke-width="2.9" stroke-linejoin="round" stroke-linecap="round"/>
<polyline clip-path="url(#cp_ST)" points="1300.0,391.6 1310.2,396.2 1317.9,397.8 1329.3,398.4 1336.9,397.9 1347.3,399.3 1358.0,406.0 1363.5,413.9" fill="none" stroke="#ababab" stroke-width="2.9" stroke-linejoin="round" stroke-linecap="round"/>
<polyline clip-path="url(#cp_ST)" points="1311.3,369.6 1319.9,376.5 1328.4,384.7 1333.4,392.4 1338.3,398.6 1342.8,405.3 1351.0,410.6" fill="none" stroke="#ababab" stroke-width="2.9" stroke-linejoin="round" stroke-linecap="round"/>
<polyline clip-path="url(#cp_ST)" points="1369.3,404.2 1372.1,412.5 1380.8,420.9 1388.9,427.6 1397.9,432.4 1406.1,435.2 1415.0,434.7 1424.3,429.1 1431.3,419.5" fill="none" stroke="#ababab" stroke-width="2.9" stroke-linejoin="round" stroke-linecap="round"/>
<polyline clip-path="url(#cp_ST)" points="1322.6,395.8 1323.6,386.1 1323.0,374.3 1321.4,366.6 1318.8,355.1 1312.2,346.6 1301.9,341.4 1296.6,334.0 1288.3,330.0" fill="none" stroke="#ababab" stroke-width="2.9" stroke-linejoin="round" stroke-linecap="round"/>
<polyline clip-path="url(#cp_ST)" points="1286.6,375.0 1295.7,378.1 1303.3,380.0 1314.7,386.1 1322.2,388.9" fill="none" stroke="#ababab" stroke-width="2.9" stroke-linejoin="round" stroke-linecap="round"/>
<polyline clip-path="url(#cp_WA)" points="1281.4,302.8 1270.4,305.6 1263.3,309.1 1250.8,309.5 1243.9,307.9" fill="none" stroke="#ababab" stroke-width="2.9" stroke-linejoin="round" stroke-linecap="round"/>
<polyline clip-path="url(#cp_WA)" points="1312.4,329.4 1303.3,334.8 1294.4,338.9 1285.6,342.9 1276.2,343.1 1264.5,338.4" fill="none" stroke="#ababab" stroke-width="2.9" stroke-linejoin="round" stroke-linecap="round"/>
<polyline clip-path="url(#cp_WA)" points="1328.7,339.5 1337.1,330.3 1342.8,321.7 1351.3,316.7 1356.3,311.4 1367.4,307.2 1376.4,302.5 1384.1,298.7" fill="none" stroke="#ababab" stroke-width="2.9" stroke-linejoin="round" stroke-linecap="round"/>
<polyline clip-path="url(#cp_WA)" points="1285.2,273.4 1292.4,264.8 1298.2,259.3 1302.2,251.3 1304.9,239.4 1307.5,228.9 1313.3,222.5 1318.7,216.8" fill="none" stroke="#ababab" stroke-width="2.9" stroke-linejoin="round" stroke-linecap="round"/>
<polyline clip-path="url(#cp_WA)" points="1344.7,272.7 1342.9,283.2 1340.4,295.3 1337.5,302.2 1331.4,310.4" fill="none" stroke="#ababab" stroke-width="2.9" stroke-linejoin="round" stroke-linecap="round"/>
<polyline clip-path="url(#cp_WA)" points="1315.2,274.0 1313.3,283.4 1315.7,292.6 1319.1,304.8 1317.4,313.5" fill="none" stroke="#ababab" stroke-width="2.9" stroke-linejoin="round" stroke-linecap="round"/>
<polyline clip-path="url(#cp_WA)" points="1303.9,312.1 1304.2,301.0 1300.9,292.2 1295.8,280.5 1295.0,269.6" fill="none" stroke="#ababab" stroke-width="2.9" stroke-linejoin="round" stroke-linecap="round"/>
<polyline clip-path="url(#cp_WA)" points="1338.0,289.5 1349.5,293.2 1360.1,299.5 1370.7,301.5 1380.1,308.2" fill="none" stroke="#ababab" stroke-width="2.9" stroke-linejoin="round" stroke-linecap="round"/>
<polyline clip-path="url(#cp_WA)" points="1320.7,278.8 1326.5,290.1 1331.0,300.5 1337.5,310.5 1344.0,314.9" fill="none" stroke="#ababab" stroke-width="2.9" stroke-linejoin="round" stroke-linecap="round"/>
<polyline clip-path="url(#cp_WA)" points="1337.8,285.4 1335.1,278.3 1330.3,272.0 1322.2,267.1 1309.8,265.5 1299.8,265.0 1288.4,262.7 1280.3,258.1" fill="none" stroke="#ababab" stroke-width="2.9" stroke-linejoin="round" stroke-linecap="round"/>
<polyline clip-path="url(#cp_EF)" points="1110.2,300.9 1121.9,306.3 1130.2,313.4 1135.0,318.7 1142.2,324.2 1147.5,329.7 1155.3,336.1 1162.0,345.9 1165.7,353.0" fill="none" stroke="#ababab" stroke-width="2.9" stroke-linejoin="round" stroke-linecap="round"/>
<polyline clip-path="url(#cp_EF)" points="1129.3,296.8 1123.9,305.4 1115.5,313.9 1109.7,325.2 1105.1,332.0 1103.6,340.3" fill="none" stroke="#ababab" stroke-width="2.9" stroke-linejoin="round" stroke-linecap="round"/>
<polyline clip-path="url(#cp_EF)" points="1131.8,320.5 1121.9,327.9 1113.2,335.1 1107.1,343.6 1102.6,349.4 1095.5,353.2 1083.5,356.1" fill="none" stroke="#ababab" stroke-width="2.9" stroke-linejoin="round" stroke-linecap="round"/>
<polyline clip-path="url(#cp_EF)" points="1110.5,282.6 1119.8,277.9 1127.8,276.7 1135.3,276.1 1142.1,271.8 1154.7,270.8 1163.5,271.6" fill="none" stroke="#ababab" stroke-width="2.9" stroke-linejoin="round" stroke-linecap="round"/>
<polyline clip-path="url(#cp_EF)" points="1140.1,323.3 1138.0,314.0 1131.5,306.2 1123.2,301.7 1115.9,299.2" fill="none" stroke="#ababab" stroke-width="2.9" stroke-linejoin="round" stroke-linecap="round"/>
<polyline clip-path="url(#cp_EF)" points="1144.6,326.7 1145.1,317.6 1150.7,306.5 1155.4,298.3 1159.1,286.5 1162.4,274.5 1167.7,263.8 1168.3,256.1 1172.7,248.3" fill="none" stroke="#ababab" stroke-width="2.9" stroke-linejoin="round" stroke-linecap="round"/>
<polyline clip-path="url(#cp_SH)" points="1189.8,303.6 1199.7,299.6 1208.0,295.6 1217.5,288.7 1229.4,285.7" fill="none" stroke="#ababab" stroke-width="2.9" stroke-linejoin="round" stroke-linecap="round"/>
<polyline clip-path="url(#cp_SH)" points="1173.3,334.9 1168.8,343.7 1167.8,356.1 1166.5,367.0 1159.9,377.3 1149.9,382.8 1140.8,384.1 1130.4,385.0" fill="none" stroke="#ababab" stroke-width="2.9" stroke-linejoin="round" stroke-linecap="round"/>
<polyline clip-path="url(#cp_SH)" points="1168.6,320.5 1164.7,309.4 1158.0,301.7 1156.2,294.9 1151.9,287.3" fill="none" stroke="#ababab" stroke-width="2.9" stroke-linejoin="round" stroke-linecap="round"/>
<polyline clip-path="url(#cp_SH)" points="1178.1,277.2 1177.6,266.1 1174.9,257.7 1171.8,249.3 1167.8,242.6 1164.9,231.3 1165.9,223.1 1171.0,213.3" fill="none" stroke="#ababab" stroke-width="2.9" stroke-linejoin="round" stroke-linecap="round"/>
<polyline clip-path="url(#cp_SH)" points="1209.9,339.0 1218.7,332.6 1226.0,322.8 1227.4,315.3 1230.9,307.1 1239.8,298.7 1246.5,294.7 1258.3,290.3 1265.2,287.4" fill="none" stroke="#ababab" stroke-width="2.9" stroke-linejoin="round" stroke-linecap="round"/>
<polyline clip-path="url(#cp_SH)" points="1172.1,295.3 1174.1,303.8 1179.3,314.4 1182.5,321.4 1187.7,333.2 1187.9,341.3" fill="none" stroke="#ababab" stroke-width="2.9" stroke-linejoin="round" stroke-linecap="round"/>
<polyline clip-path="url(#cp_SH)" points="1172.2,282.4 1182.4,281.4 1189.6,280.9 1198.3,281.2 1209.9,278.7" fill="none" stroke="#ababab" stroke-width="2.9" stroke-linejoin="round" stroke-linecap="round"/>
<polyline clip-path="url(#cp_SH)" points="1203.8,290.7 1191.4,291.7 1184.8,288.9 1174.1,284.7 1161.9,281.5" fill="none" stroke="#ababab" stroke-width="2.9" stroke-linejoin="round" stroke-linecap="round"/>
<polyline clip-path="url(#cp_ASC)" points="1163.2,421.7 1156.2,421.0 1147.9,420.1 1141.1,418.0 1136.9,414.2 1134.0,409.3 1131.5,404.0 1127.6,396.9" fill="none" stroke="#ababab" stroke-width="2.9" stroke-linejoin="round" stroke-linecap="round"/>
<polyline clip-path="url(#cp_ASC)" points="1140.4,441.1 1138.6,445.9 1135.2,453.0 1131.0,460.3 1129.9,465.8 1131.8,472.5 1134.1,478.9 1138.6,485.8 1145.9,490.3" fill="none" stroke="#ababab" stroke-width="2.9" stroke-linejoin="round" stroke-linecap="round"/>
<polyline clip-path="url(#cp_ASC)" points="1169.2,444.5 1169.5,449.6 1171.4,456.9 1172.8,462.8 1173.5,468.1" fill="none" stroke="#ababab" stroke-width="2.9" stroke-linejoin="round" stroke-linecap="round"/>
<polyline clip-path="url(#cp_ASC)" points="1142.0,420.5 1138.5,413.5 1136.2,405.0 1131.4,398.6 1128.5,393.8 1126.5,387.1 1127.4,382.1 1128.1,375.1" fill="none" stroke="#ababab" stroke-width="2.9" stroke-linejoin="round" stroke-linecap="round"/>
<polyline clip-path="url(#cp_SJM)" points="1151.4,482.5 1155.6,472.2 1163.0,461.7 1168.9,455.2 1173.0,443.7" fill="none" stroke="#ababab" stroke-width="2.9" stroke-linejoin="round" stroke-linecap="round"/>
<polyline clip-path="url(#cp_SJM)" points="1159.0,468.8 1163.8,480.8 1165.2,491.1 1161.9,503.0 1156.7,509.2 1145.7,515.4 1139.2,522.0 1136.2,531.0" fill="none" stroke="#ababab" stroke-width="2.9" stroke-linejoin="round" stroke-linecap="round"/>
<polyline clip-path="url(#cp_SJM)" points="1160.1,495.6 1163.1,504.9 1167.7,513.4 1167.7,524.5 1164.8,532.2 1163.1,539.4 1159.2,547.8 1157.7,554.7" fill="none" stroke="#ababab" stroke-width="2.9" stroke-linejoin="round" stroke-linecap="round"/>
<polyline clip-path="url(#cp_SJM)" points="1156.5,466.2 1155.0,457.2 1148.8,446.2 1141.8,436.9 1136.6,425.6 1129.6,420.1" fill="none" stroke="#ababab" stroke-width="2.9" stroke-linejoin="round" stroke-linecap="round"/>
<polyline clip-path="url(#cp_ASM)" points="1114.9,474.2 1114.9,465.3 1115.9,455.5 1113.8,445.6 1109.2,438.7 1103.1,431.0 1098.5,422.0 1094.8,413.9 1090.5,405.7" fill="none" stroke="#ababab" stroke-width="2.9" stroke-linejoin="round" stroke-linecap="round"/>
<polyline clip-path="url(#cp_ASM)" points="1143.2,511.7 1142.5,502.6 1138.2,494.4 1135.4,487.1 1135.3,475.6 1135.0,468.5 1137.6,457.4 1140.4,450.5" fill="none" stroke="#ababab" stroke-width="2.9" stroke-linejoin="round" stroke-linecap="round"/>
<polyline clip-path="url(#cp_ASM)" points="1141.6,497.9 1130.9,499.0 1122.5,503.6 1116.5,507.9 1109.9,513.9 1103.4,519.7 1099.0,528.0" fill="none" stroke="#ababab" stroke-width="2.9" stroke-linejoin="round" stroke-linecap="round"/>
<polyline clip-path="url(#cp_ASM)" points="1120.1,478.3 1115.2,489.1 1111.8,496.9 1105.7,503.4 1094.3,508.2 1085.4,516.9 1077.3,520.0" fill="none" stroke="#ababab" stroke-width="2.9" stroke-linejoin="round" stroke-linecap="round"/>
<polyline clip-path="url(#cp_LAF)" points="1163.2,529.3 1151.7,524.7 1143.7,520.0 1132.1,515.6 1120.9,516.8 1114.0,519.6 1107.2,527.2" fill="none" stroke="#ababab" stroke-width="2.9" stroke-linejoin="round" stroke-linecap="round"/>
<polyline clip-path="url(#cp_LAF)" points="1215.2,509.8 1227.3,512.4 1234.9,510.5 1243.5,508.3 1255.4,503.5 1261.5,498.1 1267.4,488.7 1269.5,482.0" fill="none" stroke="#ababab" stroke-width="2.9" stroke-linejoin="round" stroke-linecap="round"/>
<polyline clip-path="url(#cp_LAF)" points="1208.9,534.5 1213.3,545.7 1213.2,556.8 1210.6,565.0 1211.2,572.1 1209.5,580.1 1208.6,588.0 1210.1,595.8 1214.1,606.2" fill="none" stroke="#ababab" stroke-width="2.9" stroke-linejoin="round" stroke-linecap="round"/>
<polyline clip-path="url(#cp_LAF)" points="1232.4,527.0 1230.1,516.4 1226.2,505.9 1227.0,494.5 1232.5,482.8 1241.0,473.8 1247.5,463.6 1253.6,454.4 1254.9,443.7" fill="none" stroke="#ababab" stroke-width="2.9" stroke-linejoin="round" stroke-linecap="round"/>
<polyline clip-path="url(#cp_LAF)" points="1197.1,541.1 1186.0,541.2 1175.5,543.9 1165.2,548.1 1156.0,556.0 1150.3,564.7 1147.7,577.3 1145.1,584.6 1140.4,591.8" fill="none" stroke="#ababab" stroke-width="2.9" stroke-linejoin="round" stroke-linecap="round"/>
<polyline clip-path="url(#cp_TER)" points="1143.7,556.0 1134.0,554.0 1123.2,549.5 1117.4,543.2 1110.3,538.4 1103.6,531.9" fill="none" stroke="#ababab" stroke-width="2.9" stroke-linejoin="round" stroke-linecap="round"/>
<polyline clip-path="url(#cp_TER)" points="1143.4,599.9 1156.3,598.9 1164.4,594.9 1170.5,586.7 1175.9,579.2 1180.9,568.5 1187.0,562.3" fill="none" stroke="#ababab" stroke-width="2.9" stroke-linejoin="round" stroke-linecap="round"/>
<polyline clip-path="url(#cp_TER)" points="1163.3,579.0 1158.2,585.6 1153.0,596.6 1148.6,607.7 1143.3,619.0 1136.3,625.5 1130.8,636.5 1128.3,646.6" fill="none" stroke="#ababab" stroke-width="2.9" stroke-linejoin="round" stroke-linecap="round"/>
<polyline clip-path="url(#cp_TER)" points="1153.3,567.0 1144.6,572.6 1137.7,576.5 1131.5,586.2 1126.8,591.4 1122.6,598.0 1112.7,606.5 1107.7,611.6" fill="none" stroke="#ababab" stroke-width="2.9" stroke-linejoin="round" stroke-linecap="round"/>
<polyline points="1247.2,466.7 1256.2,474.3 1264.4,481.2 1269.2,483.2" fill="none" stroke="#a24aa6" stroke-width="3.8" stroke-linejoin="round" stroke-linecap="round" />
<polyline points="1254.8,491.5 1258.9,491.9" fill="none" stroke="#a24aa6" stroke-width="3.5" stroke-linejoin="round" stroke-linecap="round" />
<polyline points="1300.3,506.0 1303.7,506.6" fill="none" stroke="#a24aa6" stroke-width="3.5" stroke-linejoin="round" stroke-linecap="round" />
<polyline points="1306.5,494.9 1310.6,497.4 1314.0,497.0" fill="none" stroke="#a24aa6" stroke-width="4" stroke-linejoin="round" stroke-linecap="round" />
<polyline points="1313.3,482.8 1317.1,482.3" fill="none" stroke="#a24aa6" stroke-width="3.5" stroke-linejoin="round" stroke-linecap="round" />
<polyline points="1332.0,474.3 1332.5,477.7" fill="none" stroke="#a24aa6" stroke-width="2.5" stroke-linejoin="round" stroke-linecap="round" />
<polyline points="1331.7,479.8 1330.8,483.2" fill="none" stroke="#a24aa6" stroke-width="3" stroke-linejoin="round" stroke-linecap="round" />
<polyline points="1347.8,447.4 1349.9,450.1" fill="none" stroke="#a24aa6" stroke-width="3" stroke-linejoin="round" stroke-linecap="round" />
<polyline points="1308.5,501.1 1310.6,503.2" fill="none" stroke="#a24aa6" stroke-width="3" stroke-linejoin="round" stroke-linecap="round" />
<polyline points="1348.9,446.3 1352.2,446.3 1349.6,450.2 1347.2,449.6 1348.9,446.3" fill="none" stroke="#a24aa6" stroke-width="3.5" stroke-linejoin="round" stroke-linecap="round" />
<polyline points="1330.3,478.4 1332.9,483.6" fill="none" stroke="#a24aa6" stroke-width="3.5" stroke-linejoin="round" stroke-linecap="round" />
<polyline points="1313.9,481.9 1317.4,482.8" fill="none" stroke="#a24aa6" stroke-width="4" stroke-linejoin="round" stroke-linecap="round" />
<polyline points="1164.1,472.4 1166.8,478.6" fill="none" stroke="#eeee30" stroke-width="2.2" stroke-linejoin="round" stroke-linecap="round" />
<polyline points="1169.9,484.8 1174.3,484.8 1174.3,486.3 1170.1,486.3 1169.9,484.8" fill="none" stroke="#eeee30" stroke-width="2.2" stroke-linejoin="round" stroke-linecap="round" />
<polyline points="1165.4,439.3 1168.2,444.1 1179.2,453.7" fill="none" stroke="#eeee30" stroke-width="1.2" stroke-linejoin="round" stroke-linecap="round" />
<polyline points="1129.6,487.5 1136.5,488.2" fill="none" stroke="#eeee30" stroke-width="1.4" stroke-linejoin="round" stroke-linecap="round" />
<polyline points="1202.1,309.6 1206.0,309.8" fill="none" stroke="#eeee30" stroke-width="2.5" stroke-linejoin="round" stroke-linecap="round" />
<polyline points="1195.6,306.1 1196.9,307.4" fill="none" stroke="#eeee30" stroke-width="1.6" stroke-linejoin="round" stroke-linecap="round" />
<polyline points="1210.5,308.9 1211.8,310.5" fill="none" stroke="#eeee30" stroke-width="1.6" stroke-linejoin="round" stroke-linecap="round" />
</g>
<text x="1092.9" y="303.5" font-size="11.5" fill="#3d3d3d" font-weight="bold" textLength="76.7" lengthAdjust="spacingAndGlyphs" stroke="#ffffff" stroke-opacity="0.85" stroke-width="2.4" stroke-linejoin="round" paint-order="stroke">East Feliciana</text>
<text x="1281.2" y="301.8" font-size="11.5" fill="#3d3d3d" font-weight="bold" textLength="65.5" lengthAdjust="spacingAndGlyphs" stroke="#ffffff" stroke-opacity="0.85" stroke-width="2.4" stroke-linejoin="round" paint-order="stroke">Washington</text>
<text x="1217.3" y="348.8" font-size="11.5" fill="#3d3d3d" font-weight="bold" textLength="61.3" lengthAdjust="spacingAndGlyphs" stroke="#ffffff" stroke-opacity="0.85" stroke-width="2.4" stroke-linejoin="round" paint-order="stroke">Tangipahoa</text>
<text x="1160.4" y="388.7" font-size="11.5" fill="#3d3d3d" font-weight="bold" textLength="56.9" lengthAdjust="spacingAndGlyphs" stroke="#ffffff" stroke-opacity="0.85" stroke-width="2.4" stroke-linejoin="round" paint-order="stroke">Livingston</text>
<text x="1293.3" y="395.6" font-size="11.5" fill="#3d3d3d" font-weight="bold" textLength="71.4" lengthAdjust="spacingAndGlyphs" stroke="#ffffff" stroke-opacity="0.85" stroke-width="2.4" stroke-linejoin="round" paint-order="stroke">St. Tammany</text>
<text x="990.0" y="332.4" font-size="11.5" fill="#3d3d3d" font-weight="bold" textLength="79.9" lengthAdjust="spacingAndGlyphs" stroke="#ffffff" stroke-opacity="0.85" stroke-width="2.4" stroke-linejoin="round" paint-order="stroke">Pointe Coupee</text>
<text x="1031.3" y="384.1" font-size="11.5" fill="#3d3d3d" font-weight="bold" textLength="102.0" lengthAdjust="spacingAndGlyphs" stroke="#ffffff" stroke-opacity="0.85" stroke-width="2.4" stroke-linejoin="round" paint-order="stroke">West Baton Rouge</text>
<text x="1054.3" y="427.2" font-size="11.5" fill="#3d3d3d" font-weight="bold" textLength="42.4" lengthAdjust="spacingAndGlyphs" stroke="#ffffff" stroke-opacity="0.85" stroke-width="2.4" stroke-linejoin="round" paint-order="stroke">Iberville</text>
<text x="928.0" y="355.7" font-size="11.5" fill="#3d3d3d" font-weight="bold" textLength="56.0" lengthAdjust="spacingAndGlyphs" stroke="#ffffff" stroke-opacity="0.85" stroke-width="2.4" stroke-linejoin="round" paint-order="stroke">St. Landry</text>
<text x="852.0" y="328.5" font-size="11.5" fill="#3d3d3d" font-weight="bold" textLength="61.0" lengthAdjust="spacingAndGlyphs" stroke="#ffffff" stroke-opacity="0.85" stroke-width="2.4" stroke-linejoin="round" paint-order="stroke">Evangeline</text>
<text x="862.5" y="420.6" font-size="11.5" fill="#3d3d3d" font-weight="bold" textLength="38.5" lengthAdjust="spacingAndGlyphs" stroke="#ffffff" stroke-opacity="0.85" stroke-width="2.4" stroke-linejoin="round" paint-order="stroke">Acadia</text>
<text x="920.0" y="438.4" font-size="11.5" fill="#3d3d3d" font-weight="bold" textLength="50.8" lengthAdjust="spacingAndGlyphs" stroke="#ffffff" stroke-opacity="0.85" stroke-width="2.4" stroke-linejoin="round" paint-order="stroke">Lafayette</text>
<text x="981.1" y="434.0" font-size="11.5" fill="#3d3d3d" font-weight="bold" textLength="51.7" lengthAdjust="spacingAndGlyphs" stroke="#ffffff" stroke-opacity="0.85" stroke-width="2.4" stroke-linejoin="round" paint-order="stroke">St. Martin</text>
<text x="876.0" y="521.9" font-size="11.5" fill="#3d3d3d" font-weight="bold" textLength="51.7" lengthAdjust="spacingAndGlyphs" stroke="#ffffff" stroke-opacity="0.85" stroke-width="2.4" stroke-linejoin="round" paint-order="stroke">Vermilion</text>
<text x="985.1" y="532.7" font-size="11.5" fill="#3d3d3d" font-weight="bold" textLength="29.9" lengthAdjust="spacingAndGlyphs" stroke="#ffffff" stroke-opacity="0.85" stroke-width="2.4" stroke-linejoin="round" paint-order="stroke">Iberia</text>
<text x="1030.2" y="558.3" font-size="11.5" fill="#3d3d3d" font-weight="bold" textLength="44.9" lengthAdjust="spacingAndGlyphs" stroke="#ffffff" stroke-opacity="0.85" stroke-width="2.4" stroke-linejoin="round" paint-order="stroke">St. Mary</text>
<text x="1182.0" y="455.0" font-size="11.5" fill="#3d3d3d" font-weight="bold" textLength="107.2" lengthAdjust="spacingAndGlyphs" stroke="#ffffff" stroke-opacity="0.85" stroke-width="2.4" stroke-linejoin="round" paint-order="stroke">St. John the Baptist</text>
<text x="1150.2" y="475.6" font-size="11.5" fill="#3d3d3d" font-weight="bold" textLength="53.2" lengthAdjust="spacingAndGlyphs" stroke="#ffffff" stroke-opacity="0.85" stroke-width="2.4" stroke-linejoin="round" paint-order="stroke">St. James</text>
<text x="1095.0" y="502.2" font-size="11.5" fill="#3d3d3d" font-weight="bold" textLength="66.3" lengthAdjust="spacingAndGlyphs" stroke="#ffffff" stroke-opacity="0.85" stroke-width="2.4" stroke-linejoin="round" paint-order="stroke">Assumption</text>
<text x="1225.8" y="501.4" font-size="11.5" fill="#3d3d3d" font-weight="bold" textLength="59.4" lengthAdjust="spacingAndGlyphs" stroke="#ffffff" stroke-opacity="0.85" stroke-width="2.4" stroke-linejoin="round" paint-order="stroke">St. Charles</text>
<text x="1313.1" y="466.8" font-size="11.5" fill="#3d3d3d" font-weight="bold" textLength="42.2" lengthAdjust="spacingAndGlyphs" stroke="#ffffff" stroke-opacity="0.85" stroke-width="2.4" stroke-linejoin="round" paint-order="stroke">Orleans</text>
<text x="1277.8" y="549.4" font-size="11.5" fill="#3d3d3d" font-weight="bold" textLength="51.6" lengthAdjust="spacingAndGlyphs" stroke="#ffffff" stroke-opacity="0.85" stroke-width="2.4" stroke-linejoin="round" paint-order="stroke">Jefferson</text>
<text x="1219.9" y="586.1" font-size="11.5" fill="#3d3d3d" font-weight="bold" textLength="55.3" lengthAdjust="spacingAndGlyphs" stroke="#ffffff" stroke-opacity="0.85" stroke-width="2.4" stroke-linejoin="round" paint-order="stroke">Lafourche</text>
<text x="1137.7" y="620.3" font-size="11.5" fill="#3d3d3d" font-weight="bold" textLength="62.3" lengthAdjust="spacingAndGlyphs" stroke="#ffffff" stroke-opacity="0.85" stroke-width="2.4" stroke-linejoin="round" paint-order="stroke">Terrebonne</text>
<text x="1380.2" y="611.1" font-size="11.5" fill="#3d3d3d" font-weight="bold" textLength="70.7" lengthAdjust="spacingAndGlyphs" stroke="#ffffff" stroke-opacity="0.85" stroke-width="2.4" stroke-linejoin="round" paint-order="stroke">Plaquemines</text>
<text x="1416.8" y="501.7" font-size="11.5" fill="#3d3d3d" font-weight="bold" textLength="62.5" lengthAdjust="spacingAndGlyphs" stroke="#ffffff" stroke-opacity="0.85" stroke-width="2.4" stroke-linejoin="round" paint-order="stroke">St. Bernard</text></svg></div>
<div class="b" style="left:871px;top:750px;width:766px;height:16px;background:#484d51;"></div>
<span class="t " style="left:875.98px;top:751.10px;font-size:12.3px;color:#d4d4d4;transform:scaleX(0.9340);">Esri, HERE, Garmin, FAO, USGS, EPA, NPS |</span>
<span class="t " style="left:1112.72px;top:751.10px;font-size:12.3px;color:#d4d4d4;">Louisiana Department of</span>
<span class="t " style="left:1249.76px;top:751.10px;font-size:12.3px;color:#d4d4d4;transform:scaleX(0.9588);">Transportation and Development</span>
<span class="t " style="left:1424.31px;top:751.10px;font-size:12.3px;color:#d4d4d4;transform:scaleX(1.1131);">provided the so…</span>
<span class="t " style="left:1544.33px;top:751.10px;font-size:12.3px;color:#d4d4d4;transform:scaleX(0.9856);">Powered by Esri</span>
<div class="b" style="left:1491px;top:211px;width:32px;height:32px;background:#222222;box-shadow:inset 0 0 0 1.2px #2a93ee;"></div>
<div class="b" style="left:1530px;top:211px;width:92px;height:32px;background:#222222;box-shadow:inset 0 0 0 1.2px #2a93ee;"></div>
<div class="b" style="left:1560px;top:211px;width:1px;height:32px;background:#2a93ee;"></div>
<div class="b" style="left:1590.3px;top:211px;width:1px;height:32px;background:#2a93ee;"></div>
<svg class="b" style="left:1485px;top:205px" width="145" height="45" viewBox="1485 205 145 45" fill="none" stroke="#2a93ee" stroke-width="1.05" stroke-linejoin="miter">
<circle cx="1505" cy="224.1" r="4.7"/><path d="M1508.3 227.6L1512.9 231.9"/>
<path d="M1539.3 225.7L1545.8 218.9L1552.7 225.7M1540.6 224.6V232.4H1543.9V228H1548.4V232.4H1551.7V224.6M1541.7 222.8V219.6H1543.5V221"/>
<path d="M1574.1 220.7H1582.9M1574.1 224.5H1582.9M1574.1 228.3H1582.9M1574.1 232.4H1582.9"/>
<rect x="1569.4" y="219.6" width="2.2" height="2.2"/><circle cx="1570.5" cy="224.5" r="1.1"/><rect x="1569.4" y="227.2" width="2.2" height="2.2"/><path d="M1569.3 233.2L1570.5 231.2L1571.7 233.2Z" fill="#2a93ee"/>
<rect x="1598.5" y="218.7" width="5.8" height="5.8"/><rect x="1607.5" y="218.7" width="5.8" height="5.8"/><rect x="1598.5" y="227.6" width="5.8" height="5.8"/><rect x="1607.5" y="227.6" width="5.8" height="5.8"/>
<path d="M1600.5 219L1603.8 222.5M1598.8 222.8H1601.5M1609.5 219V221.8H1613M1610.8 224.2V222.6M1598.8 232L1600.8 230L1604 232.8M1607.8 230.2H1613M1611 230.2V233"/>
</svg>
<div class="b" style="left:1590px;top:671px;width:32px;height:65px;background:#222222;"><svg width="32" height="65" viewBox="0 0 32 65" fill="none" stroke="#bdbdbd" stroke-width="1.2"><path d="M9 16.500h15M16.500 9v15M9 49.500h15"/><path d="M0 33.500h32" stroke="#4a4a4a"/></svg></div>
<div class="b" style="left:871px;top:777px;width:766px;height:22px;background:#000000;box-shadow:inset 0 0 0 1px #393c3f;"></div>
<span class="t " style="left:1175.17px;top:778.90px;font-size:17.33px;color:#0000ff;font-weight:bold;transform:scaleX(1.0277);">September 7, 2021</span>
<div class="b" style="left:1649px;top:195px;width:237px;height:604px;background:#ffffff;"></div>
<span class="t " style="left:1653.78px;top:202.60px;font-size:20px;color:#4a4a4a;font-weight:bold;transform:scaleX(1.0123);">Map Legend</span>
<div class="b" style="left:1879px;top:232px;width:7px;height:514px;background:#6a6a6a;"></div>
<div class="b" style="left:1879px;top:715px;width:7px;height:31px;background:#3c3c3c;"></div>
<span class="t " style="left:1663.93px;top:244.80px;font-size:14px;color:#323232;font-weight:bold;transform:scaleX(0.9529);">Road Status - Debris</span>
<span class="t " style="left:1671.20px;top:276.60px;font-size:14px;color:#4a4a4a;transform:scaleX(0.9541);">Status</span>
<div class="b" style="left:1677.6px;top:314.1px;width:11.5px;height:3px;background:#b4b4b4;border-radius:1.5px"></div>
<div class="b" style="left:1697px;top:314.1px;width:11.5px;height:3px;background:#b4b4b4;border-radius:1.5px"></div>
<span class="t " style="left:1724.50px;top:306.50px;font-size:12.3px;color:#595959;transform:scaleX(0.9925);">Needs Removal</span>
<div class="b" style="left:1677.6px;top:349px;width:40.7px;height:3px;background:#ffff73;"></div>
<span class="t " style="left:1724.50px;top:332.90px;font-size:12.3px;color:#595959;transform:scaleX(0.9460);">First Pass Single</span>
<span class="t " style="left:1724.50px;top:350.30px;font-size:12.3px;color:#595959;transform:scaleX(1.0239);">Shoulder Complete</span>
<div class="b" style="left:1677.6px;top:393px;width:40.7px;height:3px;background:#a8a800;"></div>
<span class="t " style="left:1724.50px;top:376.60px;font-size:12.3px;color:#595959;transform:scaleX(0.9457);">First Pass Both Sides</span>
<span class="t " style="left:1724.50px;top:394.00px;font-size:12.3px;color:#595959;transform:scaleX(1.0469);">Complete</span>
<div class="b" style="left:1677.6px;top:437px;width:40.7px;height:3px;background:#55ff00;"></div>
<span class="t " style="left:1724.50px;top:420.80px;font-size:12.3px;color:#595959;transform:scaleX(0.9581);">Second Pass Single</span>
<span class="t " style="left:1724.50px;top:438.20px;font-size:12.3px;color:#595959;transform:scaleX(1.0239);">Shoulder Complete</span>
<div class="b" style="left:1677.6px;top:481px;width:40.7px;height:3px;background:#38a800;"></div>
<span class="t " style="left:1724.50px;top:464.60px;font-size:12.3px;color:#595959;transform:scaleX(0.9590);">Second Pass Both Sides</span>
<span class="t " style="left:1724.50px;top:482.40px;font-size:12.3px;color:#595959;transform:scaleX(1.0469);">Complete</span>
<div class="b" style="left:1677.6px;top:525px;width:40.7px;height:3px;background:#ff73df;"></div>
<span class="t " style="left:1724.50px;top:508.30px;font-size:12.3px;color:#595959;transform:scaleX(0.9468);">Final Pass Single</span>
<span class="t " style="left:1724.50px;top:525.70px;font-size:12.3px;color:#595959;transform:scaleX(1.0239);">Shoulder Complete</span>
<div class="b" style="left:1677.6px;top:568px;width:40.7px;height:3px;background:#a04fa0;"></div>
<span class="t " style="left:1724.50px;top:552.10px;font-size:12.3px;color:#595959;transform:scaleX(0.9464);">Final Pass Both Sides</span>
<span class="t " style="left:1724.50px;top:569.50px;font-size:12.3px;color:#595959;transform:scaleX(1.0469);">Complete</span>
<div class="b" style="left:1649px;top:614px;width:230px;height:1px;background:#e2e2e2;"></div>
<span class="t " style="left:1663.97px;top:627.20px;font-size:14px;color:#323232;font-weight:bold;transform:scaleX(0.9160);">Parish Status</span>
<span class="t " style="left:1671.20px;top:658.20px;font-size:14px;color:#4a4a4a;transform:scaleX(0.9541);">Status</span>
<svg class="b" style="left:1675px;top:685px" width="30" height="64" viewBox="1675 685 30 64" fill="none" stroke-width="2"><path d="M1678.6 688.8L1700.600 698.800V709.300H1678.600Z" stroke="#55ff00"/><path d="M1678.6 725.5L1700.600 735.500V746H1678.600Z" stroke="#4a4a4a" stroke-width="1.6"/></svg>
<span class="t " style="left:1708.76px;top:693.50px;font-size:12.3px;color:#595959;transform:scaleX(1.0381);">Complete</span>
<span class="t " style="left:1708.33px;top:730.30px;font-size:12.3px;color:#595959;transform:scaleX(0.9662);">In Progress</span>
<div class="b" style="left:1649px;top:747px;width:237px;height:52px;background:#ffffff;"></div>
<span class="t " style="left:1653.56px;top:753.90px;font-size:14.5px;color:#7a0046;font-style:italic;transform:scaleX(0.9603);">*Some Interstate Routes are in Final</span>
<span class="t " style="left:1653.97px;top:774.80px;font-size:14.5px;color:#7a0046;font-style:italic;">Pass</span>
</body></html>
